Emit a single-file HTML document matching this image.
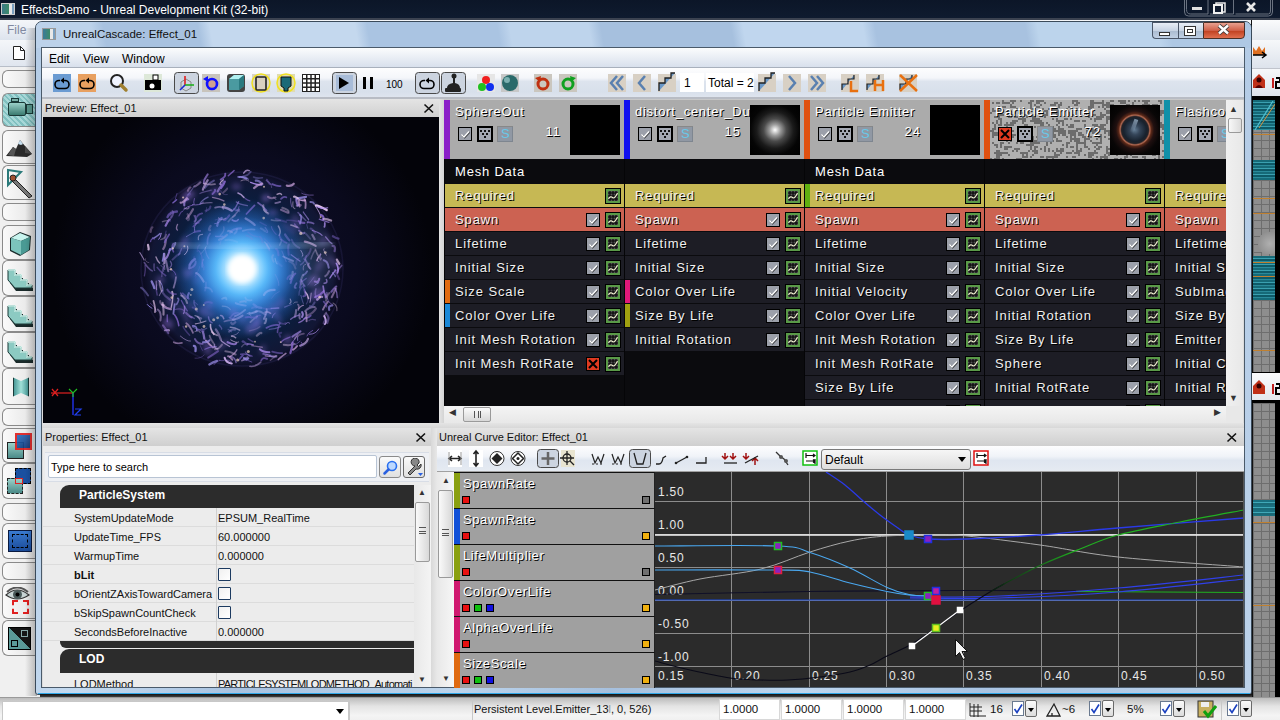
<!DOCTYPE html><html><head><meta charset="utf-8"><style>
*{margin:0;padding:0;box-sizing:border-box}
html,body{width:1280px;height:720px;overflow:hidden;background:#ececec;font-family:"Liberation Sans",sans-serif}
.a{position:absolute}
.ui{font-family:"Liberation Sans",sans-serif;font-size:12px;color:#000}
.em{font-family:"Liberation Sans",sans-serif;font-size:13px;color:#fff;letter-spacing:0.8px;text-shadow:1px 1px 0 #000}
.pr{font-family:"Liberation Sans",sans-serif;font-size:11px;color:#000}
</style></head><body>
<div style="position:absolute;left:0px;top:0px;width:1280px;height:18px;background:linear-gradient(#0c1628,#0f1b2f)"></div><div style="position:absolute;left:0px;top:18px;width:1280px;height:2px;background:#3b4250"></div><div style="position:absolute;left:1px;top:3px;width:14px;height:12px;background:linear-gradient(90deg,#3c7a8a 0,#3c8a6a 55%,#e8e8e8 55%,#e8e8e8 80%,#7aa0c0 80%);border:1px solid #ccc"></div><div style="position:absolute;left:21px;top:2px;white-space:nowrap;font-size:12px;color:#fff;line-height:16px">EffectsDemo - Unreal Development Kit (32-bit)</div><svg class="a" style="left:1180px;top:0" width="100" height="18"><g fill="none" stroke="#6a7280" stroke-width="1"><path d="M4.5 0 v12 q0 4 4 4 h80 q4 0 4 -4 v-12"/><path d="M6.5 0 v9.5 q0 4.5 4 4.5 h17.5 v-14 M30 14 h23.5 v-14 M55.5 14 h33 q2 0 2 -3 v-11"/></g><rect x="12" y="7" width="10" height="3" fill="#e0e0e0"/><rect x="36" y="3" width="9" height="9" fill="none" stroke="#e8e8e8" stroke-width="1.5"/><rect x="34" y="5" width="8" height="8" fill="#0f1a2e" stroke="#f0f0f0" stroke-width="2"/><path d="M67 3 l8 8 M75 3 l-8 8" stroke="#e8e8e8" stroke-width="2.6"/></svg><div style="position:absolute;left:0px;top:20px;width:1280px;height:20px;background:linear-gradient(#f4f6f9,#dde4ee)"></div><div style="position:absolute;left:7px;top:22px;white-space:nowrap;font-size:12px;color:#8088a0;line-height:16px">File</div><div style="position:absolute;left:0px;top:40px;width:35px;height:657px;background:#f0f0f0"></div><div style="position:absolute;left:1251px;top:20px;width:29px;height:677px;background:#111"></div><div style="position:absolute;left:1252px;top:20px;width:28px;height:20px;background:linear-gradient(#fafbfc,#e4e8ee)"></div><div style="position:absolute;left:1252px;top:40px;width:28px;height:28px;background:linear-gradient(#f6f8fa,#dde3ec)"></div><svg class="a" style="left:1252px;top:44px" width="28" height="18"><path d="M1 3 l3 4 l3 -5 l3 5 l3 -4 v8 h-12 z" fill="#e07020"/><path d="M1 11 h13 M10 8 l4 3 l-4 3" stroke="#000" stroke-width="1.5" fill="none"/></svg><div style="position:absolute;left:1252px;top:68px;width:28px;height:1px;background:#c0c4cc"></div><div style="position:absolute;left:1252px;top:69px;width:28px;height:27px;background:linear-gradient(#f6f8fa,#dde3ec)"></div><svg class="a" style="left:1252px;top:72px" width="28" height="18"><path d="M1 16 v-8 l6 -6 l6 6 v8 z" fill="#c03018"/><circle cx="7" cy="8" r="2.5" fill="#300"/><path d="M3 16 q4 -6 8 0" fill="#500"/><rect x="20" y="6" width="2" height="10" fill="#c02020"/><path d="M24 6 h4 v4 h-4 v6 h4" stroke="#000" stroke-width="2" fill="none"/></svg><div style="position:absolute;left:1252px;top:96px;width:28px;height:4px;background:#000"></div><div style="position:absolute;left:1253px;top:100px;width:22px;height:272px;background-color:#8e8e8e;background-image:linear-gradient(90deg,#6e6e6e 1px,transparent 1px),linear-gradient(#6e6e6e 1px,transparent 1px);background-size:8px 8px"></div><div style="position:absolute;left:1253px;top:100px;width:22px;height:30px;background:repeating-linear-gradient(#166a78 0 2px,#3aa0b0 2px 3px,#0e5a68 3px 5px,#2a8a9a 5px 6px)"></div><div style="position:absolute;left:1253px;top:160px;width:22px;height:20px;background:repeating-linear-gradient(#166a78 0 2px,#3aa0b0 2px 3px,#0e5a68 3px 5px,#2a8a9a 5px 6px)"></div><div style="position:absolute;left:1253px;top:256px;width:22px;height:44px;background:repeating-linear-gradient(#166a78 0 2px,#3aa0b0 2px 3px,#0e5a68 3px 5px,#2a8a9a 5px 6px)"></div><div style="position:absolute;left:1253px;top:134px;width:22px;height:1px;background:#c08030"></div><div style="position:absolute;left:1253px;top:198px;width:22px;height:1px;background:#c08030"></div><div style="position:absolute;left:1253px;top:213px;width:22px;height:1px;background:#c08030"></div><div style="position:absolute;left:1253px;top:262px;width:22px;height:1px;background:#c08030"></div><div style="position:absolute;left:1253px;top:276px;width:22px;height:1px;background:#c08030"></div><div style="position:absolute;left:1253px;top:350px;width:22px;height:1px;background:#c08030"></div><svg class="a" style="left:1253px;top:100px" width="22" height="40"><path d="M2 30 L20 1" stroke="#50c0d0" stroke-width="1.2"/><path d="M6 28 L22 4" stroke="#d09040" stroke-width="1"/></svg><div style="position:absolute;left:1258px;top:228px;width:17px;height:26px;background:radial-gradient(circle at 70% 60%,#b0b0b0,#909090 60%,transparent 62%)"></div><div style="position:absolute;left:1275px;top:100px;width:5px;height:272px;background:#000"></div><div style="position:absolute;left:1252px;top:372px;width:28px;height:1px;background:#000"></div><div style="position:absolute;left:1252px;top:373px;width:28px;height:27px;background:linear-gradient(#fafbfc,#e4e8ee)"></div><svg class="a" style="left:1252px;top:378px" width="28" height="18"><path d="M1 16 v-8 l6 -6 l6 6 v8 z" fill="#c03018"/><circle cx="7" cy="8" r="2.5" fill="#300"/><rect x="20" y="6" width="2" height="10" fill="#c02020"/><path d="M24 6 h4 v4 h-4 v6 h4" stroke="#000" stroke-width="2" fill="none"/></svg><div style="position:absolute;left:1252px;top:400px;width:28px;height:3px;background:#000"></div><div style="position:absolute;left:1253px;top:403px;width:22px;height:294px;background-color:#8e8e8e;background-image:linear-gradient(90deg,#6e6e6e 1px,transparent 1px),linear-gradient(#6e6e6e 1px,transparent 1px);background-size:8px 8px"></div><div style="position:absolute;left:1253px;top:500px;width:22px;height:16px;background:repeating-linear-gradient(#1a7080 0 2px,#40a8b8 2px 3px,#1a6a78 3px 5px)"></div><div style="position:absolute;left:1253px;top:522px;width:22px;height:1px;background:#c08030"></div><div style="position:absolute;left:1253px;top:605px;width:22px;height:1px;background:#c08030"></div><div style="position:absolute;left:1275px;top:403px;width:5px;height:294px;background:#000"></div><div style="position:absolute;left:0px;top:40px;width:35px;height:27px;background:linear-gradient(#f4f6f9,#dfe5ee)"></div><div style="position:absolute;left:0px;top:66px;width:35px;height:1px;background:#b8bec8"></div><svg class="a" style="left:12px;top:45px" width="14" height="16"><path d="M1.5 1.5 h7 l4 4 v9 h-11 z" fill="#fff" stroke="#222" stroke-width="1"/><path d="M8.5 1.5 v4 h4" fill="none" stroke="#222" stroke-width="1"/></svg><div style="position:absolute;left:2px;top:70px;width:33px;height:18px;background:linear-gradient(90deg,#fafafa,#e4e4e4);border:1px solid #8a8a8a;border-right:none;border-radius:6px 0 0 6px"></div><div style="position:absolute;left:2px;top:203px;width:33px;height:18px;background:linear-gradient(90deg,#fafafa,#e4e4e4);border:1px solid #8a8a8a;border-right:none;border-radius:6px 0 0 6px"></div><div style="position:absolute;left:2px;top:408px;width:33px;height:18px;background:linear-gradient(90deg,#fafafa,#e4e4e4);border:1px solid #8a8a8a;border-right:none;border-radius:6px 0 0 6px"></div><div style="position:absolute;left:2px;top:503px;width:33px;height:18px;background:linear-gradient(90deg,#fafafa,#e4e4e4);border:1px solid #8a8a8a;border-right:none;border-radius:6px 0 0 6px"></div><div style="position:absolute;left:2px;top:562px;width:33px;height:18px;background:linear-gradient(90deg,#fafafa,#e4e4e4);border:1px solid #8a8a8a;border-right:none;border-radius:6px 0 0 6px"></div><div style="position:absolute;left:2px;top:93px;width:33px;height:34px;background:repeating-linear-gradient(45deg,#a8d8d8 0 2px,#80c0c0 2px 4px);border:1px solid #8a8a8a;border-right:none;border-radius:6px 0 0 6px"><div class="a" style="left:5px;top:8px;width:18px;height:14px;background:linear-gradient(#9ad0c8,#3a7a70);border:1px solid #1a3a38;border-radius:2px"></div><div class="a" style="left:23px;top:10px;width:7px;height:10px;background:#5a9a90;border:1px solid #1a3a38"></div><div class="a" style="left:8px;top:4px;width:8px;height:4px;background:#7ab0a8;border:1px solid #1a3a38"></div></div><div style="position:absolute;left:2px;top:130px;width:33px;height:34px;background:linear-gradient(90deg,#fafafa,#e4e4e4);border:1px solid #8a8a8a;border-right:none;border-radius:6px 0 0 6px"><svg class="a" style="left:2px;top:6px" width="28" height="22"><path d="M1 19 L8 10 L11 12 L15 3 L20 9 L27 17 L22 20 Z" fill="#2a2a2a"/><path d="M15 3 L18 7 L16 8 L13 7 Z" fill="#c8e0f0"/><path d="M8 10 L11 12 L9 19 L3 18 Z" fill="#555"/><path d="M20 9 L27 17 L20 16 Z" fill="#4a4a4a"/></svg></div><div style="position:absolute;left:2px;top:165px;width:33px;height:35px;background:linear-gradient(90deg,#fafafa,#e4e4e4);border:1px solid #8a8a8a;border-right:none;border-radius:6px 0 0 6px"><svg class="a" style="left:2px;top:2px" width="30" height="32"><path d="M3 2 L16 4 L3 17 Z" fill="none" stroke="#2a7a7a" stroke-width="2"/><path d="M8 9 L27 28 L24 30 L6 12 Z" fill="#777" stroke="#222" stroke-width="1"/><circle cx="8" cy="10" r="3" fill="#a05030" stroke="#222" stroke-width="1"/></svg></div><div style="position:absolute;left:2px;top:225px;width:33px;height:35px;background:linear-gradient(90deg,#fafafa,#e4e4e4);border:1px solid #8a8a8a;border-right:none;border-radius:6px 0 0 6px"><svg class="a" style="left:3px;top:3px" width="28" height="29"><path d="M4 9 L14 3 L25 7 L24 21 L14 27 L4 22 Z" fill="#1a2a2a"/><path d="M5 9 L14 4 L24 8 L15 12 Z" fill="#c8f4ee"/><path d="M5 9 L15 12 L15 26 L5 21 Z" fill="#7cc4bc"/><path d="M15 12 L24 8 L23 21 L15 26 Z" fill="#4a9a94"/></svg></div><div style="position:absolute;left:2px;top:260px;width:33px;height:36px;background:linear-gradient(90deg,#fafafa,#e4e4e4);border:1px solid #8a8a8a;border-right:none;border-radius:6px 0 0 6px"><svg class="a" style="left:3px;top:6px" width="28" height="24"><path d="M4 6 h7 v5 h6 v5 h6 v5 h4 v3 h-17 l-6 -8 z" fill="#1a2a2a"/><path d="M2 3 h7 v5 h6 v5 h6 v5 h5 v3 h-17 l-7 -8 z" fill="#8ccac2" stroke="#1a3a38" stroke-width="1"/><path d="M2 3 h7 v5 h6 v5 h6 v5 h5" fill="none" stroke="#d0f8f0" stroke-width="1.5"/></svg></div><div style="position:absolute;left:2px;top:296px;width:33px;height:36px;background:linear-gradient(90deg,#fafafa,#e4e4e4);border:1px solid #8a8a8a;border-right:none;border-radius:6px 0 0 6px"><svg class="a" style="left:3px;top:6px" width="28" height="24"><path d="M4 6 h7 v5 h6 v5 h6 v5 h4 v3 h-17 l-6 -8 z" fill="#1a2a2a"/><path d="M2 3 h7 v5 h6 v5 h6 v5 h5 v3 h-17 l-7 -8 z" fill="#8ccac2" stroke="#1a3a38" stroke-width="1"/><path d="M2 3 h7 v5 h6 v5 h6 v5 h5" fill="none" stroke="#d0f8f0" stroke-width="1.5"/></svg></div><div style="position:absolute;left:2px;top:332px;width:33px;height:36px;background:linear-gradient(90deg,#fafafa,#e4e4e4);border:1px solid #8a8a8a;border-right:none;border-radius:6px 0 0 6px"><svg class="a" style="left:3px;top:6px" width="28" height="24"><path d="M4 6 h7 v5 h6 v5 h6 v5 h4 v3 h-17 l-6 -8 z" fill="#1a2a2a"/><path d="M2 3 h7 v5 h6 v5 h6 v5 h5 v3 h-17 l-7 -8 z" fill="#8ccac2" stroke="#1a3a38" stroke-width="1"/><path d="M2 3 h7 v5 h6 v5 h6 v5 h5" fill="none" stroke="#d0f8f0" stroke-width="1.5"/></svg></div><div style="position:absolute;left:2px;top:368px;width:33px;height:37px;background:linear-gradient(90deg,#fafafa,#e4e4e4);border:1px solid #8a8a8a;border-right:none;border-radius:6px 0 0 6px"><div class="a" style="left:10px;top:6px;width:16px;height:24px;background:linear-gradient(90deg,#4a9a98,#a0e0d8,#4a9a98);border:1px solid #1a3a38;clip-path:polygon(0 10%,50% 25%,100% 10%,100% 90%,50% 75%,0 90%)"></div></div><div style="position:absolute;left:2px;top:428px;width:33px;height:35px;background:linear-gradient(90deg,#fafafa,#e4e4e4);border:1px solid #8a8a8a;border-right:none;border-radius:6px 0 0 6px"><div class="a" style="left:4px;top:13px;width:17px;height:17px;background:linear-gradient(#9ad0c8,#4a8a88);border:1px solid #222"></div><div class="a" style="left:12px;top:4px;width:17px;height:17px;background:linear-gradient(135deg,#2a70c0,#103070);border:2px solid #e02020;opacity:.92"></div></div><div style="position:absolute;left:2px;top:463px;width:33px;height:36px;background:linear-gradient(90deg,#fafafa,#e4e4e4);border:1px solid #8a8a8a;border-right:none;border-radius:6px 0 0 6px"><div class="a" style="left:12px;top:4px;width:16px;height:16px;background:#1a50a0;border:1px dashed #000"></div><div class="a" style="left:4px;top:14px;width:16px;height:16px;background:linear-gradient(#9ad0c8,#4a8a88);border:1px dashed #222"></div><div class="a" style="left:12px;top:14px;width:8px;height:6px;border:1px solid #e02020"></div></div><div style="position:absolute;left:2px;top:523px;width:33px;height:36px;background:linear-gradient(90deg,#fafafa,#e4e4e4);border:1px solid #8a8a8a;border-right:none;border-radius:6px 0 0 6px"><div class="a" style="left:5px;top:6px;width:24px;height:22px;background:linear-gradient(#3a7ad0,#1a4a98);border:1px solid #0a1a40"></div><div class="a" style="left:9px;top:10px;width:16px;height:14px;border:1px dashed #000"></div></div><div style="position:absolute;left:2px;top:583px;width:33px;height:36px;background:linear-gradient(90deg,#fafafa,#e4e4e4);border:1px solid #8a8a8a;border-right:none;border-radius:6px 0 0 6px"><div class="a" style="left:9px;top:16px;width:17px;height:14px;border:2px dashed #e02020"></div><svg class="a" style="left:2px;top:3px" width="26" height="16"><path d="M1 8 Q12 -2 24 8 Q12 16 1 8 z" fill="#c8d4d4" stroke="#333" stroke-width="1.2"/><circle cx="12.5" cy="7.5" r="4.5" fill="#4a5a5a"/><circle cx="12.5" cy="7.5" r="2" fill="#000"/><path d="M2 5 Q12 -4 23 5" stroke="#555" stroke-width="2" fill="none"/></svg></div><div style="position:absolute;left:2px;top:620px;width:33px;height:36px;background:linear-gradient(90deg,#fafafa,#e4e4e4);border:1px solid #8a8a8a;border-right:none;border-radius:6px 0 0 6px"><div class="a" style="left:5px;top:6px;width:23px;height:23px;background:linear-gradient(to top right,#5a9a98 50%,#151515 50%);border:1px solid #000"></div><div class="a" style="left:18px;top:9px;width:7px;height:7px;border:1px solid #8aa"></div><div class="a" style="left:8px;top:19px;width:7px;height:7px;border:1px solid #000"></div></div><div style="position:absolute;left:25px;top:28px;width:12px;height:668px;background:linear-gradient(90deg,rgba(0,0,0,0),rgba(0,0,0,.25))"></div><div style="position:absolute;left:35px;top:21px;width:1217px;height:674px;background:linear-gradient(100deg,#b4cce6 0%,#c4daf0 12%,#a8c2e0 24%,#bcd4ec 40%,#a6c0de 52%,#bed6ee 66%,#aac4e2 80%,#bcd2ea 100%);border:1px solid #3a4a5a;border-radius:7px 7px 3px 3px"></div><div style="position:absolute;left:36px;top:22px;width:1215px;height:26px;background:linear-gradient(80deg,#bcd2ea 0px,#bcd2ea 58px,#a8c2e0 70px,#a8c2e0 163px,#c4d8ee 175px,#c4d8ee 318px,#aac4e2 330px,#aac4e2 458px,#bed4ec 470px,#bed4ec 548px,#a6c0de 560px,#a6c0de 688px,#c0d6ee 700px,#c0d6ee 818px,#a8c2e0 830px,#a8c2e0 978px,#bcd4ec 990px,#bcd4ec 1108px,#aec8e4 1120px,#aec8e4 1204px,#bcd2ea 1216px);border-radius:6px 6px 0 0"></div><div style="position:absolute;left:42px;top:28px;width:14px;height:12px;background:linear-gradient(90deg,#3c7a9a 0,#3c8a6a 55%,#e8e8e8 55%,#e8e8e8 80%,#7aa0c0 80%);border:1px solid #999"></div><div style="position:absolute;left:63px;top:26px;white-space:nowrap;font-size:11.5px;color:#111;line-height:16px">UnrealCascade: Effect_01</div><div style="position:absolute;left:1152px;top:22px;width:26px;height:17px;background:linear-gradient(#e8eef6,#c8d4e4 50%,#aabbd0 52%,#c0d0e4);border:1px solid #4a5668;border-right:none;border-radius:0 0 0 4px"></div><div style="position:absolute;left:1159px;top:32px;width:11px;height:4px;background:#fff;border:1px solid #333"></div><div style="position:absolute;left:1178px;top:22px;width:25px;height:17px;background:linear-gradient(#e8eef6,#c8d4e4 50%,#aabbd0 52%,#c0d0e4);border:1px solid #4a5668;border-right:none"></div><div style="position:absolute;left:1184px;top:26px;width:12px;height:10px;background:#fff;border:1px solid #333;box-shadow:inset 0 0 0 2px #fff,inset 0 0 0 3px #333"></div><div style="position:absolute;left:1203px;top:22px;width:42px;height:17px;background:linear-gradient(#e8a090,#d06048 50%,#c04020 52%,#e07050);border:1px solid #4a3028;border-radius:0 0 4px 0"></div><svg class="a" style="left:1217px;top:24px" width="14" height="12"><path d="M2 1.5 l9 8 M11 1.5 l-9 8" stroke="#3a3a3a" stroke-width="4.2"/><path d="M2 1.5 l9 8 M11 1.5 l-9 8" stroke="#fff" stroke-width="2.4"/></svg><div style="position:absolute;left:41px;top:47px;width:1204px;height:641px;background:#dcdcdc;border:1px solid #4a5a6a"></div><div style="position:absolute;left:42px;top:48px;width:1202px;height:19px;background:linear-gradient(#fbfcfd,#e6ebf3 60%,#d8e0ec)"></div><div style="position:absolute;left:49px;top:52px;white-space:nowrap;font-size:12px;color:#000;line-height:14px">Edit</div><div style="position:absolute;left:83px;top:52px;white-space:nowrap;font-size:12px;color:#000;line-height:14px">View</div><div style="position:absolute;left:122px;top:52px;white-space:nowrap;font-size:12px;color:#000;line-height:14px">Window</div><div style="position:absolute;left:42px;top:67px;width:1202px;height:1px;background:#a8b0bc"></div><div style="position:absolute;left:42px;top:68px;width:1202px;height:30px;background:linear-gradient(#fdfdfe,#f4f6fa 33%,#dde4ee 45%,#d8e0eb 80%,#dfe5ee 100%)"></div><div style="position:absolute;left:42px;top:97px;width:1202px;height:2px;background:#b8bcc4"></div><div style="position:absolute;left:43px;top:99px;width:396px;height:18px;background:linear-gradient(#e4e4e4,#d0d0d0)"></div><div style="position:absolute;left:45px;top:100px;white-space:nowrap;font-size:11px;color:#111;line-height:16px">Preview: Effect_01</div><svg class="a" style="left:423px;top:103px" width="12" height="11"><path d="M1.5 1.5 L10 9.5 M10 1.5 L1.5 9.5" stroke="#111" stroke-width="1.6"/></svg><svg class="a" style="left:43px;top:117px" width="396" height="306"><defs><radialGradient id="halo" cx="199" cy="152" r="190" gradientUnits="userSpaceOnUse"><stop offset="0" stop-color="#10102a"/><stop offset=".6" stop-color="#0a0a1e"/><stop offset="1" stop-color="#030309"/></radialGradient><radialGradient id="core" cx="199" cy="152" r="102" gradientUnits="userSpaceOnUse"><stop offset="0" stop-color="#ffffff"/><stop offset=".09" stop-color="#d8f4ff"/><stop offset=".22" stop-color="#50b8f8"/><stop offset=".36" stop-color="#2a6ac0"/><stop offset=".52" stop-color="#143466"/><stop offset=".7" stop-color="#0c1c3c"/><stop offset=".9" stop-color="#121634"/><stop offset="1" stop-color="#0c0c22" stop-opacity="0"/></radialGradient><radialGradient id="glow" cx="199" cy="152" r="70" gradientUnits="userSpaceOnUse"><stop offset="0" stop-color="#ffffff" stop-opacity="1"/><stop offset=".14" stop-color="#e0f8ff" stop-opacity=".95"/><stop offset=".38" stop-color="#60c0ff" stop-opacity=".65"/><stop offset=".7" stop-color="#3080e0" stop-opacity=".3"/><stop offset="1" stop-color="#2060c0" stop-opacity="0"/></radialGradient><filter id="bl"><feGaussianBlur stdDeviation="0.5"/></filter><filter id="bl2"><feGaussianBlur stdDeviation="2.5"/></filter><filter id="bl3"><feGaussianBlur stdDeviation="6"/></filter></defs><rect width="396" height="306" fill="url(#halo)"/><circle cx="199" cy="152" r="102" fill="url(#core)"/><ellipse cx="199" cy="152" rx="101" ry="97.0" fill="none" stroke="#6a60c0" stroke-width="1.5" opacity="0.12" filter="url(#bl)"/><g filter="url(#bl2)"><ellipse cx="234.7" cy="199.7" rx="7.3" ry="2.2" fill="#8a6ad0" opacity="0.38" transform="rotate(66 234.7 199.7)"/><ellipse cx="151.2" cy="149.9" rx="4.2" ry="3.3" fill="#8a6ad0" opacity="0.27" transform="rotate(16 151.2 149.9)"/><ellipse cx="229.8" cy="95.7" rx="4.6" ry="2.7" fill="#8a6ad0" opacity="0.41" transform="rotate(171 229.8 95.7)"/><ellipse cx="140.2" cy="194.9" rx="8.9" ry="2.1" fill="#8a6ad0" opacity="0.46" transform="rotate(52 140.2 194.9)"/><ellipse cx="237.6" cy="185.8" rx="5.5" ry="4.4" fill="#8a6ad0" opacity="0.30" transform="rotate(105 237.6 185.8)"/><ellipse cx="145.5" cy="205.1" rx="6.7" ry="2.2" fill="#8a6ad0" opacity="0.26" transform="rotate(37 145.5 205.1)"/><ellipse cx="128.0" cy="185.3" rx="5.6" ry="3.8" fill="#8a6ad0" opacity="0.36" transform="rotate(54 128.0 185.3)"/><ellipse cx="172.3" cy="74.8" rx="5.2" ry="3.7" fill="#8a6ad0" opacity="0.38" transform="rotate(158 172.3 74.8)"/><ellipse cx="179.8" cy="228.0" rx="8.9" ry="2.4" fill="#8a6ad0" opacity="0.35" transform="rotate(136 179.8 228.0)"/><ellipse cx="146.5" cy="155.5" rx="4.2" ry="4.0" fill="#8a6ad0" opacity="0.44" transform="rotate(103 146.5 155.5)"/><ellipse cx="164.4" cy="230.5" rx="7.5" ry="3.8" fill="#8a6ad0" opacity="0.39" transform="rotate(82 164.4 230.5)"/><ellipse cx="280.8" cy="123.6" rx="6.4" ry="4.0" fill="#8a6ad0" opacity="0.27" transform="rotate(126 280.8 123.6)"/><ellipse cx="276.3" cy="148.8" rx="8.1" ry="2.9" fill="#8a6ad0" opacity="0.35" transform="rotate(120 276.3 148.8)"/><ellipse cx="154.2" cy="162.6" rx="4.8" ry="2.4" fill="#8a6ad0" opacity="0.26" transform="rotate(138 154.2 162.6)"/><ellipse cx="199.8" cy="201.4" rx="6.0" ry="4.6" fill="#8a6ad0" opacity="0.27" transform="rotate(81 199.8 201.4)"/><ellipse cx="252.9" cy="105.5" rx="8.1" ry="4.6" fill="#8a6ad0" opacity="0.32" transform="rotate(75 252.9 105.5)"/><ellipse cx="246.0" cy="111.8" rx="8.8" ry="2.5" fill="#8a6ad0" opacity="0.29" transform="rotate(42 246.0 111.8)"/><ellipse cx="142.6" cy="157.1" rx="6.9" ry="2.8" fill="#8a6ad0" opacity="0.25" transform="rotate(75 142.6 157.1)"/><ellipse cx="141.0" cy="127.3" rx="8.8" ry="4.1" fill="#8a6ad0" opacity="0.38" transform="rotate(111 141.0 127.3)"/><ellipse cx="273.3" cy="177.2" rx="8.5" ry="4.3" fill="#8a6ad0" opacity="0.47" transform="rotate(144 273.3 177.2)"/><ellipse cx="147.0" cy="188.8" rx="4.5" ry="3.9" fill="#8a6ad0" opacity="0.27" transform="rotate(12 147.0 188.8)"/><ellipse cx="228.0" cy="197.3" rx="5.7" ry="2.2" fill="#8a6ad0" opacity="0.25" transform="rotate(27 228.0 197.3)"/><ellipse cx="166.2" cy="188.3" rx="4.1" ry="4.6" fill="#8a6ad0" opacity="0.40" transform="rotate(27 166.2 188.3)"/><ellipse cx="165.9" cy="197.3" rx="5.8" ry="2.4" fill="#8a6ad0" opacity="0.46" transform="rotate(179 165.9 197.3)"/><ellipse cx="131.1" cy="158.6" rx="4.4" ry="2.3" fill="#8a6ad0" opacity="0.34" transform="rotate(48 131.1 158.6)"/><ellipse cx="244.7" cy="222.5" rx="4.1" ry="4.9" fill="#8a6ad0" opacity="0.38" transform="rotate(26 244.7 222.5)"/><ellipse cx="270.1" cy="163.7" rx="6.6" ry="4.9" fill="#8a6ad0" opacity="0.47" transform="rotate(125 270.1 163.7)"/><ellipse cx="160.1" cy="193.4" rx="4.8" ry="4.3" fill="#8a6ad0" opacity="0.38" transform="rotate(140 160.1 193.4)"/><ellipse cx="209.4" cy="210.2" rx="8.1" ry="5.0" fill="#8a6ad0" opacity="0.46" transform="rotate(145 209.4 210.2)"/><ellipse cx="193.5" cy="69.7" rx="5.1" ry="3.6" fill="#8a6ad0" opacity="0.34" transform="rotate(5 193.5 69.7)"/><ellipse cx="190.5" cy="195.8" rx="5.3" ry="4.1" fill="#8a6ad0" opacity="0.49" transform="rotate(81 190.5 195.8)"/><ellipse cx="290.6" cy="145.4" rx="8.8" ry="3.1" fill="#8a6ad0" opacity="0.31" transform="rotate(41 290.6 145.4)"/><ellipse cx="214.5" cy="202.5" rx="7.1" ry="4.7" fill="#8a6ad0" opacity="0.46" transform="rotate(86 214.5 202.5)"/><ellipse cx="222.8" cy="81.1" rx="4.4" ry="4.0" fill="#8a6ad0" opacity="0.48" transform="rotate(141 222.8 81.1)"/><ellipse cx="117.3" cy="162.9" rx="4.9" ry="4.4" fill="#8a6ad0" opacity="0.33" transform="rotate(144 117.3 162.9)"/><ellipse cx="124.8" cy="206.7" rx="6.0" ry="4.8" fill="#8a6ad0" opacity="0.43" transform="rotate(31 124.8 206.7)"/><ellipse cx="228.9" cy="192.1" rx="8.5" ry="4.4" fill="#8a6ad0" opacity="0.29" transform="rotate(149 228.9 192.1)"/><ellipse cx="147.3" cy="76.6" rx="5.8" ry="3.6" fill="#8a6ad0" opacity="0.28" transform="rotate(3 147.3 76.6)"/><ellipse cx="143.9" cy="79.5" rx="6.6" ry="4.8" fill="#8a6ad0" opacity="0.36" transform="rotate(157 143.9 79.5)"/><ellipse cx="219.9" cy="232.4" rx="5.3" ry="2.9" fill="#8a6ad0" opacity="0.31" transform="rotate(106 219.9 232.4)"/></g><g filter="url(#bl)" fill="none" stroke-linecap="round"><path d="M144.8 181.0 Q144.5 178.3 145.9 176.1" stroke="#9488e0" stroke-width="2.1" opacity="0.65"/><path d="M228.3 191.7 Q225.9 192.1 220.2 191.3" stroke="#8a68d0" stroke-width="1.6" opacity="0.32"/><path d="M115.8 122.4 Q117.4 121.1 118.3 116.3" stroke="#b090f0" stroke-width="1.0" opacity="0.82"/><path d="M253.5 166.2 Q250.3 170.9 252.7 170.9" stroke="#b090f0" stroke-width="1.8" opacity="0.46"/><path d="M121.3 146.3 Q121.5 141.4 121.3 136.8" stroke="#d0b0f0" stroke-width="2.1" opacity="0.67"/><path d="M193.1 245.7 Q192.4 240.3 187.6 239.3" stroke="#b090f0" stroke-width="1.3" opacity="0.58"/><path d="M121.3 188.0 Q117.0 187.7 117.2 184.1" stroke="#c8a0d8" stroke-width="2.1" opacity="0.40"/><path d="M217.8 245.1 Q212.3 250.2 206.9 249.3" stroke="#d0b0f0" stroke-width="1.5" opacity="0.44"/><path d="M157.3 215.8 Q156.0 212.3 151.9 214.5" stroke="#e8c8f0" stroke-width="0.9" opacity="0.53"/><path d="M151.1 106.6 Q154.0 104.3 151.0 98.5" stroke="#b090f0" stroke-width="1.3" opacity="0.32"/><path d="M239.2 236.1 Q236.3 236.4 229.2 234.6" stroke="#7860c0" stroke-width="1.7" opacity="0.58"/><path d="M120.7 154.5 Q121.1 149.6 117.9 148.5" stroke="#b090f0" stroke-width="0.9" opacity="0.45"/><path d="M196.0 196.0 Q190.5 195.6 187.9 199.8" stroke="#a080e0" stroke-width="1.7" opacity="0.37"/><path d="M188.1 244.7 Q184.1 242.0 183.1 243.9" stroke="#8a68d0" stroke-width="1.2" opacity="0.50"/><path d="M131.7 84.4 Q132.5 81.4 134.0 76.4" stroke="#7860c0" stroke-width="0.9" opacity="0.55"/><path d="M260.1 157.7 Q257.3 162.4 258.3 167.4" stroke="#e8c8f0" stroke-width="2.0" opacity="0.32"/><path d="M125.3 154.2 Q124.2 150.1 123.0 143.8" stroke="#d0b0f0" stroke-width="2.1" opacity="0.47"/><path d="M141.3 88.4 Q140.6 83.1 145.2 82.3" stroke="#b090f0" stroke-width="2.1" opacity="0.67"/><path d="M268.2 176.1 Q267.6 183.5 267.0 185.3" stroke="#d0b0f0" stroke-width="1.0" opacity="0.64"/><path d="M192.3 205.3 Q189.3 208.5 188.3 205.8" stroke="#c8a0d8" stroke-width="2.3" opacity="0.37"/><path d="M158.2 201.5 Q156.2 200.6 154.6 199.7" stroke="#d0b0f0" stroke-width="2.0" opacity="0.40"/><path d="M217.9 111.5 Q219.4 111.7 222.2 114.3" stroke="#d0b0f0" stroke-width="2.2" opacity="0.27"/><path d="M251.8 226.9 Q246.9 229.0 240.7 227.8" stroke="#e8c8f0" stroke-width="1.9" opacity="0.42"/><path d="M280.7 174.1 Q277.1 178.5 271.9 180.1" stroke="#8a68d0" stroke-width="2.0" opacity="0.81"/><path d="M230.3 80.0 Q233.6 82.7 233.3 82.8" stroke="#d0b0f0" stroke-width="1.0" opacity="0.36"/><path d="M280.9 131.6 Q279.4 132.0 283.3 138.2" stroke="#d0b0f0" stroke-width="0.9" opacity="0.58"/><path d="M198.0 63.8 Q203.0 61.4 206.0 64.2" stroke="#e8c8f0" stroke-width="1.0" opacity="0.48"/><path d="M190.9 92.4 Q196.4 93.2 196.3 94.1" stroke="#9488e0" stroke-width="2.2" opacity="0.31"/><path d="M260.4 169.8 Q262.2 173.2 262.7 178.6" stroke="#7860c0" stroke-width="1.1" opacity="0.57"/><path d="M122.7 158.6 Q116.7 154.4 114.2 150.4" stroke="#7860c0" stroke-width="1.6" opacity="0.54"/><path d="M237.8 122.6 Q239.8 122.5 236.7 128.1" stroke="#e8c8f0" stroke-width="1.6" opacity="0.28"/><path d="M298.7 148.4 Q299.0 148.5 294.1 153.7" stroke="#b090f0" stroke-width="1.6" opacity="0.43"/><path d="M265.0 221.8 Q263.4 226.5 257.1 228.7" stroke="#d0b0f0" stroke-width="2.1" opacity="0.64"/><path d="M237.6 209.6 Q231.4 212.4 226.3 212.4" stroke="#9488e0" stroke-width="1.3" opacity="0.46"/><path d="M292.7 153.0 Q287.5 159.6 286.9 161.1" stroke="#a080e0" stroke-width="1.3" opacity="0.86"/><path d="M144.3 193.9 Q140.5 188.2 138.4 183.4" stroke="#7860c0" stroke-width="1.3" opacity="0.71"/><path d="M177.4 118.4 Q181.9 113.8 180.8 110.0" stroke="#c8a0d8" stroke-width="1.4" opacity="0.30"/><path d="M272.5 89.2 Q277.4 96.5 277.4 98.5" stroke="#d0b0f0" stroke-width="1.0" opacity="0.77"/><path d="M114.2 178.0 Q112.6 170.3 113.7 168.0" stroke="#8a68d0" stroke-width="1.5" opacity="0.42"/><path d="M196.7 213.2 Q191.4 210.1 187.3 210.2" stroke="#e8c8f0" stroke-width="1.5" opacity="0.54"/><path d="M227.6 196.3 Q224.8 194.1 222.0 195.3" stroke="#c8a0d8" stroke-width="1.5" opacity="0.69"/><path d="M217.3 198.3 Q212.9 198.2 213.5 201.2" stroke="#7860c0" stroke-width="1.2" opacity="0.59"/><path d="M223.9 126.8 Q223.4 128.7 226.4 133.3" stroke="#a080e0" stroke-width="1.7" opacity="0.40"/><path d="M172.2 90.7 Q178.4 88.8 180.4 91.8" stroke="#d0b0f0" stroke-width="1.8" opacity="0.47"/><path d="M171.0 217.4 Q167.0 212.0 167.5 207.5" stroke="#e8c8f0" stroke-width="1.6" opacity="0.78"/><path d="M238.9 134.1 Q240.9 139.0 243.2 144.6" stroke="#b090f0" stroke-width="1.1" opacity="0.32"/><path d="M275.7 212.0 Q273.2 217.1 266.5 217.3" stroke="#b090f0" stroke-width="1.0" opacity="0.68"/><path d="M209.0 239.1 Q202.2 236.0 197.7 237.3" stroke="#7860c0" stroke-width="1.5" opacity="0.63"/><path d="M272.4 202.8 Q267.3 201.8 266.0 203.7" stroke="#a080e0" stroke-width="1.3" opacity="0.34"/><path d="M271.9 133.5 Q269.8 136.1 268.0 141.9" stroke="#d0b0f0" stroke-width="1.5" opacity="0.31"/><path d="M279.1 179.9 Q277.6 178.8 274.3 182.7" stroke="#d0b0f0" stroke-width="2.2" opacity="0.68"/><path d="M257.1 164.1 Q258.0 165.7 256.7 170.8" stroke="#7860c0" stroke-width="1.6" opacity="0.60"/><path d="M255.7 141.6 Q252.8 142.9 253.2 147.6" stroke="#7860c0" stroke-width="1.8" opacity="0.31"/><path d="M265.3 103.6 Q262.3 108.1 264.6 111.4" stroke="#9488e0" stroke-width="0.9" opacity="0.34"/><path d="M127.8 192.2 Q123.2 191.3 119.2 187.8" stroke="#c8a0d8" stroke-width="2.3" opacity="0.71"/><path d="M152.5 234.1 Q153.2 228.7 150.9 228.9" stroke="#9488e0" stroke-width="2.3" opacity="0.84"/><path d="M256.6 197.1 Q256.2 201.7 256.9 201.7" stroke="#d0b0f0" stroke-width="2.0" opacity="0.49"/><path d="M220.8 92.5 Q220.8 94.3 224.4 95.6" stroke="#e8c8f0" stroke-width="1.4" opacity="0.37"/><path d="M293.3 169.4 Q292.4 169.3 288.3 174.8" stroke="#a080e0" stroke-width="2.0" opacity="0.61"/><path d="M213.4 190.5 Q210.4 189.8 209.0 191.2" stroke="#a080e0" stroke-width="1.9" opacity="0.33"/><path d="M188.4 214.8 Q189.2 214.4 185.1 212.4" stroke="#b090f0" stroke-width="1.2" opacity="0.29"/><path d="M272.4 132.4 Q273.6 137.1 277.7 142.7" stroke="#e8c8f0" stroke-width="1.6" opacity="0.37"/><path d="M230.0 138.2 Q228.2 139.9 230.6 144.6" stroke="#c8a0d8" stroke-width="2.0" opacity="0.38"/><path d="M116.6 146.1 Q114.3 143.9 113.0 140.0" stroke="#e8c8f0" stroke-width="1.4" opacity="0.61"/><path d="M272.8 88.3 Q275.8 88.3 283.7 93.1" stroke="#e8c8f0" stroke-width="2.3" opacity="0.94"/><path d="M235.8 191.0 Q230.4 191.4 228.1 191.3" stroke="#b090f0" stroke-width="1.3" opacity="0.60"/><path d="M192.0 212.7 Q188.7 211.7 186.2 214.6" stroke="#d0b0f0" stroke-width="2.1" opacity="0.35"/><path d="M161.3 221.6 Q160.6 216.5 159.8 214.6" stroke="#b090f0" stroke-width="2.3" opacity="0.66"/><path d="M152.0 159.2 Q156.8 151.7 156.6 149.7" stroke="#7860c0" stroke-width="1.0" opacity="0.34"/><path d="M238.0 81.8 Q240.7 79.1 243.3 80.3" stroke="#7860c0" stroke-width="1.8" opacity="0.73"/><path d="M177.1 127.4 Q177.0 122.4 182.5 119.4" stroke="#a080e0" stroke-width="1.3" opacity="0.28"/><path d="M151.0 87.2 Q150.2 85.5 151.4 81.6" stroke="#8a68d0" stroke-width="1.0" opacity="0.65"/><path d="M160.9 153.0 Q161.9 150.1 159.4 145.3" stroke="#8a68d0" stroke-width="1.0" opacity="0.46"/><path d="M180.9 103.2 Q182.4 103.5 186.3 98.3" stroke="#7860c0" stroke-width="2.1" opacity="0.58"/><path d="M271.1 160.0 Q268.9 163.3 264.9 168.0" stroke="#9488e0" stroke-width="0.9" opacity="0.39"/><path d="M113.6 194.6 Q112.7 190.1 107.3 186.1" stroke="#8a68d0" stroke-width="1.0" opacity="0.42"/><path d="M217.0 105.3 Q222.8 108.4 223.4 108.6" stroke="#8a68d0" stroke-width="1.3" opacity="0.31"/><path d="M269.3 117.9 Q272.2 122.9 271.5 122.2" stroke="#d0b0f0" stroke-width="2.1" opacity="0.46"/><path d="M233.1 132.0 Q235.1 132.6 235.4 138.1" stroke="#8a68d0" stroke-width="2.1" opacity="0.47"/><path d="M136.0 98.9 Q138.1 93.9 139.5 94.5" stroke="#8a68d0" stroke-width="1.1" opacity="0.52"/><path d="M189.4 94.0 Q192.9 90.9 195.6 84.7" stroke="#a080e0" stroke-width="1.4" opacity="0.58"/><path d="M130.6 170.7 Q132.7 164.3 133.0 160.2" stroke="#d0b0f0" stroke-width="1.8" opacity="0.50"/><path d="M130.0 179.0 Q129.5 175.4 129.2 174.9" stroke="#e8c8f0" stroke-width="2.0" opacity="0.72"/><path d="M264.5 180.2 Q265.7 183.6 263.3 187.0" stroke="#a080e0" stroke-width="1.1" opacity="0.31"/><path d="M161.2 237.8 Q158.1 241.8 152.0 241.2" stroke="#8a68d0" stroke-width="1.0" opacity="0.36"/><path d="M169.5 77.0 Q173.1 73.6 172.0 72.8" stroke="#8a68d0" stroke-width="1.9" opacity="0.69"/><path d="M228.4 102.9 Q231.8 103.9 237.3 103.5" stroke="#e8c8f0" stroke-width="1.6" opacity="0.33"/><path d="M224.1 241.9 Q220.0 239.8 218.2 243.4" stroke="#8a68d0" stroke-width="1.8" opacity="0.58"/><path d="M169.2 205.8 Q165.9 204.5 165.5 199.9" stroke="#a080e0" stroke-width="1.4" opacity="0.57"/><path d="M109.6 121.0 Q111.0 121.8 117.0 116.6" stroke="#9488e0" stroke-width="1.4" opacity="0.77"/><path d="M151.3 201.4 Q146.4 198.7 146.6 199.2" stroke="#a080e0" stroke-width="1.6" opacity="0.43"/><path d="M263.3 138.6 Q262.8 144.6 257.5 147.9" stroke="#a080e0" stroke-width="1.3" opacity="0.38"/><path d="M125.9 191.9 Q122.5 191.8 119.2 190.3" stroke="#a080e0" stroke-width="0.9" opacity="0.33"/><path d="M253.1 193.0 Q253.0 196.9 251.9 199.7" stroke="#d0b0f0" stroke-width="2.1" opacity="0.46"/><path d="M252.3 156.5 Q249.6 158.6 247.6 165.9" stroke="#8a68d0" stroke-width="2.0" opacity="0.63"/><path d="M192.6 220.7 Q191.0 219.1 188.7 219.3" stroke="#e8c8f0" stroke-width="1.6" opacity="0.59"/><path d="M238.2 215.8 Q234.9 215.9 237.3 219.7" stroke="#8a68d0" stroke-width="2.0" opacity="0.33"/><path d="M165.9 141.5 Q162.3 136.7 162.3 130.6" stroke="#9488e0" stroke-width="1.1" opacity="0.51"/><path d="M178.6 212.0 Q179.1 211.4 176.3 208.3" stroke="#a080e0" stroke-width="1.5" opacity="0.46"/><path d="M283.5 196.9 Q286.9 200.1 284.3 206.1" stroke="#a080e0" stroke-width="2.1" opacity="0.42"/><path d="M289.9 119.2 Q293.6 121.5 295.5 121.6" stroke="#7860c0" stroke-width="2.2" opacity="0.52"/><path d="M281.4 199.1 Q284.1 205.1 281.9 207.1" stroke="#d0b0f0" stroke-width="1.9" opacity="0.89"/><path d="M247.9 108.0 Q253.4 109.9 254.1 110.3" stroke="#e8c8f0" stroke-width="1.6" opacity="0.51"/><path d="M232.2 157.4 Q236.3 164.6 235.8 168.4" stroke="#9488e0" stroke-width="1.0" opacity="0.44"/><path d="M258.4 225.1 Q260.5 226.2 257.5 229.2" stroke="#8a68d0" stroke-width="0.9" opacity="0.75"/><path d="M167.1 113.2 Q164.6 113.2 167.6 108.9" stroke="#c8a0d8" stroke-width="2.2" opacity="0.33"/><path d="M158.2 86.6 Q165.0 85.5 169.2 85.7" stroke="#d0b0f0" stroke-width="1.1" opacity="0.41"/><path d="M221.2 121.7 Q226.6 126.5 228.1 129.7" stroke="#7860c0" stroke-width="1.1" opacity="0.40"/><path d="M143.4 82.0 Q143.8 78.6 147.1 76.9" stroke="#7860c0" stroke-width="2.0" opacity="0.36"/><path d="M210.6 60.0 Q213.8 61.8 219.4 60.7" stroke="#9488e0" stroke-width="1.6" opacity="0.36"/><path d="M152.8 160.8 Q153.9 160.6 152.4 156.4" stroke="#7860c0" stroke-width="0.9" opacity="0.31"/><path d="M203.4 97.0 Q207.4 92.7 211.5 88.4" stroke="#8a68d0" stroke-width="1.7" opacity="0.69"/><path d="M101.1 143.0 Q100.8 141.9 96.8 135.5" stroke="#d0b0f0" stroke-width="1.1" opacity="0.64"/><path d="M272.9 191.5 Q270.7 195.6 265.1 198.2" stroke="#c8a0d8" stroke-width="2.2" opacity="0.37"/><path d="M196.1 60.1 Q198.9 59.7 203.3 61.8" stroke="#9488e0" stroke-width="1.6" opacity="0.87"/><path d="M251.5 107.0 Q253.8 110.5 255.8 111.0" stroke="#a080e0" stroke-width="1.4" opacity="0.46"/><path d="M228.4 109.5 Q228.8 113.1 233.2 117.4" stroke="#7860c0" stroke-width="1.1" opacity="0.50"/><path d="M255.6 104.1 Q257.3 106.2 261.3 105.9" stroke="#8a68d0" stroke-width="2.3" opacity="0.67"/><path d="M128.2 100.7 Q131.6 95.9 129.4 94.0" stroke="#b090f0" stroke-width="1.8" opacity="0.42"/><path d="M232.1 196.3 Q229.5 197.1 229.2 200.7" stroke="#b090f0" stroke-width="1.0" opacity="0.54"/><path d="M154.8 187.8 Q154.9 187.6 151.5 185.1" stroke="#7860c0" stroke-width="1.1" opacity="0.47"/><path d="M130.4 196.9 Q130.7 192.4 131.8 187.1" stroke="#9488e0" stroke-width="1.8" opacity="0.77"/><path d="M260.3 95.0 Q261.4 96.8 265.6 102.5" stroke="#b090f0" stroke-width="1.3" opacity="0.57"/><path d="M267.8 198.6 Q265.7 201.0 261.1 201.8" stroke="#7860c0" stroke-width="1.6" opacity="0.78"/><path d="M221.8 125.1 Q226.3 130.8 226.4 131.8" stroke="#c8a0d8" stroke-width="1.4" opacity="0.50"/><path d="M275.0 140.3 Q273.2 144.1 275.4 144.6" stroke="#d0b0f0" stroke-width="1.0" opacity="0.57"/><path d="M120.2 132.0 Q122.4 129.3 122.9 122.7" stroke="#c8a0d8" stroke-width="2.2" opacity="0.53"/><path d="M175.7 100.9 Q177.0 104.0 182.8 101.3" stroke="#c8a0d8" stroke-width="1.3" opacity="0.55"/><path d="M264.4 177.5 Q263.1 179.6 260.2 179.5" stroke="#7860c0" stroke-width="1.3" opacity="0.34"/><path d="M267.7 132.2 Q267.2 136.8 261.1 141.9" stroke="#8a68d0" stroke-width="2.0" opacity="0.36"/><path d="M137.6 85.7 Q139.1 86.3 143.9 81.2" stroke="#c8a0d8" stroke-width="2.1" opacity="0.72"/><path d="M120.5 197.7 Q120.9 193.4 119.6 185.7" stroke="#e8c8f0" stroke-width="2.1" opacity="0.54"/><path d="M154.3 194.3 Q150.1 189.4 149.6 190.6" stroke="#7860c0" stroke-width="1.8" opacity="0.44"/><path d="M132.8 158.0 Q131.8 153.0 126.1 152.1" stroke="#7860c0" stroke-width="1.0" opacity="0.69"/><path d="M276.3 102.1 Q283.2 104.6 286.0 105.4" stroke="#a080e0" stroke-width="1.2" opacity="0.71"/><path d="M187.3 192.6 Q185.3 189.0 179.2 189.1" stroke="#e8c8f0" stroke-width="1.1" opacity="0.37"/><path d="M223.9 62.7 Q226.1 66.6 227.0 67.1" stroke="#7860c0" stroke-width="1.9" opacity="0.46"/><path d="M195.0 76.0 Q198.3 76.9 201.0 80.5" stroke="#d0b0f0" stroke-width="1.6" opacity="0.74"/><path d="M118.8 159.6 Q118.7 152.1 121.7 148.7" stroke="#a080e0" stroke-width="1.3" opacity="0.39"/><path d="M111.6 153.3 Q110.9 153.1 111.1 146.9" stroke="#b090f0" stroke-width="1.4" opacity="0.42"/><path d="M283.4 162.5 Q285.2 166.2 281.1 166.2" stroke="#b090f0" stroke-width="1.6" opacity="0.60"/><path d="M292.9 171.5 Q289.8 178.1 288.7 180.3" stroke="#c8a0d8" stroke-width="2.0" opacity="0.54"/><path d="M267.6 111.6 Q268.4 111.0 272.2 115.8" stroke="#7860c0" stroke-width="2.1" opacity="0.46"/><path d="M127.0 150.4 Q130.0 148.2 127.3 144.2" stroke="#b090f0" stroke-width="1.3" opacity="0.46"/><path d="M143.3 119.7 Q144.5 118.8 151.2 115.2" stroke="#9488e0" stroke-width="1.0" opacity="0.54"/><path d="M264.1 154.4 Q262.8 157.3 260.1 158.3" stroke="#9488e0" stroke-width="1.8" opacity="0.57"/><path d="M127.1 104.3 Q128.5 99.3 127.9 94.8" stroke="#8a68d0" stroke-width="1.2" opacity="0.38"/><path d="M205.0 115.0 Q209.3 119.4 215.2 119.8" stroke="#7860c0" stroke-width="1.3" opacity="0.44"/><path d="M141.5 181.6 Q140.4 181.5 137.7 176.2" stroke="#a080e0" stroke-width="1.6" opacity="0.51"/><path d="M212.9 63.7 Q215.5 62.8 219.3 67.2" stroke="#9488e0" stroke-width="2.3" opacity="0.68"/><path d="M247.0 220.1 Q240.1 222.4 238.2 225.1" stroke="#8a68d0" stroke-width="1.5" opacity="0.66"/><path d="M182.4 123.2 Q186.6 121.8 194.1 124.9" stroke="#e8c8f0" stroke-width="1.9" opacity="0.22"/><path d="M192.7 94.0 Q196.1 93.1 196.1 89.6" stroke="#8a68d0" stroke-width="1.0" opacity="0.60"/><path d="M177.7 73.8 Q179.5 78.5 184.3 77.6" stroke="#a080e0" stroke-width="0.9" opacity="0.32"/><path d="M234.0 77.3 Q237.7 75.5 238.6 77.7" stroke="#e8c8f0" stroke-width="1.3" opacity="0.65"/><path d="M185.3 58.8 Q191.0 53.9 191.1 53.6" stroke="#8a68d0" stroke-width="1.5" opacity="0.72"/><path d="M215.0 85.7 Q219.7 88.4 223.5 93.5" stroke="#a080e0" stroke-width="1.8" opacity="0.60"/><path d="M124.5 100.1 Q126.3 95.2 133.9 94.5" stroke="#7860c0" stroke-width="2.3" opacity="0.67"/><path d="M152.6 190.1 Q150.2 186.4 151.1 183.3" stroke="#a080e0" stroke-width="1.3" opacity="0.42"/><path d="M245.8 127.5 Q244.5 130.4 245.7 137.6" stroke="#8a68d0" stroke-width="2.1" opacity="0.37"/><path d="M162.1 70.8 Q164.0 67.5 170.9 63.6" stroke="#9488e0" stroke-width="2.0" opacity="0.45"/><path d="M208.8 245.0 Q204.2 242.3 200.1 243.1" stroke="#7860c0" stroke-width="0.9" opacity="0.69"/><path d="M130.5 134.9 Q127.8 130.1 130.4 126.6" stroke="#7860c0" stroke-width="1.6" opacity="0.73"/><path d="M134.4 113.0 Q132.5 111.5 134.5 107.5" stroke="#c8a0d8" stroke-width="1.4" opacity="0.60"/><path d="M255.7 83.5 Q256.1 88.7 256.6 89.4" stroke="#c8a0d8" stroke-width="2.0" opacity="0.69"/><path d="M155.4 122.7 Q154.5 117.2 159.5 117.3" stroke="#e8c8f0" stroke-width="1.2" opacity="0.51"/><path d="M180.9 243.6 Q179.1 244.1 176.1 243.2" stroke="#8a68d0" stroke-width="1.0" opacity="0.49"/><path d="M223.2 201.9 Q222.8 206.3 221.7 206.3" stroke="#e8c8f0" stroke-width="2.1" opacity="0.48"/><path d="M261.5 82.2 Q263.2 84.2 262.4 91.2" stroke="#c8a0d8" stroke-width="1.8" opacity="0.67"/><path d="M151.5 69.4 Q152.4 70.1 157.4 65.3" stroke="#d0b0f0" stroke-width="2.2" opacity="0.45"/><path d="M290.0 186.1 Q294.5 188.4 293.9 193.6" stroke="#e8c8f0" stroke-width="1.1" opacity="0.38"/><path d="M282.6 119.9 Q286.3 124.9 289.0 126.8" stroke="#b090f0" stroke-width="1.4" opacity="0.59"/><path d="M148.7 200.3 Q147.8 200.6 143.2 195.9" stroke="#a080e0" stroke-width="2.2" opacity="0.52"/><path d="M249.7 225.6 Q249.3 230.1 247.4 236.0" stroke="#8a68d0" stroke-width="2.2" opacity="0.78"/><path d="M126.1 213.6 Q126.8 212.4 121.9 213.3" stroke="#d0b0f0" stroke-width="1.8" opacity="0.63"/><path d="M208.2 201.1 Q206.3 198.5 203.8 200.1" stroke="#8a68d0" stroke-width="1.5" opacity="0.36"/><path d="M192.0 202.6 Q184.7 203.4 181.4 204.4" stroke="#c8a0d8" stroke-width="1.6" opacity="0.45"/><path d="M146.2 147.7 Q151.3 144.3 151.3 140.2" stroke="#7860c0" stroke-width="2.0" opacity="0.30"/><path d="M109.0 191.3 Q105.0 188.7 104.2 187.5" stroke="#9488e0" stroke-width="1.0" opacity="0.88"/><path d="M175.0 234.1 Q172.0 236.4 165.2 240.7" stroke="#8a68d0" stroke-width="2.0" opacity="0.57"/><path d="M176.8 243.5 Q173.4 244.1 171.1 247.4" stroke="#8a68d0" stroke-width="1.2" opacity="0.43"/><path d="M177.3 67.4 Q176.4 65.7 180.3 62.7" stroke="#e8c8f0" stroke-width="1.1" opacity="0.76"/><path d="M174.2 108.8 Q175.3 102.0 178.7 101.0" stroke="#9488e0" stroke-width="2.2" opacity="0.61"/><path d="M153.8 213.7 Q154.4 208.8 149.7 208.9" stroke="#9488e0" stroke-width="1.6" opacity="0.78"/><path d="M189.3 242.7 Q186.4 238.9 185.1 239.2" stroke="#c8a0d8" stroke-width="2.1" opacity="0.67"/><path d="M261.8 124.6 Q266.4 125.2 272.7 128.9" stroke="#c8a0d8" stroke-width="2.1" opacity="0.67"/><path d="M264.4 105.2 Q268.9 105.6 270.6 106.6" stroke="#a080e0" stroke-width="1.7" opacity="0.59"/><path d="M234.6 144.9 Q234.2 145.5 238.6 149.0" stroke="#a080e0" stroke-width="2.2" opacity="0.22"/><path d="M192.6 237.5 Q187.3 234.3 182.4 234.2" stroke="#e8c8f0" stroke-width="2.1" opacity="0.39"/><path d="M283.8 175.8 Q283.2 176.8 282.5 180.6" stroke="#b090f0" stroke-width="2.1" opacity="0.39"/><path d="M210.3 227.9 Q207.2 226.8 204.5 226.9" stroke="#a080e0" stroke-width="1.4" opacity="0.80"/><path d="M238.0 92.8 Q244.5 95.9 245.6 95.8" stroke="#c8a0d8" stroke-width="2.1" opacity="0.49"/><path d="M247.7 81.3 Q247.1 84.9 248.7 89.8" stroke="#a080e0" stroke-width="1.1" opacity="0.51"/><path d="M146.6 218.2 Q140.4 211.5 140.1 209.4" stroke="#8a68d0" stroke-width="1.5" opacity="0.36"/><path d="M276.2 161.8 Q275.7 165.8 271.9 164.6" stroke="#a080e0" stroke-width="2.1" opacity="0.72"/><path d="M292.3 171.6 Q294.3 174.8 294.2 180.6" stroke="#a080e0" stroke-width="1.3" opacity="0.70"/><path d="M127.1 182.6 Q121.7 179.4 118.7 174.5" stroke="#b090f0" stroke-width="2.2" opacity="0.34"/><path d="M278.0 98.0 Q281.6 99.7 280.0 102.2" stroke="#8a68d0" stroke-width="2.2" opacity="0.87"/><path d="M186.7 229.5 Q181.3 226.5 178.4 224.0" stroke="#d0b0f0" stroke-width="1.2" opacity="0.66"/><path d="M113.6 172.6 Q113.2 167.2 113.2 164.2" stroke="#d0b0f0" stroke-width="1.2" opacity="0.51"/><path d="M277.6 137.4 Q273.6 143.1 273.7 143.4" stroke="#c8a0d8" stroke-width="1.6" opacity="0.60"/><path d="M262.8 147.2 Q259.5 147.5 260.3 153.0" stroke="#c8a0d8" stroke-width="1.0" opacity="0.48"/><path d="M133.0 177.1 Q127.0 177.6 124.3 172.5" stroke="#8a68d0" stroke-width="1.8" opacity="0.50"/><path d="M214.2 199.4 Q212.8 199.8 207.4 205.1" stroke="#e8c8f0" stroke-width="1.8" opacity="0.36"/><path d="M174.7 74.4 Q176.1 71.6 178.6 68.2" stroke="#b090f0" stroke-width="2.2" opacity="0.59"/><path d="M128.2 190.5 Q129.6 184.7 129.8 180.4" stroke="#e8c8f0" stroke-width="1.3" opacity="0.68"/><path d="M157.6 204.6 Q155.7 198.7 152.0 198.6" stroke="#e8c8f0" stroke-width="1.3" opacity="0.47"/><path d="M225.0 79.8 Q227.1 82.2 232.4 80.6" stroke="#c8a0d8" stroke-width="2.1" opacity="0.48"/><path d="M289.5 129.0 Q293.0 128.6 291.6 134.2" stroke="#a080e0" stroke-width="2.2" opacity="0.48"/><path d="M135.6 137.8 Q136.6 136.8 138.4 131.9" stroke="#9488e0" stroke-width="1.4" opacity="0.46"/><path d="M150.0 215.8 Q146.8 208.7 143.3 206.3" stroke="#c8a0d8" stroke-width="1.8" opacity="0.58"/><path d="M254.1 229.0 Q251.4 232.4 250.0 232.7" stroke="#c8a0d8" stroke-width="1.9" opacity="0.75"/><path d="M168.8 185.8 Q164.2 184.1 161.9 186.2" stroke="#7860c0" stroke-width="2.0" opacity="0.52"/><path d="M275.0 90.2 Q277.3 91.2 282.2 92.0" stroke="#d0b0f0" stroke-width="1.0" opacity="0.60"/><path d="M262.5 200.3 Q260.5 204.1 255.8 205.6" stroke="#a080e0" stroke-width="1.3" opacity="0.73"/><path d="M286.1 154.1 Q284.7 157.6 282.3 159.2" stroke="#d0b0f0" stroke-width="2.0" opacity="0.42"/><path d="M255.0 95.6 Q256.8 97.7 262.8 103.5" stroke="#b090f0" stroke-width="1.6" opacity="0.39"/><path d="M275.8 165.6 Q273.8 166.7 271.9 168.1" stroke="#9488e0" stroke-width="1.0" opacity="0.72"/><path d="M203.5 118.8 Q205.5 118.5 209.2 122.1" stroke="#7860c0" stroke-width="2.1" opacity="0.44"/><path d="M289.4 188.3 Q284.9 188.9 286.2 192.8" stroke="#9488e0" stroke-width="2.2" opacity="0.69"/><path d="M145.0 103.2 Q147.4 102.4 144.6 97.2" stroke="#c8a0d8" stroke-width="2.1" opacity="0.30"/><path d="M133.6 187.4 Q137.0 181.8 134.7 181.4" stroke="#9488e0" stroke-width="1.7" opacity="0.64"/><path d="M140.7 193.4 Q138.0 190.6 131.0 192.7" stroke="#8a68d0" stroke-width="1.2" opacity="0.47"/><path d="M174.0 243.9 Q170.3 245.0 166.3 247.5" stroke="#9488e0" stroke-width="2.2" opacity="0.74"/><path d="M261.5 115.5 Q264.1 117.7 267.2 121.7" stroke="#9488e0" stroke-width="1.8" opacity="0.31"/><path d="M236.9 206.2 Q234.3 212.9 234.5 215.5" stroke="#8a68d0" stroke-width="1.6" opacity="0.55"/><path d="M204.7 240.0 Q201.2 242.6 198.8 243.7" stroke="#d0b0f0" stroke-width="1.6" opacity="0.50"/><path d="M235.3 109.0 Q238.7 114.3 236.2 118.4" stroke="#e8c8f0" stroke-width="1.4" opacity="0.52"/><path d="M151.5 115.1 Q152.0 114.6 157.1 113.9" stroke="#7860c0" stroke-width="2.0" opacity="0.61"/><path d="M191.5 116.6 Q194.0 115.5 194.0 112.0" stroke="#d0b0f0" stroke-width="1.8" opacity="0.34"/><path d="M154.3 134.4 Q154.4 128.6 156.9 128.0" stroke="#7860c0" stroke-width="1.3" opacity="0.28"/><path d="M124.3 204.8 Q124.1 202.1 124.2 197.9" stroke="#8a68d0" stroke-width="1.1" opacity="0.87"/><path d="M220.3 88.3 Q219.9 93.6 225.2 96.5" stroke="#e8c8f0" stroke-width="2.1" opacity="0.41"/><path d="M151.6 104.3 Q154.4 103.0 152.2 98.9" stroke="#a080e0" stroke-width="1.8" opacity="0.48"/><path d="M202.2 81.4 Q204.9 83.4 206.9 83.8" stroke="#8a68d0" stroke-width="1.2" opacity="0.58"/><path d="M122.2 142.3 Q125.1 139.8 127.0 132.0" stroke="#b090f0" stroke-width="2.0" opacity="0.74"/><path d="M260.8 168.4 Q255.7 171.7 256.0 178.1" stroke="#b090f0" stroke-width="1.3" opacity="0.29"/><path d="M147.5 224.1 Q143.9 224.6 137.4 219.1" stroke="#d0b0f0" stroke-width="1.0" opacity="0.49"/><path d="M112.0 195.2 Q112.7 191.5 110.5 183.9" stroke="#e8c8f0" stroke-width="1.8" opacity="0.65"/><path d="M172.2 102.9 Q177.5 101.1 182.9 103.1" stroke="#7860c0" stroke-width="1.1" opacity="0.34"/><path d="M207.0 239.2 Q202.8 236.2 202.5 235.1" stroke="#b090f0" stroke-width="1.3" opacity="0.45"/><path d="M185.3 104.6 Q187.2 101.5 192.2 98.2" stroke="#e8c8f0" stroke-width="1.8" opacity="0.30"/><path d="M257.5 214.4 Q251.9 217.9 249.4 219.7" stroke="#b090f0" stroke-width="2.0" opacity="0.63"/><path d="M171.7 106.7 Q177.0 106.3 179.0 101.8" stroke="#b090f0" stroke-width="0.9" opacity="0.56"/><path d="M273.0 171.9 Q271.1 176.3 273.9 183.0" stroke="#b090f0" stroke-width="1.5" opacity="0.38"/><path d="M179.0 227.6 Q175.3 232.8 171.9 232.2" stroke="#e8c8f0" stroke-width="1.9" opacity="0.36"/><path d="M107.6 114.9 Q108.1 110.8 109.4 110.4" stroke="#c8a0d8" stroke-width="2.2" opacity="0.35"/><path d="M140.0 93.3 Q143.5 89.1 150.1 87.9" stroke="#8a68d0" stroke-width="0.9" opacity="0.73"/><path d="M242.7 206.2 Q239.5 208.0 235.9 205.0" stroke="#8a68d0" stroke-width="1.9" opacity="0.34"/><path d="M150.1 109.7 Q152.2 106.1 156.0 105.9" stroke="#8a68d0" stroke-width="1.4" opacity="0.54"/><path d="M205.2 241.4 Q203.8 243.2 200.9 241.2" stroke="#9488e0" stroke-width="2.2" opacity="0.86"/><path d="M121.7 152.2 Q121.3 147.2 119.9 147.3" stroke="#d0b0f0" stroke-width="1.5" opacity="0.39"/><path d="M282.6 202.7 Q279.8 206.0 280.7 206.6" stroke="#a080e0" stroke-width="1.8" opacity="0.37"/><path d="M105.8 145.6 Q101.5 144.9 102.5 141.7" stroke="#c8a0d8" stroke-width="0.9" opacity="0.37"/><path d="M242.9 236.4 Q236.2 241.4 235.3 242.6" stroke="#c8a0d8" stroke-width="1.6" opacity="0.68"/><path d="M119.6 143.9 Q120.9 138.2 120.8 136.6" stroke="#9488e0" stroke-width="1.8" opacity="0.82"/><path d="M285.0 184.7 Q281.2 189.1 279.9 192.6" stroke="#c8a0d8" stroke-width="1.8" opacity="0.61"/><path d="M163.0 204.0 Q155.8 206.5 152.3 206.9" stroke="#e8c8f0" stroke-width="1.1" opacity="0.60"/><path d="M122.1 125.5 Q121.0 119.4 123.1 114.0" stroke="#7860c0" stroke-width="1.2" opacity="0.37"/><path d="M107.6 124.6 Q108.1 120.8 111.6 121.8" stroke="#7860c0" stroke-width="1.2" opacity="0.76"/><path d="M126.3 133.5 Q131.8 130.2 132.3 126.1" stroke="#9488e0" stroke-width="2.0" opacity="0.65"/><path d="M148.0 151.0 Q153.0 148.5 152.7 144.5" stroke="#b090f0" stroke-width="1.9" opacity="0.44"/><path d="M277.3 136.7 Q275.6 138.6 278.7 142.0" stroke="#a080e0" stroke-width="1.0" opacity="0.52"/><path d="M187.2 115.6 Q190.3 111.3 198.0 111.4" stroke="#b090f0" stroke-width="2.1" opacity="0.46"/><path d="M269.3 113.5 Q275.7 115.0 279.1 118.3" stroke="#a080e0" stroke-width="1.1" opacity="0.75"/><path d="M193.4 85.0 Q196.2 87.4 204.4 88.6" stroke="#b090f0" stroke-width="1.4" opacity="0.46"/><path d="M280.1 169.0 Q280.6 175.6 282.8 179.9" stroke="#a080e0" stroke-width="1.7" opacity="0.77"/><path d="M247.4 158.2 Q244.0 160.4 244.4 162.0" stroke="#7860c0" stroke-width="1.8" opacity="0.61"/><path d="M119.5 104.7 Q124.1 102.9 125.5 104.0" stroke="#e8c8f0" stroke-width="1.4" opacity="0.34"/><path d="M146.3 151.4 Q146.4 144.9 152.0 142.1" stroke="#9488e0" stroke-width="2.3" opacity="0.61"/><path d="M116.3 178.6 Q117.8 175.2 119.1 173.5" stroke="#d0b0f0" stroke-width="1.1" opacity="0.50"/><path d="M219.2 230.3 Q213.0 229.2 208.8 228.6" stroke="#c8a0d8" stroke-width="1.4" opacity="0.49"/><path d="M210.2 224.8 Q208.3 224.1 205.1 221.8" stroke="#8a68d0" stroke-width="1.3" opacity="0.44"/><path d="M193.1 226.3 Q191.6 228.7 184.6 225.2" stroke="#a080e0" stroke-width="2.2" opacity="0.78"/><path d="M213.7 194.6 Q207.6 197.1 206.4 196.0" stroke="#d0b0f0" stroke-width="2.2" opacity="0.59"/><path d="M170.1 230.5 Q166.6 227.8 162.9 223.5" stroke="#c8a0d8" stroke-width="1.9" opacity="0.80"/><path d="M179.9 89.9 Q185.9 91.7 188.5 93.5" stroke="#d0b0f0" stroke-width="2.3" opacity="0.67"/><path d="M213.6 200.6 Q207.5 199.8 202.5 200.3" stroke="#7860c0" stroke-width="1.7" opacity="0.65"/><path d="M189.2 103.0 Q193.2 105.6 195.2 102.6" stroke="#b090f0" stroke-width="1.7" opacity="0.64"/><path d="M218.4 190.9 Q213.7 190.7 210.6 187.3" stroke="#9488e0" stroke-width="2.2" opacity="0.52"/><path d="M159.5 233.5 Q158.7 232.6 157.3 228.6" stroke="#7860c0" stroke-width="0.9" opacity="0.47"/><path d="M160.6 164.5 Q156.9 157.9 153.2 156.1" stroke="#d0b0f0" stroke-width="2.2" opacity="0.51"/><path d="M271.8 190.0 Q266.0 189.9 262.1 194.1" stroke="#d0b0f0" stroke-width="1.8" opacity="0.46"/><path d="M183.4 182.4 Q183.5 179.3 179.2 181.8" stroke="#e8c8f0" stroke-width="1.9" opacity="0.36"/><path d="M262.4 175.0 Q264.7 177.3 265.6 181.5" stroke="#e8c8f0" stroke-width="1.5" opacity="0.76"/><path d="M267.4 85.0 Q270.2 84.8 271.2 86.8" stroke="#9488e0" stroke-width="1.9" opacity="0.71"/><path d="M254.9 187.7 Q256.6 187.9 255.2 193.0" stroke="#c8a0d8" stroke-width="1.7" opacity="0.48"/><path d="M121.6 125.3 Q122.9 122.7 126.3 117.3" stroke="#7860c0" stroke-width="1.6" opacity="0.75"/><path d="M176.1 122.8 Q181.2 120.7 183.9 117.9" stroke="#c8a0d8" stroke-width="2.2" opacity="0.42"/><path d="M249.7 154.8 Q250.1 157.6 247.1 162.1" stroke="#d0b0f0" stroke-width="2.3" opacity="0.42"/><path d="M129.8 85.9 Q130.0 86.0 133.6 82.7" stroke="#7860c0" stroke-width="1.4" opacity="0.90"/><path d="M222.1 197.3 Q215.4 193.0 212.7 194.4" stroke="#d0b0f0" stroke-width="2.1" opacity="0.44"/><path d="M248.7 122.7 Q250.8 128.5 256.4 130.9" stroke="#a080e0" stroke-width="1.9" opacity="0.31"/><path d="M172.7 119.3 Q173.7 119.7 179.9 119.3" stroke="#9488e0" stroke-width="1.4" opacity="0.59"/><path d="M253.7 88.8 Q257.0 86.9 257.9 88.1" stroke="#c8a0d8" stroke-width="2.0" opacity="0.43"/><path d="M173.5 229.8 Q168.1 228.9 161.8 232.2" stroke="#7860c0" stroke-width="1.1" opacity="0.84"/><path d="M254.3 185.0 Q250.9 184.6 250.5 186.3" stroke="#e8c8f0" stroke-width="1.0" opacity="0.38"/><path d="M253.3 81.6 Q259.8 80.3 263.0 79.8" stroke="#9488e0" stroke-width="2.3" opacity="0.82"/><path d="M263.2 161.5 Q258.2 165.3 259.0 164.1" stroke="#8a68d0" stroke-width="1.4" opacity="0.51"/><path d="M111.3 171.1 Q110.9 168.8 108.7 164.4" stroke="#9488e0" stroke-width="2.3" opacity="0.83"/><path d="M202.7 188.6 Q194.9 187.4 192.7 186.1" stroke="#d0b0f0" stroke-width="1.9" opacity="0.44"/><path d="M283.8 177.5 Q284.1 185.2 289.0 187.4" stroke="#8a68d0" stroke-width="0.9" opacity="0.62"/><path d="M141.6 137.7 Q146.1 133.6 144.6 129.1" stroke="#e8c8f0" stroke-width="1.0" opacity="0.70"/><path d="M258.7 76.3 Q262.0 78.4 270.3 78.1" stroke="#a080e0" stroke-width="1.0" opacity="0.51"/><path d="M159.2 149.9 Q158.9 143.4 160.3 142.7" stroke="#a080e0" stroke-width="1.7" opacity="0.47"/><path d="M169.6 80.4 Q176.6 81.5 180.9 83.9" stroke="#c8a0d8" stroke-width="1.4" opacity="0.59"/><path d="M202.6 101.5 Q209.5 105.5 211.7 107.9" stroke="#d0b0f0" stroke-width="2.2" opacity="0.51"/><path d="M151.7 114.0 Q150.7 108.2 153.3 107.1" stroke="#a080e0" stroke-width="1.0" opacity="0.69"/><path d="M159.7 226.8 Q154.7 227.3 151.9 222.0" stroke="#a080e0" stroke-width="1.8" opacity="0.59"/><path d="M157.4 213.0 Q155.4 213.2 149.5 210.0" stroke="#9488e0" stroke-width="1.0" opacity="0.48"/><path d="M188.8 246.6 Q182.7 245.5 181.6 240.7" stroke="#d0b0f0" stroke-width="2.0" opacity="0.90"/><path d="M232.7 101.7 Q238.5 103.7 243.1 104.9" stroke="#8a68d0" stroke-width="2.0" opacity="0.30"/><path d="M218.4 216.0 Q217.2 215.3 213.8 218.7" stroke="#e8c8f0" stroke-width="2.2" opacity="0.37"/><path d="M144.6 78.0 Q147.1 75.7 151.3 69.0" stroke="#9488e0" stroke-width="1.1" opacity="0.41"/><path d="M248.1 187.5 Q245.0 188.5 241.7 190.1" stroke="#b090f0" stroke-width="1.3" opacity="0.40"/><path d="M255.9 198.2 Q249.8 200.3 247.7 202.2" stroke="#a080e0" stroke-width="1.4" opacity="0.64"/><path d="M205.1 227.3 Q201.1 225.7 198.6 229.8" stroke="#d0b0f0" stroke-width="1.3" opacity="0.31"/><path d="M170.4 226.1 Q167.0 221.0 166.6 218.6" stroke="#e8c8f0" stroke-width="1.8" opacity="0.36"/><path d="M227.2 238.5 Q224.3 237.0 220.0 236.9" stroke="#a080e0" stroke-width="1.4" opacity="0.75"/><path d="M199.8 113.9 Q206.3 111.8 211.5 112.7" stroke="#d0b0f0" stroke-width="1.7" opacity="0.37"/><path d="M233.8 239.0 Q227.2 239.9 222.1 238.9" stroke="#c8a0d8" stroke-width="1.0" opacity="0.85"/><path d="M140.6 196.4 Q141.9 194.6 141.5 189.2" stroke="#b090f0" stroke-width="1.5" opacity="0.60"/><path d="M239.3 90.7 Q244.8 92.2 245.6 94.4" stroke="#e8c8f0" stroke-width="2.0" opacity="0.37"/><path d="M202.8 184.7 Q202.5 183.6 197.2 184.9" stroke="#c8a0d8" stroke-width="2.0" opacity="0.49"/><path d="M208.0 198.6 Q203.5 195.2 203.8 196.8" stroke="#d0b0f0" stroke-width="1.0" opacity="0.48"/><path d="M178.0 71.2 Q181.1 67.3 181.9 64.4" stroke="#8a68d0" stroke-width="2.0" opacity="0.87"/><path d="M257.0 224.2 Q251.3 229.1 251.6 228.1" stroke="#7860c0" stroke-width="1.0" opacity="0.64"/><path d="M162.6 93.8 Q167.3 92.7 167.4 89.5" stroke="#7860c0" stroke-width="2.1" opacity="0.44"/><path d="M256.2 82.7 Q256.5 83.3 262.2 83.5" stroke="#c8a0d8" stroke-width="1.8" opacity="0.87"/><path d="M254.6 217.6 Q251.1 223.5 248.1 227.0" stroke="#a080e0" stroke-width="0.9" opacity="0.73"/><path d="M240.3 139.5 Q243.5 141.3 250.0 143.9" stroke="#d0b0f0" stroke-width="2.0" opacity="0.51"/><path d="M119.9 174.3 Q120.0 166.3 115.6 163.6" stroke="#9488e0" stroke-width="1.1" opacity="0.77"/><path d="M236.4 118.3 Q237.1 123.4 243.6 125.9" stroke="#8a68d0" stroke-width="1.8" opacity="0.46"/><path d="M174.9 231.7 Q171.0 232.0 171.4 227.3" stroke="#d0b0f0" stroke-width="1.6" opacity="0.61"/><path d="M247.2 182.0 Q249.0 185.4 246.8 186.4" stroke="#e8c8f0" stroke-width="1.1" opacity="0.57"/><path d="M185.0 114.1 Q185.9 113.1 189.2 115.3" stroke="#c8a0d8" stroke-width="1.9" opacity="0.50"/><path d="M195.7 215.1 Q194.6 217.9 188.2 218.8" stroke="#d0b0f0" stroke-width="0.9" opacity="0.46"/><path d="M154.3 99.6 Q154.3 97.8 159.1 96.4" stroke="#8a68d0" stroke-width="1.9" opacity="0.50"/><path d="M222.2 110.6 Q225.9 115.6 223.7 115.4" stroke="#b090f0" stroke-width="1.4" opacity="0.36"/><path d="M109.2 153.9 Q105.2 151.9 101.3 145.5" stroke="#b090f0" stroke-width="1.6" opacity="0.44"/><path d="M207.6 65.4 Q211.8 67.2 218.5 68.0" stroke="#b090f0" stroke-width="1.4" opacity="0.88"/><path d="M144.8 73.8 Q145.9 70.6 147.5 70.4" stroke="#c8a0d8" stroke-width="2.0" opacity="0.45"/><path d="M257.9 178.4 Q259.4 184.1 260.3 186.5" stroke="#9488e0" stroke-width="0.9" opacity="0.50"/><path d="M263.1 195.1 Q263.8 198.8 263.6 204.3" stroke="#c8a0d8" stroke-width="1.9" opacity="0.68"/><path d="M163.0 95.3 Q164.1 95.0 163.6 90.7" stroke="#7860c0" stroke-width="1.0" opacity="0.36"/><path d="M269.7 213.4 Q264.5 216.0 263.9 218.9" stroke="#8a68d0" stroke-width="1.0" opacity="0.67"/><path d="M257.8 133.4 Q261.4 138.9 259.1 139.6" stroke="#d0b0f0" stroke-width="0.9" opacity="0.68"/><path d="M101.4 158.8 Q102.8 152.1 102.0 148.5" stroke="#8a68d0" stroke-width="1.3" opacity="0.44"/><path d="M169.2 174.7 Q168.0 170.1 162.2 170.6" stroke="#d0b0f0" stroke-width="1.7" opacity="0.31"/><path d="M176.7 67.0 Q179.0 68.4 180.2 64.1" stroke="#a080e0" stroke-width="2.0" opacity="0.45"/><path d="M180.8 201.8 Q179.8 198.2 177.6 198.5" stroke="#c8a0d8" stroke-width="1.5" opacity="0.67"/><path d="M260.4 188.4 Q259.0 188.0 255.5 191.8" stroke="#c8a0d8" stroke-width="1.2" opacity="0.68"/><path d="M161.0 66.2 Q159.9 64.0 164.7 57.3" stroke="#a080e0" stroke-width="2.0" opacity="0.64"/><path d="M199.9 59.4 Q204.6 59.2 207.7 54.8" stroke="#9488e0" stroke-width="1.9" opacity="0.40"/><path d="M234.9 208.0 Q230.7 207.2 223.5 210.8" stroke="#7860c0" stroke-width="1.9" opacity="0.72"/><path d="M229.1 67.1 Q235.3 69.8 237.6 69.0" stroke="#7860c0" stroke-width="1.7" opacity="0.77"/><path d="M141.5 91.3 Q145.5 92.3 145.9 90.3" stroke="#d0b0f0" stroke-width="1.7" opacity="0.45"/><path d="M257.1 98.0 Q259.4 99.6 257.0 106.6" stroke="#9488e0" stroke-width="1.9" opacity="0.73"/><path d="M243.8 68.6 Q248.2 69.6 250.8 66.7" stroke="#c8a0d8" stroke-width="2.2" opacity="0.74"/><path d="M174.3 218.3 Q174.2 218.9 168.7 215.1" stroke="#e8c8f0" stroke-width="1.7" opacity="0.51"/><path d="M160.6 214.0 Q159.9 214.0 155.1 212.5" stroke="#7860c0" stroke-width="2.3" opacity="0.47"/><path d="M242.1 117.5 Q242.7 118.8 246.4 123.4" stroke="#a080e0" stroke-width="2.2" opacity="0.42"/><path d="M163.7 211.3 Q160.2 213.4 158.5 211.7" stroke="#9488e0" stroke-width="1.3" opacity="0.44"/><path d="M223.1 63.6 Q228.7 66.4 228.6 70.5" stroke="#a080e0" stroke-width="1.1" opacity="0.34"/><path d="M105.1 178.5 Q100.7 172.2 98.0 170.7" stroke="#9488e0" stroke-width="2.0" opacity="0.43"/><path d="M145.8 181.8 Q141.4 177.8 139.8 176.3" stroke="#7860c0" stroke-width="1.8" opacity="0.57"/><path d="M129.5 142.6 Q133.0 138.8 136.7 136.6" stroke="#a080e0" stroke-width="2.1" opacity="0.32"/><path d="M117.8 122.6 Q122.9 121.3 123.3 117.4" stroke="#e8c8f0" stroke-width="1.4" opacity="0.34"/><path d="M248.1 137.7 Q253.1 141.4 257.1 144.3" stroke="#a080e0" stroke-width="1.1" opacity="0.67"/><path d="M280.8 143.2 Q284.9 144.1 285.7 150.7" stroke="#9488e0" stroke-width="2.0" opacity="0.66"/><path d="M135.8 208.7 Q134.8 201.9 131.5 197.8" stroke="#8a68d0" stroke-width="1.6" opacity="0.78"/><path d="M159.2 144.1 Q159.2 136.2 155.5 133.6" stroke="#7860c0" stroke-width="1.1" opacity="0.51"/><path d="M261.3 172.9 Q263.7 178.8 260.5 179.2" stroke="#8a68d0" stroke-width="2.1" opacity="0.41"/><path d="M143.7 101.7 Q148.0 96.1 150.0 92.2" stroke="#c8a0d8" stroke-width="2.2" opacity="0.50"/><path d="M216.9 209.7 Q213.7 212.6 206.4 213.8" stroke="#c8a0d8" stroke-width="1.3" opacity="0.29"/><path d="M157.0 87.2 Q158.5 83.0 165.1 80.1" stroke="#9488e0" stroke-width="1.3" opacity="0.59"/><path d="M193.9 232.8 Q192.1 236.7 186.5 239.8" stroke="#c8a0d8" stroke-width="1.4" opacity="0.64"/><path d="M273.8 89.4 Q279.9 92.1 284.7 90.8" stroke="#b090f0" stroke-width="1.1" opacity="0.90"/><path d="M189.7 99.8 Q192.3 98.1 196.2 92.3" stroke="#c8a0d8" stroke-width="1.6" opacity="0.43"/><path d="M243.8 103.3 Q250.0 103.2 253.4 104.1" stroke="#7860c0" stroke-width="1.4" opacity="0.35"/><path d="M162.1 173.5 Q163.5 169.9 162.9 165.5" stroke="#9488e0" stroke-width="1.9" opacity="0.32"/><path d="M159.9 72.7 Q160.6 70.0 164.7 63.1" stroke="#d0b0f0" stroke-width="2.2" opacity="0.62"/><path d="M194.8 59.9 Q202.2 58.8 205.1 62.2" stroke="#9488e0" stroke-width="1.3" opacity="0.70"/><path d="M164.5 126.9 Q164.1 120.1 167.1 116.6" stroke="#b090f0" stroke-width="1.7" opacity="0.37"/><path d="M283.2 195.6 Q279.9 200.1 281.1 199.2" stroke="#d0b0f0" stroke-width="1.8" opacity="0.34"/><path d="M190.9 200.8 Q189.0 202.5 186.5 200.6" stroke="#a080e0" stroke-width="1.6" opacity="0.48"/><path d="M178.0 222.8 Q175.7 216.0 172.9 212.5" stroke="#d0b0f0" stroke-width="2.3" opacity="0.45"/><path d="M180.2 75.7 Q184.1 72.2 184.2 71.5" stroke="#c8a0d8" stroke-width="1.8" opacity="0.35"/><path d="M122.6 108.7 Q125.1 104.0 126.4 102.6" stroke="#a080e0" stroke-width="2.2" opacity="0.78"/><path d="M265.9 146.4 Q264.0 148.4 266.5 151.0" stroke="#e8c8f0" stroke-width="1.8" opacity="0.37"/><path d="M223.6 192.3 Q224.6 194.2 220.9 202.0" stroke="#d0b0f0" stroke-width="1.9" opacity="0.57"/><path d="M226.4 235.2 Q220.4 235.4 216.8 232.2" stroke="#a080e0" stroke-width="1.9" opacity="0.85"/><path d="M280.7 184.6 Q284.2 188.4 283.3 189.6" stroke="#7860c0" stroke-width="1.8" opacity="0.64"/><path d="M166.5 223.3 Q164.7 225.4 160.0 225.3" stroke="#9488e0" stroke-width="2.0" opacity="0.79"/><path d="M259.1 195.1 Q260.7 197.4 259.0 200.0" stroke="#b090f0" stroke-width="2.0" opacity="0.76"/><path d="M232.3 86.1 Q235.1 85.6 237.2 84.9" stroke="#d0b0f0" stroke-width="1.8" opacity="0.48"/><path d="M233.2 239.8 Q230.2 240.8 227.1 238.5" stroke="#9488e0" stroke-width="2.2" opacity="0.44"/><path d="M246.7 206.2 Q244.6 204.1 242.1 207.6" stroke="#b090f0" stroke-width="1.0" opacity="0.53"/><path d="M105.5 132.4 Q106.0 132.5 105.0 127.9" stroke="#e8c8f0" stroke-width="2.2" opacity="0.79"/><path d="M208.6 183.2 Q203.0 184.2 202.3 180.6" stroke="#d0b0f0" stroke-width="1.7" opacity="0.37"/><path d="M160.7 66.5 Q166.8 68.2 172.0 67.2" stroke="#e8c8f0" stroke-width="1.8" opacity="0.44"/><path d="M293.4 146.3 Q296.3 151.7 294.5 155.9" stroke="#b090f0" stroke-width="1.7" opacity="0.87"/><path d="M202.1 192.9 Q196.4 197.8 192.0 199.2" stroke="#d0b0f0" stroke-width="1.9" opacity="0.48"/><path d="M231.6 172.9 Q223.4 172.7 220.9 177.9" stroke="#d0b0f0" stroke-width="2.2" opacity="0.58"/><path d="M286.5 176.0 Q284.2 177.1 283.0 183.7" stroke="#e8c8f0" stroke-width="2.0" opacity="0.34"/><path d="M246.1 144.3 Q251.2 145.9 252.5 151.5" stroke="#c8a0d8" stroke-width="2.0" opacity="0.28"/><path d="M281.8 105.9 Q281.9 109.8 281.4 109.9" stroke="#b090f0" stroke-width="1.8" opacity="0.75"/><path d="M118.5 173.4 Q116.0 166.9 117.0 164.1" stroke="#e8c8f0" stroke-width="1.9" opacity="0.43"/><path d="M156.9 76.5 Q160.1 74.9 168.3 73.1" stroke="#b090f0" stroke-width="1.2" opacity="0.38"/><path d="M293.9 142.6 Q293.9 143.4 296.2 146.7" stroke="#e8c8f0" stroke-width="2.3" opacity="0.69"/><path d="M289.6 155.8 Q292.1 158.2 292.4 159.5" stroke="#9488e0" stroke-width="1.5" opacity="0.59"/><path d="M149.4 87.7 Q156.7 88.9 160.5 85.2" stroke="#a080e0" stroke-width="0.9" opacity="0.70"/><path d="M250.0 84.7 Q249.0 90.9 251.9 91.8" stroke="#e8c8f0" stroke-width="1.1" opacity="0.46"/><path d="M251.0 79.8 Q251.0 78.6 254.9 81.4" stroke="#e8c8f0" stroke-width="2.1" opacity="0.77"/><path d="M200.7 56.2 Q203.0 52.0 206.3 53.6" stroke="#d0b0f0" stroke-width="1.4" opacity="0.68"/><path d="M291.7 153.0 Q293.0 155.0 296.2 162.1" stroke="#8a68d0" stroke-width="2.1" opacity="0.39"/><path d="M152.9 106.6 Q158.3 102.3 158.1 102.1" stroke="#a080e0" stroke-width="1.7" opacity="0.59"/><path d="M117.4 203.5 Q118.9 195.5 114.7 192.5" stroke="#d0b0f0" stroke-width="2.0" opacity="0.47"/><path d="M177.7 62.6 Q182.7 60.3 182.3 56.7" stroke="#8a68d0" stroke-width="1.9" opacity="0.74"/><path d="M199.9 238.4 Q199.0 238.9 195.9 243.0" stroke="#7860c0" stroke-width="1.8" opacity="0.68"/><path d="M255.1 218.8 Q254.2 218.6 254.6 223.4" stroke="#b090f0" stroke-width="1.0" opacity="0.63"/><path d="M157.6 137.0 Q160.5 135.4 163.4 129.1" stroke="#e8c8f0" stroke-width="1.0" opacity="0.30"/><path d="M144.1 186.0 Q142.5 179.8 138.2 178.5" stroke="#e8c8f0" stroke-width="2.1" opacity="0.44"/><path d="M217.0 119.9 Q220.1 123.6 219.5 125.2" stroke="#7860c0" stroke-width="2.1" opacity="0.46"/><path d="M236.2 174.5 Q231.2 176.5 228.5 181.3" stroke="#a080e0" stroke-width="1.0" opacity="0.29"/><path d="M125.3 216.0 Q121.0 209.6 120.0 208.4" stroke="#a080e0" stroke-width="2.2" opacity="0.51"/><path d="M139.0 225.9 Q134.1 227.0 130.7 225.2" stroke="#c8a0d8" stroke-width="1.6" opacity="0.56"/><path d="M199.5 198.7 Q194.0 202.3 190.0 202.7" stroke="#d0b0f0" stroke-width="2.1" opacity="0.51"/><path d="M253.6 82.8 Q252.8 82.8 254.8 88.6" stroke="#b090f0" stroke-width="2.1" opacity="0.71"/><path d="M258.1 162.6 Q259.7 167.2 261.8 169.2" stroke="#b090f0" stroke-width="1.6" opacity="0.45"/><path d="M280.9 102.0 Q282.6 101.4 288.1 103.6" stroke="#e8c8f0" stroke-width="2.2" opacity="0.62"/><path d="M271.5 185.6 Q269.6 189.6 267.0 189.2" stroke="#9488e0" stroke-width="2.2" opacity="0.37"/><path d="M204.1 227.6 Q200.1 223.6 199.6 224.6" stroke="#7860c0" stroke-width="2.2" opacity="0.55"/><path d="M260.8 216.6 Q253.8 217.8 251.7 221.7" stroke="#c8a0d8" stroke-width="1.9" opacity="0.37"/><path d="M195.5 225.1 Q193.5 226.4 187.7 222.9" stroke="#e8c8f0" stroke-width="0.9" opacity="0.65"/><path d="M211.0 71.1 Q214.3 68.1 219.2 66.5" stroke="#c8a0d8" stroke-width="2.1" opacity="0.72"/><path d="M256.1 113.6 Q259.1 117.2 261.0 116.1" stroke="#b090f0" stroke-width="2.1" opacity="0.51"/><path d="M262.3 142.6 Q263.8 145.4 267.5 151.9" stroke="#b090f0" stroke-width="1.9" opacity="0.46"/><path d="M232.1 141.3 Q233.2 146.8 234.2 146.8" stroke="#e8c8f0" stroke-width="1.2" opacity="0.46"/><path d="M233.1 238.5 Q231.9 239.7 227.2 243.5" stroke="#c8a0d8" stroke-width="1.1" opacity="0.36"/><circle cx="181.3" cy="87.6" r="1.3" fill="#f0d0c0" opacity=".7" stroke="none"/><circle cx="205.3" cy="234.5" r="1.5" fill="#f0d0c0" opacity=".7" stroke="none"/><circle cx="220.7" cy="101.1" r="1.3" fill="#f0d0c0" opacity=".7" stroke="none"/><circle cx="129.9" cy="131.4" r="1.1" fill="#f0d0c0" opacity=".7" stroke="none"/><circle cx="141.4" cy="129.3" r="1.0" fill="#f0d0c0" opacity=".7" stroke="none"/><circle cx="257.8" cy="116.4" r="1.6" fill="#f0d0c0" opacity=".7" stroke="none"/><circle cx="174.6" cy="200.8" r="1.4" fill="#f0d0c0" opacity=".7" stroke="none"/><circle cx="147.8" cy="177.9" r="0.9" fill="#f0d0c0" opacity=".7" stroke="none"/><circle cx="221.0" cy="69.7" r="1.0" fill="#f0d0c0" opacity=".7" stroke="none"/><circle cx="212.0" cy="224.7" r="0.9" fill="#f0d0c0" opacity=".7" stroke="none"/><circle cx="282.3" cy="135.6" r="1.4" fill="#f0d0c0" opacity=".7" stroke="none"/><circle cx="148.9" cy="172.6" r="1.5" fill="#f0d0c0" opacity=".7" stroke="none"/><circle cx="277.6" cy="100.0" r="0.9" fill="#f0d0c0" opacity=".7" stroke="none"/><circle cx="237.7" cy="225.1" r="0.9" fill="#f0d0c0" opacity=".7" stroke="none"/><circle cx="160.8" cy="187.9" r="1.0" fill="#f0d0c0" opacity=".7" stroke="none"/><circle cx="176.7" cy="77.1" r="1.3" fill="#f0d0c0" opacity=".7" stroke="none"/><circle cx="128.0" cy="152.2" r="1.2" fill="#f0d0c0" opacity=".7" stroke="none"/><circle cx="143.1" cy="209.5" r="1.2" fill="#f0d0c0" opacity=".7" stroke="none"/><circle cx="128.8" cy="180.6" r="1.3" fill="#f0d0c0" opacity=".7" stroke="none"/><circle cx="153.3" cy="192.1" r="1.5" fill="#f0d0c0" opacity=".7" stroke="none"/><circle cx="140.1" cy="80.5" r="1.1" fill="#f0d0c0" opacity=".7" stroke="none"/><circle cx="194.6" cy="243.0" r="1.5" fill="#f0d0c0" opacity=".7" stroke="none"/><circle cx="276.7" cy="180.0" r="1.3" fill="#f0d0c0" opacity=".7" stroke="none"/><circle cx="170.7" cy="202.8" r="1.5" fill="#f0d0c0" opacity=".7" stroke="none"/><circle cx="161.0" cy="209.5" r="1.4" fill="#f0d0c0" opacity=".7" stroke="none"/></g><circle cx="199" cy="152" r="70" fill="url(#glow)"/><path d="M130 128 Q200 134 290 126" stroke="#c0e0ff" stroke-width="4" opacity=".3" fill="none" filter="url(#bl2)"/><ellipse cx="269" cy="142" rx="20" ry="32" fill="#a0b0d0" opacity=".12" filter="url(#bl3)"/><circle cx="199" cy="152" r="14" fill="#ffffff" filter="url(#bl2)"/><g stroke-width="1.2" fill="none"><line x1="8" y1="276" x2="30" y2="276" stroke="#e02020"/><path d="M9 272 l6 7 M15 272 l-6 7" stroke="#e02020"/><line x1="30" y1="276" x2="30" y2="298" stroke="#2030e0" stroke-width="1.5"/><path d="M32 292 h6 l-6 6 h6" stroke="#2040f0"/><path d="M26 272 l4 4 l4 -4 M30 276 v4" stroke="#20c020"/></g></svg><div style="position:absolute;left:439px;top:99px;width:5px;height:325px;background:linear-gradient(90deg,#e4e4e4,#d4d4d4)"></div><div style="position:absolute;left:444px;top:99px;width:800px;height:1px;background:#c8c8c8"></div><div style="position:absolute;left:444px;top:100px;width:782px;height:59px;background:#ababab"></div><div style="position:absolute;left:444px;top:159px;width:782px;height:247px;background:#0b0b0e"></div><div class="a" style="left:0;top:0;width:1280px;height:720px;clip-path:polygon(444px 100px,1226px 100px,1226px 406px,444px 406px)"><div style="position:absolute;left:444px;top:100px;width:6px;height:59px;background:#8a1ec8"></div><div style="position:absolute;left:455px;top:104px;white-space:nowrap;font-size:13px;color:#fff;letter-spacing:0.75px;text-shadow:1px 1px 0 #000;line-height:16px">SphereOut</div><div style="position:absolute;left:458px;top:127px;width:14px;height:14px;background:#9ca0aa;border:1px solid #000"><svg class="a" style="left:0;top:0" width="12" height="12"><path d="M2.5 6.5 L5 9 L10 3.5" stroke="#000" stroke-width="1.6" fill="none" transform="translate(.6,.6)" opacity=".6"/><path d="M2.5 6.5 L5 9 L10 3.5" stroke="#fff" stroke-width="1.3" fill="none"/></svg></div><div style="position:absolute;left:477px;top:126px;width:16px;height:16px;background:#a4a8b2;border:2px solid #000"><div class="a" style="left:1px;top:2px;width:2px;height:2px;background:#111"></div><div class="a" style="left:5px;top:2px;width:2px;height:2px;background:#111"></div><div class="a" style="left:9px;top:2px;width:2px;height:2px;background:#111"></div><div class="a" style="left:3px;top:5px;width:2px;height:2px;background:#111"></div><div class="a" style="left:7px;top:5px;width:2px;height:2px;background:#111"></div><div class="a" style="left:5px;top:8px;width:2px;height:2px;background:#111"></div></div><div style="position:absolute;left:497px;top:126px;width:16px;height:16px;background:#9098a4;border:1px solid #7e8690;border-top-color:#888;border-left-color:#888"><div class="a" style="left:3px;top:0px;font-size:13px;line-height:14px;color:#68c8e8;font-family:Liberation Sans,sans-serif">S</div></div><div style="position:absolute;left:544px;top:124px;white-space:nowrap;font-size:13px;color:#fff;letter-spacing:1px;text-shadow:1px 1px 0 #000;line-height:16px;width:17px;text-align:right">11</div><div style="position:absolute;left:570px;top:105px;width:50px;height:50px;background:#000"></div><div style="position:absolute;left:455px;top:164px;white-space:nowrap;font-size:13px;color:#fff;letter-spacing:0.8px;line-height:16px">Mesh Data</div><div style="position:absolute;left:445px;top:184px;width:179px;height:23px;background:#c6b854"></div><div style="position:absolute;left:455px;top:188px;white-space:nowrap;font-size:13px;color:#f0f0f0;letter-spacing:0.9px;text-shadow:1px 1px 0 #000;line-height:16px">Required</div><div style="position:absolute;left:605px;top:188px;width:16px;height:16px;background:#000;border:1px solid #000"><div class="a" style="left:0;top:0;width:14px;height:14px;border:2px solid #5a9a48;background-color:#555;background-image:radial-gradient(circle,#000 1.1px,transparent 1.3px);background-size:3px 3px;background-position:0.5px 0.5px"></div><svg class="a" style="left:0;top:0" width="14" height="14"><path d="M2.5 10 Q4.5 6.5 6.5 8.5 T11.5 4" stroke="#f0f0d0" stroke-width="1.1" fill="none"/></svg></div><div style="position:absolute;left:445px;top:208px;width:179px;height:23px;background:#cc6252"></div><div style="position:absolute;left:455px;top:212px;white-space:nowrap;font-size:13px;color:#f0f0f0;letter-spacing:0.9px;text-shadow:1px 1px 0 #000;line-height:16px">Spawn</div><div style="position:absolute;left:586px;top:213px;width:14px;height:14px;background:#9ca0aa;border:1px solid #000"><svg class="a" style="left:0;top:0" width="12" height="12"><path d="M2.5 6.5 L5 9 L10 3.5" stroke="#000" stroke-width="1.6" fill="none" transform="translate(.6,.6)" opacity=".6"/><path d="M2.5 6.5 L5 9 L10 3.5" stroke="#fff" stroke-width="1.3" fill="none"/></svg></div><div style="position:absolute;left:605px;top:212px;width:16px;height:16px;background:#000;border:1px solid #000"><div class="a" style="left:0;top:0;width:14px;height:14px;border:2px solid #5a9a48;background-color:#555;background-image:radial-gradient(circle,#000 1.1px,transparent 1.3px);background-size:3px 3px;background-position:0.5px 0.5px"></div><svg class="a" style="left:0;top:0" width="14" height="14"><path d="M2.5 10 Q4.5 6.5 6.5 8.5 T11.5 4" stroke="#f0f0d0" stroke-width="1.1" fill="none"/></svg></div><div style="position:absolute;left:445px;top:232px;width:179px;height:23px;background:#1d1d25"></div><div style="position:absolute;left:455px;top:236px;white-space:nowrap;font-size:13px;color:#f0f0f0;letter-spacing:0.9px;text-shadow:1px 1px 0 #000;line-height:16px">Lifetime</div><div style="position:absolute;left:586px;top:237px;width:14px;height:14px;background:#9ca0aa;border:1px solid #000"><svg class="a" style="left:0;top:0" width="12" height="12"><path d="M2.5 6.5 L5 9 L10 3.5" stroke="#000" stroke-width="1.6" fill="none" transform="translate(.6,.6)" opacity=".6"/><path d="M2.5 6.5 L5 9 L10 3.5" stroke="#fff" stroke-width="1.3" fill="none"/></svg></div><div style="position:absolute;left:605px;top:236px;width:16px;height:16px;background:#000;border:1px solid #000"><div class="a" style="left:0;top:0;width:14px;height:14px;border:2px solid #5a9a48;background-color:#555;background-image:radial-gradient(circle,#000 1.1px,transparent 1.3px);background-size:3px 3px;background-position:0.5px 0.5px"></div><svg class="a" style="left:0;top:0" width="14" height="14"><path d="M2.5 10 Q4.5 6.5 6.5 8.5 T11.5 4" stroke="#f0f0d0" stroke-width="1.1" fill="none"/></svg></div><div style="position:absolute;left:445px;top:256px;width:179px;height:23px;background:#1d1d25"></div><div style="position:absolute;left:455px;top:260px;white-space:nowrap;font-size:13px;color:#f0f0f0;letter-spacing:0.9px;text-shadow:1px 1px 0 #000;line-height:16px">Initial Size</div><div style="position:absolute;left:586px;top:261px;width:14px;height:14px;background:#9ca0aa;border:1px solid #000"><svg class="a" style="left:0;top:0" width="12" height="12"><path d="M2.5 6.5 L5 9 L10 3.5" stroke="#000" stroke-width="1.6" fill="none" transform="translate(.6,.6)" opacity=".6"/><path d="M2.5 6.5 L5 9 L10 3.5" stroke="#fff" stroke-width="1.3" fill="none"/></svg></div><div style="position:absolute;left:605px;top:260px;width:16px;height:16px;background:#000;border:1px solid #000"><div class="a" style="left:0;top:0;width:14px;height:14px;border:2px solid #5a9a48;background-color:#555;background-image:radial-gradient(circle,#000 1.1px,transparent 1.3px);background-size:3px 3px;background-position:0.5px 0.5px"></div><svg class="a" style="left:0;top:0" width="14" height="14"><path d="M2.5 10 Q4.5 6.5 6.5 8.5 T11.5 4" stroke="#f0f0d0" stroke-width="1.1" fill="none"/></svg></div><div style="position:absolute;left:445px;top:280px;width:179px;height:23px;background:#1d1d25"></div><div style="position:absolute;left:445px;top:280px;width:5px;height:23px;background:#e06a10"></div><div style="position:absolute;left:455px;top:284px;white-space:nowrap;font-size:13px;color:#f0f0f0;letter-spacing:0.9px;text-shadow:1px 1px 0 #000;line-height:16px">Size Scale</div><div style="position:absolute;left:586px;top:285px;width:14px;height:14px;background:#9ca0aa;border:1px solid #000"><svg class="a" style="left:0;top:0" width="12" height="12"><path d="M2.5 6.5 L5 9 L10 3.5" stroke="#000" stroke-width="1.6" fill="none" transform="translate(.6,.6)" opacity=".6"/><path d="M2.5 6.5 L5 9 L10 3.5" stroke="#fff" stroke-width="1.3" fill="none"/></svg></div><div style="position:absolute;left:605px;top:284px;width:16px;height:16px;background:#000;border:1px solid #000"><div class="a" style="left:0;top:0;width:14px;height:14px;border:2px solid #5a9a48;background-color:#555;background-image:radial-gradient(circle,#000 1.1px,transparent 1.3px);background-size:3px 3px;background-position:0.5px 0.5px"></div><svg class="a" style="left:0;top:0" width="14" height="14"><path d="M2.5 10 Q4.5 6.5 6.5 8.5 T11.5 4" stroke="#f0f0d0" stroke-width="1.1" fill="none"/></svg></div><div style="position:absolute;left:445px;top:304px;width:179px;height:23px;background:#1d1d25"></div><div style="position:absolute;left:445px;top:304px;width:5px;height:23px;background:#1a88d8"></div><div style="position:absolute;left:455px;top:308px;white-space:nowrap;font-size:13px;color:#f0f0f0;letter-spacing:0.9px;text-shadow:1px 1px 0 #000;line-height:16px">Color Over Life</div><div style="position:absolute;left:586px;top:309px;width:14px;height:14px;background:#9ca0aa;border:1px solid #000"><svg class="a" style="left:0;top:0" width="12" height="12"><path d="M2.5 6.5 L5 9 L10 3.5" stroke="#000" stroke-width="1.6" fill="none" transform="translate(.6,.6)" opacity=".6"/><path d="M2.5 6.5 L5 9 L10 3.5" stroke="#fff" stroke-width="1.3" fill="none"/></svg></div><div style="position:absolute;left:605px;top:308px;width:16px;height:16px;background:#000;border:1px solid #000"><div class="a" style="left:0;top:0;width:14px;height:14px;border:2px solid #5a9a48;background-color:#555;background-image:radial-gradient(circle,#000 1.1px,transparent 1.3px);background-size:3px 3px;background-position:0.5px 0.5px"></div><svg class="a" style="left:0;top:0" width="14" height="14"><path d="M2.5 10 Q4.5 6.5 6.5 8.5 T11.5 4" stroke="#f0f0d0" stroke-width="1.1" fill="none"/></svg></div><div style="position:absolute;left:445px;top:328px;width:179px;height:23px;background:#1d1d25"></div><div style="position:absolute;left:455px;top:332px;white-space:nowrap;font-size:13px;color:#f0f0f0;letter-spacing:0.9px;text-shadow:1px 1px 0 #000;line-height:16px">Init Mesh Rotation</div><div style="position:absolute;left:586px;top:333px;width:14px;height:14px;background:#9ca0aa;border:1px solid #000"><svg class="a" style="left:0;top:0" width="12" height="12"><path d="M2.5 6.5 L5 9 L10 3.5" stroke="#000" stroke-width="1.6" fill="none" transform="translate(.6,.6)" opacity=".6"/><path d="M2.5 6.5 L5 9 L10 3.5" stroke="#fff" stroke-width="1.3" fill="none"/></svg></div><div style="position:absolute;left:605px;top:332px;width:16px;height:16px;background:#000;border:1px solid #000"><div class="a" style="left:0;top:0;width:14px;height:14px;border:2px solid #5a9a48;background-color:#555;background-image:radial-gradient(circle,#000 1.1px,transparent 1.3px);background-size:3px 3px;background-position:0.5px 0.5px"></div><svg class="a" style="left:0;top:0" width="14" height="14"><path d="M2.5 10 Q4.5 6.5 6.5 8.5 T11.5 4" stroke="#f0f0d0" stroke-width="1.1" fill="none"/></svg></div><div style="position:absolute;left:445px;top:352px;width:179px;height:23px;background:#1d1d25"></div><div style="position:absolute;left:455px;top:356px;white-space:nowrap;font-size:13px;color:#f0f0f0;letter-spacing:0.9px;text-shadow:1px 1px 0 #000;line-height:16px">Init Mesh RotRate</div><div style="position:absolute;left:586px;top:357px;width:14px;height:14px;background:#e03a20;border:1px solid #000"><svg class="a" style="left:0;top:0" width="12" height="12"><path d="M2 2 L10 10 M10 2 L2 10" stroke="#000" stroke-width="2"/></svg></div><div style="position:absolute;left:605px;top:356px;width:16px;height:16px;background:#000;border:1px solid #000"><div class="a" style="left:0;top:0;width:14px;height:14px;border:2px solid #5a9a48;background-color:#555;background-image:radial-gradient(circle,#000 1.1px,transparent 1.3px);background-size:3px 3px;background-position:0.5px 0.5px"></div><svg class="a" style="left:0;top:0" width="14" height="14"><path d="M2.5 10 Q4.5 6.5 6.5 8.5 T11.5 4" stroke="#f0f0d0" stroke-width="1.1" fill="none"/></svg></div><div style="position:absolute;left:444px;top:159px;width:1px;height:247px;background:#050507"></div><div style="position:absolute;left:624px;top:100px;width:6px;height:59px;background:#1010f0"></div><div style="position:absolute;left:635px;top:104px;white-space:nowrap;font-size:13px;color:#fff;letter-spacing:0.75px;text-shadow:1px 1px 0 #000;line-height:16px">distort_center_Du</div><div style="position:absolute;left:638px;top:127px;width:14px;height:14px;background:#9ca0aa;border:1px solid #000"><svg class="a" style="left:0;top:0" width="12" height="12"><path d="M2.5 6.5 L5 9 L10 3.5" stroke="#000" stroke-width="1.6" fill="none" transform="translate(.6,.6)" opacity=".6"/><path d="M2.5 6.5 L5 9 L10 3.5" stroke="#fff" stroke-width="1.3" fill="none"/></svg></div><div style="position:absolute;left:657px;top:126px;width:16px;height:16px;background:#a4a8b2;border:2px solid #000"><div class="a" style="left:1px;top:2px;width:2px;height:2px;background:#111"></div><div class="a" style="left:5px;top:2px;width:2px;height:2px;background:#111"></div><div class="a" style="left:9px;top:2px;width:2px;height:2px;background:#111"></div><div class="a" style="left:3px;top:5px;width:2px;height:2px;background:#111"></div><div class="a" style="left:7px;top:5px;width:2px;height:2px;background:#111"></div><div class="a" style="left:5px;top:8px;width:2px;height:2px;background:#111"></div></div><div style="position:absolute;left:677px;top:126px;width:16px;height:16px;background:#9098a4;border:1px solid #7e8690;border-top-color:#888;border-left-color:#888"><div class="a" style="left:3px;top:0px;font-size:13px;line-height:14px;color:#68c8e8;font-family:Liberation Sans,sans-serif">S</div></div><div style="position:absolute;left:724px;top:124px;white-space:nowrap;font-size:13px;color:#fff;letter-spacing:1px;text-shadow:1px 1px 0 #000;line-height:16px;width:17px;text-align:right">15</div><div style="position:absolute;left:750px;top:105px;width:50px;height:50px;background:radial-gradient(circle at 50% 50%,#fff 0,#e0e0e0 5%,#9a9a9a 16%,#4a4a4a 32%,#1a1a1a 52%,#050505 70%,#000 100%)"></div><div style="position:absolute;left:625px;top:184px;width:179px;height:23px;background:#c6b854"></div><div style="position:absolute;left:635px;top:188px;white-space:nowrap;font-size:13px;color:#f0f0f0;letter-spacing:0.9px;text-shadow:1px 1px 0 #000;line-height:16px">Required</div><div style="position:absolute;left:785px;top:188px;width:16px;height:16px;background:#000;border:1px solid #000"><div class="a" style="left:0;top:0;width:14px;height:14px;border:2px solid #5a9a48;background-color:#555;background-image:radial-gradient(circle,#000 1.1px,transparent 1.3px);background-size:3px 3px;background-position:0.5px 0.5px"></div><svg class="a" style="left:0;top:0" width="14" height="14"><path d="M2.5 10 Q4.5 6.5 6.5 8.5 T11.5 4" stroke="#f0f0d0" stroke-width="1.1" fill="none"/></svg></div><div style="position:absolute;left:625px;top:208px;width:179px;height:23px;background:#cc6252"></div><div style="position:absolute;left:635px;top:212px;white-space:nowrap;font-size:13px;color:#f0f0f0;letter-spacing:0.9px;text-shadow:1px 1px 0 #000;line-height:16px">Spawn</div><div style="position:absolute;left:766px;top:213px;width:14px;height:14px;background:#9ca0aa;border:1px solid #000"><svg class="a" style="left:0;top:0" width="12" height="12"><path d="M2.5 6.5 L5 9 L10 3.5" stroke="#000" stroke-width="1.6" fill="none" transform="translate(.6,.6)" opacity=".6"/><path d="M2.5 6.5 L5 9 L10 3.5" stroke="#fff" stroke-width="1.3" fill="none"/></svg></div><div style="position:absolute;left:785px;top:212px;width:16px;height:16px;background:#000;border:1px solid #000"><div class="a" style="left:0;top:0;width:14px;height:14px;border:2px solid #5a9a48;background-color:#555;background-image:radial-gradient(circle,#000 1.1px,transparent 1.3px);background-size:3px 3px;background-position:0.5px 0.5px"></div><svg class="a" style="left:0;top:0" width="14" height="14"><path d="M2.5 10 Q4.5 6.5 6.5 8.5 T11.5 4" stroke="#f0f0d0" stroke-width="1.1" fill="none"/></svg></div><div style="position:absolute;left:625px;top:232px;width:179px;height:23px;background:#1d1d25"></div><div style="position:absolute;left:635px;top:236px;white-space:nowrap;font-size:13px;color:#f0f0f0;letter-spacing:0.9px;text-shadow:1px 1px 0 #000;line-height:16px">Lifetime</div><div style="position:absolute;left:766px;top:237px;width:14px;height:14px;background:#9ca0aa;border:1px solid #000"><svg class="a" style="left:0;top:0" width="12" height="12"><path d="M2.5 6.5 L5 9 L10 3.5" stroke="#000" stroke-width="1.6" fill="none" transform="translate(.6,.6)" opacity=".6"/><path d="M2.5 6.5 L5 9 L10 3.5" stroke="#fff" stroke-width="1.3" fill="none"/></svg></div><div style="position:absolute;left:785px;top:236px;width:16px;height:16px;background:#000;border:1px solid #000"><div class="a" style="left:0;top:0;width:14px;height:14px;border:2px solid #5a9a48;background-color:#555;background-image:radial-gradient(circle,#000 1.1px,transparent 1.3px);background-size:3px 3px;background-position:0.5px 0.5px"></div><svg class="a" style="left:0;top:0" width="14" height="14"><path d="M2.5 10 Q4.5 6.5 6.5 8.5 T11.5 4" stroke="#f0f0d0" stroke-width="1.1" fill="none"/></svg></div><div style="position:absolute;left:625px;top:256px;width:179px;height:23px;background:#1d1d25"></div><div style="position:absolute;left:635px;top:260px;white-space:nowrap;font-size:13px;color:#f0f0f0;letter-spacing:0.9px;text-shadow:1px 1px 0 #000;line-height:16px">Initial Size</div><div style="position:absolute;left:766px;top:261px;width:14px;height:14px;background:#9ca0aa;border:1px solid #000"><svg class="a" style="left:0;top:0" width="12" height="12"><path d="M2.5 6.5 L5 9 L10 3.5" stroke="#000" stroke-width="1.6" fill="none" transform="translate(.6,.6)" opacity=".6"/><path d="M2.5 6.5 L5 9 L10 3.5" stroke="#fff" stroke-width="1.3" fill="none"/></svg></div><div style="position:absolute;left:785px;top:260px;width:16px;height:16px;background:#000;border:1px solid #000"><div class="a" style="left:0;top:0;width:14px;height:14px;border:2px solid #5a9a48;background-color:#555;background-image:radial-gradient(circle,#000 1.1px,transparent 1.3px);background-size:3px 3px;background-position:0.5px 0.5px"></div><svg class="a" style="left:0;top:0" width="14" height="14"><path d="M2.5 10 Q4.5 6.5 6.5 8.5 T11.5 4" stroke="#f0f0d0" stroke-width="1.1" fill="none"/></svg></div><div style="position:absolute;left:625px;top:280px;width:179px;height:23px;background:#1d1d25"></div><div style="position:absolute;left:625px;top:280px;width:5px;height:23px;background:#e0187a"></div><div style="position:absolute;left:635px;top:284px;white-space:nowrap;font-size:13px;color:#f0f0f0;letter-spacing:0.9px;text-shadow:1px 1px 0 #000;line-height:16px">Color Over Life</div><div style="position:absolute;left:766px;top:285px;width:14px;height:14px;background:#9ca0aa;border:1px solid #000"><svg class="a" style="left:0;top:0" width="12" height="12"><path d="M2.5 6.5 L5 9 L10 3.5" stroke="#000" stroke-width="1.6" fill="none" transform="translate(.6,.6)" opacity=".6"/><path d="M2.5 6.5 L5 9 L10 3.5" stroke="#fff" stroke-width="1.3" fill="none"/></svg></div><div style="position:absolute;left:785px;top:284px;width:16px;height:16px;background:#000;border:1px solid #000"><div class="a" style="left:0;top:0;width:14px;height:14px;border:2px solid #5a9a48;background-color:#555;background-image:radial-gradient(circle,#000 1.1px,transparent 1.3px);background-size:3px 3px;background-position:0.5px 0.5px"></div><svg class="a" style="left:0;top:0" width="14" height="14"><path d="M2.5 10 Q4.5 6.5 6.5 8.5 T11.5 4" stroke="#f0f0d0" stroke-width="1.1" fill="none"/></svg></div><div style="position:absolute;left:625px;top:304px;width:179px;height:23px;background:#1d1d25"></div><div style="position:absolute;left:625px;top:304px;width:5px;height:23px;background:#a0a010"></div><div style="position:absolute;left:635px;top:308px;white-space:nowrap;font-size:13px;color:#f0f0f0;letter-spacing:0.9px;text-shadow:1px 1px 0 #000;line-height:16px">Size By Life</div><div style="position:absolute;left:766px;top:309px;width:14px;height:14px;background:#9ca0aa;border:1px solid #000"><svg class="a" style="left:0;top:0" width="12" height="12"><path d="M2.5 6.5 L5 9 L10 3.5" stroke="#000" stroke-width="1.6" fill="none" transform="translate(.6,.6)" opacity=".6"/><path d="M2.5 6.5 L5 9 L10 3.5" stroke="#fff" stroke-width="1.3" fill="none"/></svg></div><div style="position:absolute;left:785px;top:308px;width:16px;height:16px;background:#000;border:1px solid #000"><div class="a" style="left:0;top:0;width:14px;height:14px;border:2px solid #5a9a48;background-color:#555;background-image:radial-gradient(circle,#000 1.1px,transparent 1.3px);background-size:3px 3px;background-position:0.5px 0.5px"></div><svg class="a" style="left:0;top:0" width="14" height="14"><path d="M2.5 10 Q4.5 6.5 6.5 8.5 T11.5 4" stroke="#f0f0d0" stroke-width="1.1" fill="none"/></svg></div><div style="position:absolute;left:625px;top:328px;width:179px;height:23px;background:#1d1d25"></div><div style="position:absolute;left:635px;top:332px;white-space:nowrap;font-size:13px;color:#f0f0f0;letter-spacing:0.9px;text-shadow:1px 1px 0 #000;line-height:16px">Initial Rotation</div><div style="position:absolute;left:766px;top:333px;width:14px;height:14px;background:#9ca0aa;border:1px solid #000"><svg class="a" style="left:0;top:0" width="12" height="12"><path d="M2.5 6.5 L5 9 L10 3.5" stroke="#000" stroke-width="1.6" fill="none" transform="translate(.6,.6)" opacity=".6"/><path d="M2.5 6.5 L5 9 L10 3.5" stroke="#fff" stroke-width="1.3" fill="none"/></svg></div><div style="position:absolute;left:785px;top:332px;width:16px;height:16px;background:#000;border:1px solid #000"><div class="a" style="left:0;top:0;width:14px;height:14px;border:2px solid #5a9a48;background-color:#555;background-image:radial-gradient(circle,#000 1.1px,transparent 1.3px);background-size:3px 3px;background-position:0.5px 0.5px"></div><svg class="a" style="left:0;top:0" width="14" height="14"><path d="M2.5 10 Q4.5 6.5 6.5 8.5 T11.5 4" stroke="#f0f0d0" stroke-width="1.1" fill="none"/></svg></div><div style="position:absolute;left:624px;top:159px;width:1px;height:247px;background:#050507"></div><div style="position:absolute;left:804px;top:100px;width:6px;height:59px;background:#e05010"></div><div style="position:absolute;left:815px;top:104px;white-space:nowrap;font-size:13px;color:#fff;letter-spacing:0.75px;text-shadow:1px 1px 0 #000;line-height:16px">Particle Emitter</div><div style="position:absolute;left:818px;top:127px;width:14px;height:14px;background:#9ca0aa;border:1px solid #000"><svg class="a" style="left:0;top:0" width="12" height="12"><path d="M2.5 6.5 L5 9 L10 3.5" stroke="#000" stroke-width="1.6" fill="none" transform="translate(.6,.6)" opacity=".6"/><path d="M2.5 6.5 L5 9 L10 3.5" stroke="#fff" stroke-width="1.3" fill="none"/></svg></div><div style="position:absolute;left:837px;top:126px;width:16px;height:16px;background:#a4a8b2;border:2px solid #000"><div class="a" style="left:1px;top:2px;width:2px;height:2px;background:#111"></div><div class="a" style="left:5px;top:2px;width:2px;height:2px;background:#111"></div><div class="a" style="left:9px;top:2px;width:2px;height:2px;background:#111"></div><div class="a" style="left:3px;top:5px;width:2px;height:2px;background:#111"></div><div class="a" style="left:7px;top:5px;width:2px;height:2px;background:#111"></div><div class="a" style="left:5px;top:8px;width:2px;height:2px;background:#111"></div></div><div style="position:absolute;left:857px;top:126px;width:16px;height:16px;background:#9098a4;border:1px solid #7e8690;border-top-color:#888;border-left-color:#888"><div class="a" style="left:3px;top:0px;font-size:13px;line-height:14px;color:#68c8e8;font-family:Liberation Sans,sans-serif">S</div></div><div style="position:absolute;left:904px;top:124px;white-space:nowrap;font-size:13px;color:#fff;letter-spacing:1px;text-shadow:1px 1px 0 #000;line-height:16px;width:17px;text-align:right">24</div><div style="position:absolute;left:930px;top:105px;width:50px;height:50px;background:#000"></div><div style="position:absolute;left:815px;top:164px;white-space:nowrap;font-size:13px;color:#fff;letter-spacing:0.8px;line-height:16px">Mesh Data</div><div style="position:absolute;left:805px;top:184px;width:179px;height:23px;background:#c6b854"></div><div style="position:absolute;left:805px;top:184px;width:5px;height:23px;background:#60b010"></div><div style="position:absolute;left:815px;top:188px;white-space:nowrap;font-size:13px;color:#f0f0f0;letter-spacing:0.9px;text-shadow:1px 1px 0 #000;line-height:16px">Required</div><div style="position:absolute;left:965px;top:188px;width:16px;height:16px;background:#000;border:1px solid #000"><div class="a" style="left:0;top:0;width:14px;height:14px;border:2px solid #5a9a48;background-color:#555;background-image:radial-gradient(circle,#000 1.1px,transparent 1.3px);background-size:3px 3px;background-position:0.5px 0.5px"></div><svg class="a" style="left:0;top:0" width="14" height="14"><path d="M2.5 10 Q4.5 6.5 6.5 8.5 T11.5 4" stroke="#f0f0d0" stroke-width="1.1" fill="none"/></svg></div><div style="position:absolute;left:805px;top:208px;width:179px;height:23px;background:#cc6252"></div><div style="position:absolute;left:815px;top:212px;white-space:nowrap;font-size:13px;color:#f0f0f0;letter-spacing:0.9px;text-shadow:1px 1px 0 #000;line-height:16px">Spawn</div><div style="position:absolute;left:946px;top:213px;width:14px;height:14px;background:#9ca0aa;border:1px solid #000"><svg class="a" style="left:0;top:0" width="12" height="12"><path d="M2.5 6.5 L5 9 L10 3.5" stroke="#000" stroke-width="1.6" fill="none" transform="translate(.6,.6)" opacity=".6"/><path d="M2.5 6.5 L5 9 L10 3.5" stroke="#fff" stroke-width="1.3" fill="none"/></svg></div><div style="position:absolute;left:965px;top:212px;width:16px;height:16px;background:#000;border:1px solid #000"><div class="a" style="left:0;top:0;width:14px;height:14px;border:2px solid #5a9a48;background-color:#555;background-image:radial-gradient(circle,#000 1.1px,transparent 1.3px);background-size:3px 3px;background-position:0.5px 0.5px"></div><svg class="a" style="left:0;top:0" width="14" height="14"><path d="M2.5 10 Q4.5 6.5 6.5 8.5 T11.5 4" stroke="#f0f0d0" stroke-width="1.1" fill="none"/></svg></div><div style="position:absolute;left:805px;top:232px;width:179px;height:23px;background:#1d1d25"></div><div style="position:absolute;left:815px;top:236px;white-space:nowrap;font-size:13px;color:#f0f0f0;letter-spacing:0.9px;text-shadow:1px 1px 0 #000;line-height:16px">Lifetime</div><div style="position:absolute;left:946px;top:237px;width:14px;height:14px;background:#9ca0aa;border:1px solid #000"><svg class="a" style="left:0;top:0" width="12" height="12"><path d="M2.5 6.5 L5 9 L10 3.5" stroke="#000" stroke-width="1.6" fill="none" transform="translate(.6,.6)" opacity=".6"/><path d="M2.5 6.5 L5 9 L10 3.5" stroke="#fff" stroke-width="1.3" fill="none"/></svg></div><div style="position:absolute;left:965px;top:236px;width:16px;height:16px;background:#000;border:1px solid #000"><div class="a" style="left:0;top:0;width:14px;height:14px;border:2px solid #5a9a48;background-color:#555;background-image:radial-gradient(circle,#000 1.1px,transparent 1.3px);background-size:3px 3px;background-position:0.5px 0.5px"></div><svg class="a" style="left:0;top:0" width="14" height="14"><path d="M2.5 10 Q4.5 6.5 6.5 8.5 T11.5 4" stroke="#f0f0d0" stroke-width="1.1" fill="none"/></svg></div><div style="position:absolute;left:805px;top:256px;width:179px;height:23px;background:#1d1d25"></div><div style="position:absolute;left:815px;top:260px;white-space:nowrap;font-size:13px;color:#f0f0f0;letter-spacing:0.9px;text-shadow:1px 1px 0 #000;line-height:16px">Initial Size</div><div style="position:absolute;left:946px;top:261px;width:14px;height:14px;background:#9ca0aa;border:1px solid #000"><svg class="a" style="left:0;top:0" width="12" height="12"><path d="M2.5 6.5 L5 9 L10 3.5" stroke="#000" stroke-width="1.6" fill="none" transform="translate(.6,.6)" opacity=".6"/><path d="M2.5 6.5 L5 9 L10 3.5" stroke="#fff" stroke-width="1.3" fill="none"/></svg></div><div style="position:absolute;left:965px;top:260px;width:16px;height:16px;background:#000;border:1px solid #000"><div class="a" style="left:0;top:0;width:14px;height:14px;border:2px solid #5a9a48;background-color:#555;background-image:radial-gradient(circle,#000 1.1px,transparent 1.3px);background-size:3px 3px;background-position:0.5px 0.5px"></div><svg class="a" style="left:0;top:0" width="14" height="14"><path d="M2.5 10 Q4.5 6.5 6.5 8.5 T11.5 4" stroke="#f0f0d0" stroke-width="1.1" fill="none"/></svg></div><div style="position:absolute;left:805px;top:280px;width:179px;height:23px;background:#1d1d25"></div><div style="position:absolute;left:815px;top:284px;white-space:nowrap;font-size:13px;color:#f0f0f0;letter-spacing:0.9px;text-shadow:1px 1px 0 #000;line-height:16px">Initial Velocity</div><div style="position:absolute;left:946px;top:285px;width:14px;height:14px;background:#9ca0aa;border:1px solid #000"><svg class="a" style="left:0;top:0" width="12" height="12"><path d="M2.5 6.5 L5 9 L10 3.5" stroke="#000" stroke-width="1.6" fill="none" transform="translate(.6,.6)" opacity=".6"/><path d="M2.5 6.5 L5 9 L10 3.5" stroke="#fff" stroke-width="1.3" fill="none"/></svg></div><div style="position:absolute;left:965px;top:284px;width:16px;height:16px;background:#000;border:1px solid #000"><div class="a" style="left:0;top:0;width:14px;height:14px;border:2px solid #5a9a48;background-color:#555;background-image:radial-gradient(circle,#000 1.1px,transparent 1.3px);background-size:3px 3px;background-position:0.5px 0.5px"></div><svg class="a" style="left:0;top:0" width="14" height="14"><path d="M2.5 10 Q4.5 6.5 6.5 8.5 T11.5 4" stroke="#f0f0d0" stroke-width="1.1" fill="none"/></svg></div><div style="position:absolute;left:805px;top:304px;width:179px;height:23px;background:#1d1d25"></div><div style="position:absolute;left:815px;top:308px;white-space:nowrap;font-size:13px;color:#f0f0f0;letter-spacing:0.9px;text-shadow:1px 1px 0 #000;line-height:16px">Color Over Life</div><div style="position:absolute;left:946px;top:309px;width:14px;height:14px;background:#9ca0aa;border:1px solid #000"><svg class="a" style="left:0;top:0" width="12" height="12"><path d="M2.5 6.5 L5 9 L10 3.5" stroke="#000" stroke-width="1.6" fill="none" transform="translate(.6,.6)" opacity=".6"/><path d="M2.5 6.5 L5 9 L10 3.5" stroke="#fff" stroke-width="1.3" fill="none"/></svg></div><div style="position:absolute;left:965px;top:308px;width:16px;height:16px;background:#000;border:1px solid #000"><div class="a" style="left:0;top:0;width:14px;height:14px;border:2px solid #5a9a48;background-color:#555;background-image:radial-gradient(circle,#000 1.1px,transparent 1.3px);background-size:3px 3px;background-position:0.5px 0.5px"></div><svg class="a" style="left:0;top:0" width="14" height="14"><path d="M2.5 10 Q4.5 6.5 6.5 8.5 T11.5 4" stroke="#f0f0d0" stroke-width="1.1" fill="none"/></svg></div><div style="position:absolute;left:805px;top:328px;width:179px;height:23px;background:#1d1d25"></div><div style="position:absolute;left:815px;top:332px;white-space:nowrap;font-size:13px;color:#f0f0f0;letter-spacing:0.9px;text-shadow:1px 1px 0 #000;line-height:16px">Init Mesh Rotation</div><div style="position:absolute;left:946px;top:333px;width:14px;height:14px;background:#9ca0aa;border:1px solid #000"><svg class="a" style="left:0;top:0" width="12" height="12"><path d="M2.5 6.5 L5 9 L10 3.5" stroke="#000" stroke-width="1.6" fill="none" transform="translate(.6,.6)" opacity=".6"/><path d="M2.5 6.5 L5 9 L10 3.5" stroke="#fff" stroke-width="1.3" fill="none"/></svg></div><div style="position:absolute;left:965px;top:332px;width:16px;height:16px;background:#000;border:1px solid #000"><div class="a" style="left:0;top:0;width:14px;height:14px;border:2px solid #5a9a48;background-color:#555;background-image:radial-gradient(circle,#000 1.1px,transparent 1.3px);background-size:3px 3px;background-position:0.5px 0.5px"></div><svg class="a" style="left:0;top:0" width="14" height="14"><path d="M2.5 10 Q4.5 6.5 6.5 8.5 T11.5 4" stroke="#f0f0d0" stroke-width="1.1" fill="none"/></svg></div><div style="position:absolute;left:805px;top:352px;width:179px;height:23px;background:#1d1d25"></div><div style="position:absolute;left:815px;top:356px;white-space:nowrap;font-size:13px;color:#f0f0f0;letter-spacing:0.9px;text-shadow:1px 1px 0 #000;line-height:16px">Init Mesh RotRate</div><div style="position:absolute;left:946px;top:357px;width:14px;height:14px;background:#9ca0aa;border:1px solid #000"><svg class="a" style="left:0;top:0" width="12" height="12"><path d="M2.5 6.5 L5 9 L10 3.5" stroke="#000" stroke-width="1.6" fill="none" transform="translate(.6,.6)" opacity=".6"/><path d="M2.5 6.5 L5 9 L10 3.5" stroke="#fff" stroke-width="1.3" fill="none"/></svg></div><div style="position:absolute;left:965px;top:356px;width:16px;height:16px;background:#000;border:1px solid #000"><div class="a" style="left:0;top:0;width:14px;height:14px;border:2px solid #5a9a48;background-color:#555;background-image:radial-gradient(circle,#000 1.1px,transparent 1.3px);background-size:3px 3px;background-position:0.5px 0.5px"></div><svg class="a" style="left:0;top:0" width="14" height="14"><path d="M2.5 10 Q4.5 6.5 6.5 8.5 T11.5 4" stroke="#f0f0d0" stroke-width="1.1" fill="none"/></svg></div><div style="position:absolute;left:805px;top:376px;width:179px;height:23px;background:#1d1d25"></div><div style="position:absolute;left:815px;top:380px;white-space:nowrap;font-size:13px;color:#f0f0f0;letter-spacing:0.9px;text-shadow:1px 1px 0 #000;line-height:16px">Size By Life</div><div style="position:absolute;left:946px;top:381px;width:14px;height:14px;background:#9ca0aa;border:1px solid #000"><svg class="a" style="left:0;top:0" width="12" height="12"><path d="M2.5 6.5 L5 9 L10 3.5" stroke="#000" stroke-width="1.6" fill="none" transform="translate(.6,.6)" opacity=".6"/><path d="M2.5 6.5 L5 9 L10 3.5" stroke="#fff" stroke-width="1.3" fill="none"/></svg></div><div style="position:absolute;left:965px;top:380px;width:16px;height:16px;background:#000;border:1px solid #000"><div class="a" style="left:0;top:0;width:14px;height:14px;border:2px solid #5a9a48;background-color:#555;background-image:radial-gradient(circle,#000 1.1px,transparent 1.3px);background-size:3px 3px;background-position:0.5px 0.5px"></div><svg class="a" style="left:0;top:0" width="14" height="14"><path d="M2.5 10 Q4.5 6.5 6.5 8.5 T11.5 4" stroke="#f0f0d0" stroke-width="1.1" fill="none"/></svg></div><div style="position:absolute;left:805px;top:400px;width:179px;height:23px;background:#1d1d25"></div><div style="position:absolute;left:946px;top:405px;width:14px;height:14px;background:#9ca0aa;border:1px solid #000"><svg class="a" style="left:0;top:0" width="12" height="12"><path d="M2.5 6.5 L5 9 L10 3.5" stroke="#000" stroke-width="1.6" fill="none" transform="translate(.6,.6)" opacity=".6"/><path d="M2.5 6.5 L5 9 L10 3.5" stroke="#fff" stroke-width="1.3" fill="none"/></svg></div><div style="position:absolute;left:965px;top:404px;width:16px;height:16px;background:#000;border:1px solid #000"><div class="a" style="left:0;top:0;width:14px;height:14px;border:2px solid #5a9a48;background-color:#555;background-image:radial-gradient(circle,#000 1.1px,transparent 1.3px);background-size:3px 3px;background-position:0.5px 0.5px"></div><svg class="a" style="left:0;top:0" width="14" height="14"><path d="M2.5 10 Q4.5 6.5 6.5 8.5 T11.5 4" stroke="#f0f0d0" stroke-width="1.1" fill="none"/></svg></div><div style="position:absolute;left:804px;top:159px;width:1px;height:247px;background:#050507"></div><div style="position:absolute;left:984px;top:100px;width:6px;height:59px;background:#e05010"></div><svg class="a" style="left:990px;top:100px" width="174" height="59"><rect width="174" height="59" fill="#b0b0b0"/><path d="M12 0h2v2h-2zM20 0h6v2h-6zM30 0h2v2h-2zM40 0h4v2h-4zM46 0h8v2h-8zM82 0h6v2h-6zM100 0h4v2h-4zM112 0h2v2h-2zM120 0h4v2h-4zM128 0h8v2h-8zM138 0h2v2h-2zM144 0h2v2h-2zM148 0h2v2h-2zM152 0h8v2h-8zM168 0h4v2h-4zM2 2h2v2h-2zM6 2h4v2h-4zM12 2h8v2h-8zM22 2h2v2h-2zM38 2h4v2h-4zM46 2h4v2h-4zM54 2h2v2h-2zM64 2h4v2h-4zM70 2h2v2h-2zM82 2h2v2h-2zM86 2h4v2h-4zM100 2h14v2h-14zM116 2h4v2h-4zM130 2h6v2h-6zM142 2h2v2h-2zM154 2h4v2h-4zM170 2h2v2h-2zM20 4h2v2h-2zM40 4h2v2h-2zM44 4h2v2h-2zM50 4h2v2h-2zM60 4h6v2h-6zM68 4h4v2h-4zM84 4h4v2h-4zM100 4h4v2h-4zM112 4h12v2h-12zM136 4h4v2h-4zM142 4h2v2h-2zM152 4h8v2h-8zM162 4h6v2h-6zM8 6h2v2h-2zM12 6h4v2h-4zM20 6h6v2h-6zM40 6h2v2h-2zM46 6h4v2h-4zM68 6h2v2h-2zM78 6h2v2h-2zM98 6h6v2h-6zM108 6h2v2h-2zM112 6h2v2h-2zM116 6h4v2h-4zM122 6h4v2h-4zM140 6h4v2h-4zM158 6h4v2h-4zM166 6h2v2h-2zM2 8h2v2h-2zM10 8h2v2h-2zM26 8h2v2h-2zM40 8h4v2h-4zM52 8h2v2h-2zM58 8h2v2h-2zM62 8h6v2h-6zM76 8h2v2h-2zM80 8h2v2h-2zM84 8h4v2h-4zM98 8h4v2h-4zM114 8h2v2h-2zM122 8h4v2h-4zM128 8h2v2h-2zM134 8h4v2h-4zM140 8h4v2h-4zM150 8h4v2h-4zM156 8h4v2h-4zM166 8h2v2h-2zM2 10h10v2h-10zM16 10h6v2h-6zM28 10h4v2h-4zM48 10h2v2h-2zM54 10h4v2h-4zM62 10h8v2h-8zM116 10h4v2h-4zM122 10h4v2h-4zM130 10h2v2h-2zM136 10h2v2h-2zM156 10h2v2h-2zM166 10h8v2h-8zM0 12h2v2h-2zM18 12h2v2h-2zM24 12h2v2h-2zM28 12h6v2h-6zM38 12h2v2h-2zM56 12h2v2h-2zM62 12h8v2h-8zM78 12h2v2h-2zM84 12h2v2h-2zM94 12h2v2h-2zM110 12h2v2h-2zM116 12h4v2h-4zM122 12h4v2h-4zM130 12h2v2h-2zM146 12h4v2h-4zM170 12h4v2h-4zM6 14h8v2h-8zM16 14h8v2h-8zM34 14h4v2h-4zM42 14h4v2h-4zM52 14h6v2h-6zM66 14h4v2h-4zM78 14h2v2h-2zM82 14h4v2h-4zM96 14h4v2h-4zM102 14h4v2h-4zM110 14h6v2h-6zM120 14h2v2h-2zM146 14h14v2h-14zM170 14h2v2h-2zM4 16h6v2h-6zM18 16h4v2h-4zM24 16h4v2h-4zM32 16h2v2h-2zM36 16h2v2h-2zM42 16h4v2h-4zM54 16h2v2h-2zM98 16h2v2h-2zM106 16h8v2h-8zM116 16h6v2h-6zM126 16h4v2h-4zM136 16h10v2h-10zM150 16h8v2h-8zM8 18h4v2h-4zM28 18h8v2h-8zM42 18h8v2h-8zM62 18h2v2h-2zM66 18h2v2h-2zM74 18h4v2h-4zM80 18h2v2h-2zM100 18h2v2h-2zM104 18h8v2h-8zM116 18h6v2h-6zM130 18h4v2h-4zM142 18h4v2h-4zM148 18h2v2h-2zM154 18h2v2h-2zM160 18h2v2h-2zM6 20h2v2h-2zM10 20h2v2h-2zM22 20h6v2h-6zM32 20h4v2h-4zM40 20h12v2h-12zM66 20h8v2h-8zM84 20h6v2h-6zM92 20h4v2h-4zM104 20h2v2h-2zM116 20h2v2h-2zM128 20h2v2h-2zM134 20h6v2h-6zM144 20h2v2h-2zM152 20h2v2h-2zM156 20h2v2h-2zM2 22h2v2h-2zM6 22h2v2h-2zM10 22h2v2h-2zM16 22h2v2h-2zM20 22h6v2h-6zM32 22h2v2h-2zM44 22h10v2h-10zM56 22h2v2h-2zM68 22h2v2h-2zM72 22h2v2h-2zM116 22h2v2h-2zM128 22h2v2h-2zM132 22h12v2h-12zM148 22h10v2h-10zM170 22h2v2h-2zM4 24h2v2h-2zM8 24h4v2h-4zM14 24h10v2h-10zM34 24h4v2h-4zM50 24h4v2h-4zM58 24h2v2h-2zM66 24h2v2h-2zM72 24h2v2h-2zM76 24h2v2h-2zM80 24h4v2h-4zM94 24h2v2h-2zM102 24h6v2h-6zM110 24h6v2h-6zM128 24h4v2h-4zM136 24h2v2h-2zM140 24h2v2h-2zM150 24h2v2h-2zM154 24h4v2h-4zM160 24h4v2h-4zM166 24h8v2h-8zM4 26h2v2h-2zM16 26h2v2h-2zM40 26h2v2h-2zM44 26h2v2h-2zM48 26h4v2h-4zM58 26h2v2h-2zM62 26h2v2h-2zM68 26h2v2h-2zM78 26h6v2h-6zM94 26h2v2h-2zM104 26h10v2h-10zM122 26h2v2h-2zM126 26h6v2h-6zM138 26h8v2h-8zM148 26h4v2h-4zM156 26h4v2h-4zM162 26h4v2h-4zM168 26h6v2h-6zM2 28h4v2h-4zM12 28h8v2h-8zM32 28h4v2h-4zM38 28h4v2h-4zM60 28h6v2h-6zM68 28h6v2h-6zM86 28h6v2h-6zM98 28h8v2h-8zM110 28h6v2h-6zM126 28h8v2h-8zM142 28h10v2h-10zM154 28h6v2h-6zM162 28h2v2h-2zM172 28h2v2h-2zM0 30h4v2h-4zM12 30h12v2h-12zM32 30h2v2h-2zM38 30h2v2h-2zM48 30h2v2h-2zM52 30h24v2h-24zM78 30h10v2h-10zM96 30h12v2h-12zM114 30h8v2h-8zM126 30h2v2h-2zM130 30h4v2h-4zM154 30h2v2h-2zM164 30h4v2h-4zM2 32h6v2h-6zM10 32h12v2h-12zM52 32h2v2h-2zM62 32h2v2h-2zM68 32h8v2h-8zM78 32h8v2h-8zM88 32h4v2h-4zM96 32h2v2h-2zM102 32h6v2h-6zM114 32h2v2h-2zM118 32h4v2h-4zM140 32h4v2h-4zM146 32h6v2h-6zM158 32h2v2h-2zM172 32h2v2h-2zM2 34h6v2h-6zM12 34h14v2h-14zM48 34h6v2h-6zM56 34h2v2h-2zM60 34h6v2h-6zM68 34h2v2h-2zM72 34h4v2h-4zM80 34h6v2h-6zM88 34h6v2h-6zM98 34h2v2h-2zM110 34h2v2h-2zM118 34h2v2h-2zM132 34h12v2h-12zM146 34h8v2h-8zM156 34h4v2h-4zM2 36h2v2h-2zM10 36h2v2h-2zM14 36h2v2h-2zM18 36h6v2h-6zM40 36h4v2h-4zM46 36h2v2h-2zM54 36h12v2h-12zM76 36h2v2h-2zM80 36h2v2h-2zM84 36h2v2h-2zM92 36h4v2h-4zM98 36h4v2h-4zM108 36h4v2h-4zM114 36h2v2h-2zM122 36h2v2h-2zM136 36h2v2h-2zM150 36h2v2h-2zM158 36h2v2h-2zM170 36h2v2h-2zM14 38h2v2h-2zM20 38h2v2h-2zM36 38h2v2h-2zM42 38h2v2h-2zM52 38h4v2h-4zM58 38h2v2h-2zM66 38h2v2h-2zM80 38h10v2h-10zM94 38h6v2h-6zM106 38h2v2h-2zM110 38h2v2h-2zM118 38h2v2h-2zM124 38h6v2h-6zM138 38h4v2h-4zM146 38h4v2h-4zM156 38h2v2h-2zM170 38h2v2h-2zM16 40h2v2h-2zM20 40h2v2h-2zM42 40h8v2h-8zM52 40h2v2h-2zM58 40h6v2h-6zM66 40h6v2h-6zM80 40h2v2h-2zM84 40h6v2h-6zM94 40h2v2h-2zM100 40h2v2h-2zM110 40h2v2h-2zM132 40h2v2h-2zM140 40h2v2h-2zM144 40h8v2h-8zM154 40h4v2h-4zM164 40h2v2h-2zM172 40h2v2h-2zM2 42h2v2h-2zM10 42h4v2h-4zM18 42h2v2h-2zM26 42h2v2h-2zM30 42h4v2h-4zM40 42h10v2h-10zM56 42h2v2h-2zM60 42h2v2h-2zM76 42h4v2h-4zM86 42h10v2h-10zM102 42h10v2h-10zM132 42h2v2h-2zM150 42h2v2h-2zM154 42h4v2h-4zM162 42h8v2h-8zM172 42h2v2h-2zM4 44h4v2h-4zM10 44h2v2h-2zM36 44h8v2h-8zM56 44h2v2h-2zM72 44h2v2h-2zM76 44h2v2h-2zM86 44h2v2h-2zM94 44h2v2h-2zM106 44h2v2h-2zM120 44h4v2h-4zM126 44h4v2h-4zM136 44h6v2h-6zM148 44h4v2h-4zM156 44h2v2h-2zM162 44h6v2h-6zM6 46h2v2h-2zM10 46h2v2h-2zM14 46h8v2h-8zM40 46h2v2h-2zM44 46h4v2h-4zM54 46h2v2h-2zM76 46h2v2h-2zM80 46h4v2h-4zM86 46h2v2h-2zM94 46h4v2h-4zM104 46h2v2h-2zM108 46h4v2h-4zM116 46h2v2h-2zM140 46h6v2h-6zM148 46h18v2h-18zM168 46h2v2h-2zM14 48h4v2h-4zM24 48h6v2h-6zM40 48h2v2h-2zM44 48h2v2h-2zM50 48h2v2h-2zM54 48h2v2h-2zM58 48h2v2h-2zM66 48h2v2h-2zM70 48h4v2h-4zM86 48h2v2h-2zM90 48h2v2h-2zM98 48h2v2h-2zM106 48h4v2h-4zM116 48h6v2h-6zM136 48h2v2h-2zM150 48h4v2h-4zM156 48h4v2h-4zM164 48h4v2h-4zM6 50h4v2h-4zM22 50h2v2h-2zM26 50h2v2h-2zM38 50h2v2h-2zM42 50h6v2h-6zM54 50h2v2h-2zM58 50h2v2h-2zM62 50h2v2h-2zM66 50h8v2h-8zM82 50h2v2h-2zM86 50h6v2h-6zM104 50h2v2h-2zM116 50h2v2h-2zM126 50h2v2h-2zM132 50h2v2h-2zM136 50h4v2h-4zM150 50h2v2h-2zM156 50h4v2h-4zM172 50h2v2h-2zM4 52h14v2h-14zM30 52h8v2h-8zM44 52h4v2h-4zM64 52h2v2h-2zM70 52h2v2h-2zM76 52h6v2h-6zM84 52h6v2h-6zM98 52h10v2h-10zM116 52h4v2h-4zM134 52h2v2h-2zM142 52h2v2h-2zM150 52h2v2h-2zM154 52h2v2h-2zM158 52h2v2h-2zM164 52h2v2h-2zM6 54h6v2h-6zM18 54h2v2h-2zM32 54h2v2h-2zM36 54h2v2h-2zM42 54h2v2h-2zM64 54h6v2h-6zM88 54h2v2h-2zM94 54h2v2h-2zM98 54h6v2h-6zM114 54h2v2h-2zM118 54h2v2h-2zM126 54h2v2h-2zM136 54h2v2h-2zM140 54h2v2h-2zM162 54h4v2h-4zM168 54h2v2h-2zM6 56h4v2h-4zM32 56h6v2h-6zM40 56h2v2h-2zM50 56h4v2h-4zM56 56h12v2h-12zM76 56h2v2h-2zM82 56h4v2h-4zM98 56h4v2h-4zM106 56h2v2h-2zM110 56h8v2h-8zM134 56h4v2h-4zM142 56h6v2h-6zM152 56h4v2h-4zM168 56h2v2h-2zM172 56h2v2h-2zM0 58h2v2h-2zM4 58h6v2h-6zM12 58h2v2h-2zM26 58h6v2h-6zM56 58h2v2h-2zM62 58h2v2h-2zM102 58h2v2h-2zM110 58h2v2h-2zM114 58h4v2h-4zM124 58h4v2h-4zM130 58h2v2h-2zM134 58h2v2h-2zM154 58h2v2h-2zM164 58h2v2h-2zM168 58h2v2h-2z" fill="#6c6c6c"/></svg><div style="position:absolute;left:995px;top:104px;white-space:nowrap;font-size:13px;color:#fff;letter-spacing:0.75px;text-shadow:1px 1px 0 #000;line-height:16px">Particle Emitter</div><div style="position:absolute;left:998px;top:127px;width:14px;height:14px;background:#e03a20;border:1px solid #000"><svg class="a" style="left:0;top:0" width="12" height="12"><path d="M2 2 L10 10 M10 2 L2 10" stroke="#000" stroke-width="2"/></svg></div><div style="position:absolute;left:1017px;top:126px;width:16px;height:16px;background:#a4a8b2;border:2px solid #000"><div class="a" style="left:1px;top:2px;width:2px;height:2px;background:#111"></div><div class="a" style="left:5px;top:2px;width:2px;height:2px;background:#111"></div><div class="a" style="left:9px;top:2px;width:2px;height:2px;background:#111"></div><div class="a" style="left:3px;top:5px;width:2px;height:2px;background:#111"></div><div class="a" style="left:7px;top:5px;width:2px;height:2px;background:#111"></div><div class="a" style="left:5px;top:8px;width:2px;height:2px;background:#111"></div></div><div style="position:absolute;left:1037px;top:126px;width:16px;height:16px;background:#9098a4;border:1px solid #7e8690;border-top-color:#888;border-left-color:#888"><div class="a" style="left:3px;top:0px;font-size:13px;line-height:14px;color:#68c8e8;font-family:Liberation Sans,sans-serif">S</div></div><div style="position:absolute;left:1084px;top:124px;white-space:nowrap;font-size:13px;color:#fff;letter-spacing:1px;text-shadow:1px 1px 0 #000;line-height:16px;width:17px;text-align:right">72</div><div style="position:absolute;left:1110px;top:105px;width:50px;height:50px;background:radial-gradient(circle at 50% 50%,#607890 0,#344458 14%,#18222e 32%,#222228 38%,#b06850 42%,#5a2818 46%,#201010 54%,#080606 70%,#000 100%)"><div class="a" style="left:22px;top:14px;width:4px;height:14px;background:linear-gradient(#c0d8f0,transparent);opacity:.6;transform:rotate(20deg)"></div></div><div style="position:absolute;left:985px;top:184px;width:179px;height:23px;background:#c6b854"></div><div style="position:absolute;left:995px;top:188px;white-space:nowrap;font-size:13px;color:#f0f0f0;letter-spacing:0.9px;text-shadow:1px 1px 0 #000;line-height:16px">Required</div><div style="position:absolute;left:1145px;top:188px;width:16px;height:16px;background:#000;border:1px solid #000"><div class="a" style="left:0;top:0;width:14px;height:14px;border:2px solid #5a9a48;background-color:#555;background-image:radial-gradient(circle,#000 1.1px,transparent 1.3px);background-size:3px 3px;background-position:0.5px 0.5px"></div><svg class="a" style="left:0;top:0" width="14" height="14"><path d="M2.5 10 Q4.5 6.5 6.5 8.5 T11.5 4" stroke="#f0f0d0" stroke-width="1.1" fill="none"/></svg></div><div style="position:absolute;left:985px;top:208px;width:179px;height:23px;background:#cc6252"></div><div style="position:absolute;left:995px;top:212px;white-space:nowrap;font-size:13px;color:#f0f0f0;letter-spacing:0.9px;text-shadow:1px 1px 0 #000;line-height:16px">Spawn</div><div style="position:absolute;left:1126px;top:213px;width:14px;height:14px;background:#9ca0aa;border:1px solid #000"><svg class="a" style="left:0;top:0" width="12" height="12"><path d="M2.5 6.5 L5 9 L10 3.5" stroke="#000" stroke-width="1.6" fill="none" transform="translate(.6,.6)" opacity=".6"/><path d="M2.5 6.5 L5 9 L10 3.5" stroke="#fff" stroke-width="1.3" fill="none"/></svg></div><div style="position:absolute;left:1145px;top:212px;width:16px;height:16px;background:#000;border:1px solid #000"><div class="a" style="left:0;top:0;width:14px;height:14px;border:2px solid #5a9a48;background-color:#555;background-image:radial-gradient(circle,#000 1.1px,transparent 1.3px);background-size:3px 3px;background-position:0.5px 0.5px"></div><svg class="a" style="left:0;top:0" width="14" height="14"><path d="M2.5 10 Q4.5 6.5 6.5 8.5 T11.5 4" stroke="#f0f0d0" stroke-width="1.1" fill="none"/></svg></div><div style="position:absolute;left:985px;top:232px;width:179px;height:23px;background:#1d1d25"></div><div style="position:absolute;left:995px;top:236px;white-space:nowrap;font-size:13px;color:#f0f0f0;letter-spacing:0.9px;text-shadow:1px 1px 0 #000;line-height:16px">Lifetime</div><div style="position:absolute;left:1126px;top:237px;width:14px;height:14px;background:#9ca0aa;border:1px solid #000"><svg class="a" style="left:0;top:0" width="12" height="12"><path d="M2.5 6.5 L5 9 L10 3.5" stroke="#000" stroke-width="1.6" fill="none" transform="translate(.6,.6)" opacity=".6"/><path d="M2.5 6.5 L5 9 L10 3.5" stroke="#fff" stroke-width="1.3" fill="none"/></svg></div><div style="position:absolute;left:1145px;top:236px;width:16px;height:16px;background:#000;border:1px solid #000"><div class="a" style="left:0;top:0;width:14px;height:14px;border:2px solid #5a9a48;background-color:#555;background-image:radial-gradient(circle,#000 1.1px,transparent 1.3px);background-size:3px 3px;background-position:0.5px 0.5px"></div><svg class="a" style="left:0;top:0" width="14" height="14"><path d="M2.5 10 Q4.5 6.5 6.5 8.5 T11.5 4" stroke="#f0f0d0" stroke-width="1.1" fill="none"/></svg></div><div style="position:absolute;left:985px;top:256px;width:179px;height:23px;background:#1d1d25"></div><div style="position:absolute;left:995px;top:260px;white-space:nowrap;font-size:13px;color:#f0f0f0;letter-spacing:0.9px;text-shadow:1px 1px 0 #000;line-height:16px">Initial Size</div><div style="position:absolute;left:1126px;top:261px;width:14px;height:14px;background:#9ca0aa;border:1px solid #000"><svg class="a" style="left:0;top:0" width="12" height="12"><path d="M2.5 6.5 L5 9 L10 3.5" stroke="#000" stroke-width="1.6" fill="none" transform="translate(.6,.6)" opacity=".6"/><path d="M2.5 6.5 L5 9 L10 3.5" stroke="#fff" stroke-width="1.3" fill="none"/></svg></div><div style="position:absolute;left:1145px;top:260px;width:16px;height:16px;background:#000;border:1px solid #000"><div class="a" style="left:0;top:0;width:14px;height:14px;border:2px solid #5a9a48;background-color:#555;background-image:radial-gradient(circle,#000 1.1px,transparent 1.3px);background-size:3px 3px;background-position:0.5px 0.5px"></div><svg class="a" style="left:0;top:0" width="14" height="14"><path d="M2.5 10 Q4.5 6.5 6.5 8.5 T11.5 4" stroke="#f0f0d0" stroke-width="1.1" fill="none"/></svg></div><div style="position:absolute;left:985px;top:280px;width:179px;height:23px;background:#1d1d25"></div><div style="position:absolute;left:995px;top:284px;white-space:nowrap;font-size:13px;color:#f0f0f0;letter-spacing:0.9px;text-shadow:1px 1px 0 #000;line-height:16px">Color Over Life</div><div style="position:absolute;left:1126px;top:285px;width:14px;height:14px;background:#9ca0aa;border:1px solid #000"><svg class="a" style="left:0;top:0" width="12" height="12"><path d="M2.5 6.5 L5 9 L10 3.5" stroke="#000" stroke-width="1.6" fill="none" transform="translate(.6,.6)" opacity=".6"/><path d="M2.5 6.5 L5 9 L10 3.5" stroke="#fff" stroke-width="1.3" fill="none"/></svg></div><div style="position:absolute;left:1145px;top:284px;width:16px;height:16px;background:#000;border:1px solid #000"><div class="a" style="left:0;top:0;width:14px;height:14px;border:2px solid #5a9a48;background-color:#555;background-image:radial-gradient(circle,#000 1.1px,transparent 1.3px);background-size:3px 3px;background-position:0.5px 0.5px"></div><svg class="a" style="left:0;top:0" width="14" height="14"><path d="M2.5 10 Q4.5 6.5 6.5 8.5 T11.5 4" stroke="#f0f0d0" stroke-width="1.1" fill="none"/></svg></div><div style="position:absolute;left:985px;top:304px;width:179px;height:23px;background:#1d1d25"></div><div style="position:absolute;left:995px;top:308px;white-space:nowrap;font-size:13px;color:#f0f0f0;letter-spacing:0.9px;text-shadow:1px 1px 0 #000;line-height:16px">Initial Rotation</div><div style="position:absolute;left:1126px;top:309px;width:14px;height:14px;background:#9ca0aa;border:1px solid #000"><svg class="a" style="left:0;top:0" width="12" height="12"><path d="M2.5 6.5 L5 9 L10 3.5" stroke="#000" stroke-width="1.6" fill="none" transform="translate(.6,.6)" opacity=".6"/><path d="M2.5 6.5 L5 9 L10 3.5" stroke="#fff" stroke-width="1.3" fill="none"/></svg></div><div style="position:absolute;left:1145px;top:308px;width:16px;height:16px;background:#000;border:1px solid #000"><div class="a" style="left:0;top:0;width:14px;height:14px;border:2px solid #5a9a48;background-color:#555;background-image:radial-gradient(circle,#000 1.1px,transparent 1.3px);background-size:3px 3px;background-position:0.5px 0.5px"></div><svg class="a" style="left:0;top:0" width="14" height="14"><path d="M2.5 10 Q4.5 6.5 6.5 8.5 T11.5 4" stroke="#f0f0d0" stroke-width="1.1" fill="none"/></svg></div><div style="position:absolute;left:985px;top:328px;width:179px;height:23px;background:#1d1d25"></div><div style="position:absolute;left:995px;top:332px;white-space:nowrap;font-size:13px;color:#f0f0f0;letter-spacing:0.9px;text-shadow:1px 1px 0 #000;line-height:16px">Size By Life</div><div style="position:absolute;left:1126px;top:333px;width:14px;height:14px;background:#9ca0aa;border:1px solid #000"><svg class="a" style="left:0;top:0" width="12" height="12"><path d="M2.5 6.5 L5 9 L10 3.5" stroke="#000" stroke-width="1.6" fill="none" transform="translate(.6,.6)" opacity=".6"/><path d="M2.5 6.5 L5 9 L10 3.5" stroke="#fff" stroke-width="1.3" fill="none"/></svg></div><div style="position:absolute;left:1145px;top:332px;width:16px;height:16px;background:#000;border:1px solid #000"><div class="a" style="left:0;top:0;width:14px;height:14px;border:2px solid #5a9a48;background-color:#555;background-image:radial-gradient(circle,#000 1.1px,transparent 1.3px);background-size:3px 3px;background-position:0.5px 0.5px"></div><svg class="a" style="left:0;top:0" width="14" height="14"><path d="M2.5 10 Q4.5 6.5 6.5 8.5 T11.5 4" stroke="#f0f0d0" stroke-width="1.1" fill="none"/></svg></div><div style="position:absolute;left:985px;top:352px;width:179px;height:23px;background:#1d1d25"></div><div style="position:absolute;left:995px;top:356px;white-space:nowrap;font-size:13px;color:#f0f0f0;letter-spacing:0.9px;text-shadow:1px 1px 0 #000;line-height:16px">Sphere</div><div style="position:absolute;left:1126px;top:357px;width:14px;height:14px;background:#9ca0aa;border:1px solid #000"><svg class="a" style="left:0;top:0" width="12" height="12"><path d="M2.5 6.5 L5 9 L10 3.5" stroke="#000" stroke-width="1.6" fill="none" transform="translate(.6,.6)" opacity=".6"/><path d="M2.5 6.5 L5 9 L10 3.5" stroke="#fff" stroke-width="1.3" fill="none"/></svg></div><div style="position:absolute;left:1145px;top:356px;width:16px;height:16px;background:#000;border:1px solid #000"><div class="a" style="left:0;top:0;width:14px;height:14px;border:2px solid #5a9a48;background-color:#555;background-image:radial-gradient(circle,#000 1.1px,transparent 1.3px);background-size:3px 3px;background-position:0.5px 0.5px"></div><svg class="a" style="left:0;top:0" width="14" height="14"><path d="M2.5 10 Q4.5 6.5 6.5 8.5 T11.5 4" stroke="#f0f0d0" stroke-width="1.1" fill="none"/></svg></div><div style="position:absolute;left:985px;top:376px;width:179px;height:23px;background:#1d1d25"></div><div style="position:absolute;left:995px;top:380px;white-space:nowrap;font-size:13px;color:#f0f0f0;letter-spacing:0.9px;text-shadow:1px 1px 0 #000;line-height:16px">Initial RotRate</div><div style="position:absolute;left:1126px;top:381px;width:14px;height:14px;background:#9ca0aa;border:1px solid #000"><svg class="a" style="left:0;top:0" width="12" height="12"><path d="M2.5 6.5 L5 9 L10 3.5" stroke="#000" stroke-width="1.6" fill="none" transform="translate(.6,.6)" opacity=".6"/><path d="M2.5 6.5 L5 9 L10 3.5" stroke="#fff" stroke-width="1.3" fill="none"/></svg></div><div style="position:absolute;left:1145px;top:380px;width:16px;height:16px;background:#000;border:1px solid #000"><div class="a" style="left:0;top:0;width:14px;height:14px;border:2px solid #5a9a48;background-color:#555;background-image:radial-gradient(circle,#000 1.1px,transparent 1.3px);background-size:3px 3px;background-position:0.5px 0.5px"></div><svg class="a" style="left:0;top:0" width="14" height="14"><path d="M2.5 10 Q4.5 6.5 6.5 8.5 T11.5 4" stroke="#f0f0d0" stroke-width="1.1" fill="none"/></svg></div><div style="position:absolute;left:985px;top:400px;width:179px;height:23px;background:#1d1d25"></div><div style="position:absolute;left:1126px;top:405px;width:14px;height:14px;background:#9ca0aa;border:1px solid #000"><svg class="a" style="left:0;top:0" width="12" height="12"><path d="M2.5 6.5 L5 9 L10 3.5" stroke="#000" stroke-width="1.6" fill="none" transform="translate(.6,.6)" opacity=".6"/><path d="M2.5 6.5 L5 9 L10 3.5" stroke="#fff" stroke-width="1.3" fill="none"/></svg></div><div style="position:absolute;left:1145px;top:404px;width:16px;height:16px;background:#000;border:1px solid #000"><div class="a" style="left:0;top:0;width:14px;height:14px;border:2px solid #5a9a48;background-color:#555;background-image:radial-gradient(circle,#000 1.1px,transparent 1.3px);background-size:3px 3px;background-position:0.5px 0.5px"></div><svg class="a" style="left:0;top:0" width="14" height="14"><path d="M2.5 10 Q4.5 6.5 6.5 8.5 T11.5 4" stroke="#f0f0d0" stroke-width="1.1" fill="none"/></svg></div><div style="position:absolute;left:984px;top:159px;width:1px;height:247px;background:#050507"></div><div style="position:absolute;left:1164px;top:100px;width:6px;height:59px;background:#1090a8"></div><div style="position:absolute;left:1175px;top:104px;white-space:nowrap;font-size:13px;color:#fff;letter-spacing:0.75px;text-shadow:1px 1px 0 #000;line-height:16px">Flashco</div><div style="position:absolute;left:1178px;top:127px;width:14px;height:14px;background:#9ca0aa;border:1px solid #000"><svg class="a" style="left:0;top:0" width="12" height="12"><path d="M2.5 6.5 L5 9 L10 3.5" stroke="#000" stroke-width="1.6" fill="none" transform="translate(.6,.6)" opacity=".6"/><path d="M2.5 6.5 L5 9 L10 3.5" stroke="#fff" stroke-width="1.3" fill="none"/></svg></div><div style="position:absolute;left:1197px;top:126px;width:16px;height:16px;background:#a4a8b2;border:2px solid #000"><div class="a" style="left:1px;top:2px;width:2px;height:2px;background:#111"></div><div class="a" style="left:5px;top:2px;width:2px;height:2px;background:#111"></div><div class="a" style="left:9px;top:2px;width:2px;height:2px;background:#111"></div><div class="a" style="left:3px;top:5px;width:2px;height:2px;background:#111"></div><div class="a" style="left:7px;top:5px;width:2px;height:2px;background:#111"></div><div class="a" style="left:5px;top:8px;width:2px;height:2px;background:#111"></div></div><div style="position:absolute;left:1217px;top:126px;width:16px;height:16px;background:#9098a4;border:1px solid #7e8690;border-top-color:#888;border-left-color:#888"><div class="a" style="left:3px;top:0px;font-size:13px;line-height:14px;color:#68c8e8;font-family:Liberation Sans,sans-serif">S</div></div><div style="position:absolute;left:1165px;top:184px;width:179px;height:23px;background:#c6b854"></div><div style="position:absolute;left:1175px;top:188px;white-space:nowrap;font-size:13px;color:#f0f0f0;letter-spacing:0.9px;text-shadow:1px 1px 0 #000;line-height:16px">Required</div><div style="position:absolute;left:1325px;top:188px;width:16px;height:16px;background:#000;border:1px solid #000"><div class="a" style="left:0;top:0;width:14px;height:14px;border:2px solid #5a9a48;background-color:#555;background-image:radial-gradient(circle,#000 1.1px,transparent 1.3px);background-size:3px 3px;background-position:0.5px 0.5px"></div><svg class="a" style="left:0;top:0" width="14" height="14"><path d="M2.5 10 Q4.5 6.5 6.5 8.5 T11.5 4" stroke="#f0f0d0" stroke-width="1.1" fill="none"/></svg></div><div style="position:absolute;left:1165px;top:208px;width:179px;height:23px;background:#cc6252"></div><div style="position:absolute;left:1175px;top:212px;white-space:nowrap;font-size:13px;color:#f0f0f0;letter-spacing:0.9px;text-shadow:1px 1px 0 #000;line-height:16px">Spawn</div><div style="position:absolute;left:1306px;top:213px;width:14px;height:14px;background:#9ca0aa;border:1px solid #000"><svg class="a" style="left:0;top:0" width="12" height="12"><path d="M2.5 6.5 L5 9 L10 3.5" stroke="#000" stroke-width="1.6" fill="none" transform="translate(.6,.6)" opacity=".6"/><path d="M2.5 6.5 L5 9 L10 3.5" stroke="#fff" stroke-width="1.3" fill="none"/></svg></div><div style="position:absolute;left:1325px;top:212px;width:16px;height:16px;background:#000;border:1px solid #000"><div class="a" style="left:0;top:0;width:14px;height:14px;border:2px solid #5a9a48;background-color:#555;background-image:radial-gradient(circle,#000 1.1px,transparent 1.3px);background-size:3px 3px;background-position:0.5px 0.5px"></div><svg class="a" style="left:0;top:0" width="14" height="14"><path d="M2.5 10 Q4.5 6.5 6.5 8.5 T11.5 4" stroke="#f0f0d0" stroke-width="1.1" fill="none"/></svg></div><div style="position:absolute;left:1165px;top:232px;width:179px;height:23px;background:#1d1d25"></div><div style="position:absolute;left:1175px;top:236px;white-space:nowrap;font-size:13px;color:#f0f0f0;letter-spacing:0.9px;text-shadow:1px 1px 0 #000;line-height:16px">Lifetime</div><div style="position:absolute;left:1306px;top:237px;width:14px;height:14px;background:#9ca0aa;border:1px solid #000"><svg class="a" style="left:0;top:0" width="12" height="12"><path d="M2.5 6.5 L5 9 L10 3.5" stroke="#000" stroke-width="1.6" fill="none" transform="translate(.6,.6)" opacity=".6"/><path d="M2.5 6.5 L5 9 L10 3.5" stroke="#fff" stroke-width="1.3" fill="none"/></svg></div><div style="position:absolute;left:1325px;top:236px;width:16px;height:16px;background:#000;border:1px solid #000"><div class="a" style="left:0;top:0;width:14px;height:14px;border:2px solid #5a9a48;background-color:#555;background-image:radial-gradient(circle,#000 1.1px,transparent 1.3px);background-size:3px 3px;background-position:0.5px 0.5px"></div><svg class="a" style="left:0;top:0" width="14" height="14"><path d="M2.5 10 Q4.5 6.5 6.5 8.5 T11.5 4" stroke="#f0f0d0" stroke-width="1.1" fill="none"/></svg></div><div style="position:absolute;left:1165px;top:256px;width:179px;height:23px;background:#1d1d25"></div><div style="position:absolute;left:1175px;top:260px;white-space:nowrap;font-size:13px;color:#f0f0f0;letter-spacing:0.9px;text-shadow:1px 1px 0 #000;line-height:16px">Initial S</div><div style="position:absolute;left:1306px;top:261px;width:14px;height:14px;background:#9ca0aa;border:1px solid #000"><svg class="a" style="left:0;top:0" width="12" height="12"><path d="M2.5 6.5 L5 9 L10 3.5" stroke="#000" stroke-width="1.6" fill="none" transform="translate(.6,.6)" opacity=".6"/><path d="M2.5 6.5 L5 9 L10 3.5" stroke="#fff" stroke-width="1.3" fill="none"/></svg></div><div style="position:absolute;left:1325px;top:260px;width:16px;height:16px;background:#000;border:1px solid #000"><div class="a" style="left:0;top:0;width:14px;height:14px;border:2px solid #5a9a48;background-color:#555;background-image:radial-gradient(circle,#000 1.1px,transparent 1.3px);background-size:3px 3px;background-position:0.5px 0.5px"></div><svg class="a" style="left:0;top:0" width="14" height="14"><path d="M2.5 10 Q4.5 6.5 6.5 8.5 T11.5 4" stroke="#f0f0d0" stroke-width="1.1" fill="none"/></svg></div><div style="position:absolute;left:1165px;top:280px;width:179px;height:23px;background:#1d1d25"></div><div style="position:absolute;left:1175px;top:284px;white-space:nowrap;font-size:13px;color:#f0f0f0;letter-spacing:0.9px;text-shadow:1px 1px 0 #000;line-height:16px">SubImag</div><div style="position:absolute;left:1306px;top:285px;width:14px;height:14px;background:#9ca0aa;border:1px solid #000"><svg class="a" style="left:0;top:0" width="12" height="12"><path d="M2.5 6.5 L5 9 L10 3.5" stroke="#000" stroke-width="1.6" fill="none" transform="translate(.6,.6)" opacity=".6"/><path d="M2.5 6.5 L5 9 L10 3.5" stroke="#fff" stroke-width="1.3" fill="none"/></svg></div><div style="position:absolute;left:1325px;top:284px;width:16px;height:16px;background:#000;border:1px solid #000"><div class="a" style="left:0;top:0;width:14px;height:14px;border:2px solid #5a9a48;background-color:#555;background-image:radial-gradient(circle,#000 1.1px,transparent 1.3px);background-size:3px 3px;background-position:0.5px 0.5px"></div><svg class="a" style="left:0;top:0" width="14" height="14"><path d="M2.5 10 Q4.5 6.5 6.5 8.5 T11.5 4" stroke="#f0f0d0" stroke-width="1.1" fill="none"/></svg></div><div style="position:absolute;left:1165px;top:304px;width:179px;height:23px;background:#1d1d25"></div><div style="position:absolute;left:1175px;top:308px;white-space:nowrap;font-size:13px;color:#f0f0f0;letter-spacing:0.9px;text-shadow:1px 1px 0 #000;line-height:16px">Size By</div><div style="position:absolute;left:1306px;top:309px;width:14px;height:14px;background:#9ca0aa;border:1px solid #000"><svg class="a" style="left:0;top:0" width="12" height="12"><path d="M2.5 6.5 L5 9 L10 3.5" stroke="#000" stroke-width="1.6" fill="none" transform="translate(.6,.6)" opacity=".6"/><path d="M2.5 6.5 L5 9 L10 3.5" stroke="#fff" stroke-width="1.3" fill="none"/></svg></div><div style="position:absolute;left:1325px;top:308px;width:16px;height:16px;background:#000;border:1px solid #000"><div class="a" style="left:0;top:0;width:14px;height:14px;border:2px solid #5a9a48;background-color:#555;background-image:radial-gradient(circle,#000 1.1px,transparent 1.3px);background-size:3px 3px;background-position:0.5px 0.5px"></div><svg class="a" style="left:0;top:0" width="14" height="14"><path d="M2.5 10 Q4.5 6.5 6.5 8.5 T11.5 4" stroke="#f0f0d0" stroke-width="1.1" fill="none"/></svg></div><div style="position:absolute;left:1165px;top:328px;width:179px;height:23px;background:#1d1d25"></div><div style="position:absolute;left:1175px;top:332px;white-space:nowrap;font-size:13px;color:#f0f0f0;letter-spacing:0.9px;text-shadow:1px 1px 0 #000;line-height:16px">Emitter</div><div style="position:absolute;left:1306px;top:333px;width:14px;height:14px;background:#9ca0aa;border:1px solid #000"><svg class="a" style="left:0;top:0" width="12" height="12"><path d="M2.5 6.5 L5 9 L10 3.5" stroke="#000" stroke-width="1.6" fill="none" transform="translate(.6,.6)" opacity=".6"/><path d="M2.5 6.5 L5 9 L10 3.5" stroke="#fff" stroke-width="1.3" fill="none"/></svg></div><div style="position:absolute;left:1325px;top:332px;width:16px;height:16px;background:#000;border:1px solid #000"><div class="a" style="left:0;top:0;width:14px;height:14px;border:2px solid #5a9a48;background-color:#555;background-image:radial-gradient(circle,#000 1.1px,transparent 1.3px);background-size:3px 3px;background-position:0.5px 0.5px"></div><svg class="a" style="left:0;top:0" width="14" height="14"><path d="M2.5 10 Q4.5 6.5 6.5 8.5 T11.5 4" stroke="#f0f0d0" stroke-width="1.1" fill="none"/></svg></div><div style="position:absolute;left:1165px;top:352px;width:179px;height:23px;background:#1d1d25"></div><div style="position:absolute;left:1175px;top:356px;white-space:nowrap;font-size:13px;color:#f0f0f0;letter-spacing:0.9px;text-shadow:1px 1px 0 #000;line-height:16px">Initial C</div><div style="position:absolute;left:1306px;top:357px;width:14px;height:14px;background:#9ca0aa;border:1px solid #000"><svg class="a" style="left:0;top:0" width="12" height="12"><path d="M2.5 6.5 L5 9 L10 3.5" stroke="#000" stroke-width="1.6" fill="none" transform="translate(.6,.6)" opacity=".6"/><path d="M2.5 6.5 L5 9 L10 3.5" stroke="#fff" stroke-width="1.3" fill="none"/></svg></div><div style="position:absolute;left:1325px;top:356px;width:16px;height:16px;background:#000;border:1px solid #000"><div class="a" style="left:0;top:0;width:14px;height:14px;border:2px solid #5a9a48;background-color:#555;background-image:radial-gradient(circle,#000 1.1px,transparent 1.3px);background-size:3px 3px;background-position:0.5px 0.5px"></div><svg class="a" style="left:0;top:0" width="14" height="14"><path d="M2.5 10 Q4.5 6.5 6.5 8.5 T11.5 4" stroke="#f0f0d0" stroke-width="1.1" fill="none"/></svg></div><div style="position:absolute;left:1165px;top:376px;width:179px;height:23px;background:#1d1d25"></div><div style="position:absolute;left:1175px;top:380px;white-space:nowrap;font-size:13px;color:#f0f0f0;letter-spacing:0.9px;text-shadow:1px 1px 0 #000;line-height:16px">Initial R</div><div style="position:absolute;left:1306px;top:381px;width:14px;height:14px;background:#9ca0aa;border:1px solid #000"><svg class="a" style="left:0;top:0" width="12" height="12"><path d="M2.5 6.5 L5 9 L10 3.5" stroke="#000" stroke-width="1.6" fill="none" transform="translate(.6,.6)" opacity=".6"/><path d="M2.5 6.5 L5 9 L10 3.5" stroke="#fff" stroke-width="1.3" fill="none"/></svg></div><div style="position:absolute;left:1325px;top:380px;width:16px;height:16px;background:#000;border:1px solid #000"><div class="a" style="left:0;top:0;width:14px;height:14px;border:2px solid #5a9a48;background-color:#555;background-image:radial-gradient(circle,#000 1.1px,transparent 1.3px);background-size:3px 3px;background-position:0.5px 0.5px"></div><svg class="a" style="left:0;top:0" width="14" height="14"><path d="M2.5 10 Q4.5 6.5 6.5 8.5 T11.5 4" stroke="#f0f0d0" stroke-width="1.1" fill="none"/></svg></div><div style="position:absolute;left:1165px;top:400px;width:179px;height:23px;background:#1d1d25"></div><div style="position:absolute;left:1306px;top:405px;width:14px;height:14px;background:#9ca0aa;border:1px solid #000"><svg class="a" style="left:0;top:0" width="12" height="12"><path d="M2.5 6.5 L5 9 L10 3.5" stroke="#000" stroke-width="1.6" fill="none" transform="translate(.6,.6)" opacity=".6"/><path d="M2.5 6.5 L5 9 L10 3.5" stroke="#fff" stroke-width="1.3" fill="none"/></svg></div><div style="position:absolute;left:1325px;top:404px;width:16px;height:16px;background:#000;border:1px solid #000"><div class="a" style="left:0;top:0;width:14px;height:14px;border:2px solid #5a9a48;background-color:#555;background-image:radial-gradient(circle,#000 1.1px,transparent 1.3px);background-size:3px 3px;background-position:0.5px 0.5px"></div><svg class="a" style="left:0;top:0" width="14" height="14"><path d="M2.5 10 Q4.5 6.5 6.5 8.5 T11.5 4" stroke="#f0f0d0" stroke-width="1.1" fill="none"/></svg></div><div style="position:absolute;left:1164px;top:159px;width:1px;height:247px;background:#050507"></div></div><div style="position:absolute;left:1226px;top:100px;width:17px;height:306px;background:linear-gradient(90deg,#f0f0f0,#e8e8e8)"></div><div style="position:absolute;left:1229px;top:104px;white-space:nowrap;font-size:9px;color:#333">&#9650;</div><div style="position:absolute;left:1228px;top:118px;width:14px;height:15px;background:linear-gradient(90deg,#f8f8f8,#dcdcdc);border:1px solid #9a9a9a;border-radius:2px"></div><div style="position:absolute;left:1229px;top:393px;white-space:nowrap;font-size:9px;color:#333">&#9660;</div><div style="position:absolute;left:444px;top:406px;width:782px;height:17px;background:linear-gradient(#f4f4f4,#e8e8e8)"></div><div style="position:absolute;left:449px;top:407px;white-space:nowrap;font-size:9px;color:#333">&#9664;</div><div style="position:absolute;left:463px;top:407px;width:28px;height:15px;background:linear-gradient(#fbfbfb,#d8d8d8);border:1px solid #9a9a9a;border-radius:2px"><div class="a" style="left:10px;top:3px;width:7px;height:7px;border-left:1px solid #555;border-right:1px solid #555;background:linear-gradient(90deg,transparent 3px,#555 3px,#555 4px,transparent 4px)"></div></div><div style="position:absolute;left:1214px;top:407px;white-space:nowrap;font-size:9px;color:#333">&#9654;</div><div style="position:absolute;left:1226px;top:406px;width:17px;height:17px;background:#e8e8e8"></div><div style="position:absolute;left:42px;top:423px;width:1202px;height:5px;background:linear-gradient(#e4e4e4,#d8d8d8)"></div><div style="position:absolute;left:43px;top:428px;width:388px;height:18px;background:linear-gradient(#e4e4e4,#cfcfcf)"></div><div style="position:absolute;left:45px;top:429px;white-space:nowrap;font-size:11px;color:#111;line-height:16px">Properties: Effect_01</div><svg class="a" style="left:415px;top:432px" width="12" height="11"><path d="M1.5 1.5 L10 9.5 M10 1.5 L1.5 9.5" stroke="#111" stroke-width="1.6"/></svg><div style="position:absolute;left:43px;top:446px;width:388px;height:241px;background:#ececec"></div><div style="position:absolute;left:45px;top:452px;width:384px;height:30px;background:#eef0f4;border-top:1px solid #d8dde6;border-bottom:1px solid #d8dde6"></div><div style="position:absolute;left:48px;top:455px;width:329px;height:23px;background:#fff;border:1px solid #b8c4d4;border-radius:2px"></div><div style="position:absolute;left:51px;top:460px;white-space:nowrap;font-size:11px;color:#000;line-height:14px">Type here to search</div><div style="position:absolute;left:379px;top:456px;width:22px;height:22px;background:linear-gradient(#fafafa,#e0e0e0);border:1px solid #8a8a8a;border-radius:3px"><svg class="a" style="left:2px;top:2px" width="17" height="17"><circle cx="10" cy="7" r="4.5" fill="#bcd8ff" stroke="#2a70f0" stroke-width="1.6"/><line x1="6.5" y1="10.5" x2="2.5" y2="14.5" stroke="#2a60e0" stroke-width="2.5" stroke-linecap="round"/></svg></div><div style="position:absolute;left:403px;top:456px;width:22px;height:22px;background:linear-gradient(#fafafa,#e0e0e0);border:1px solid #6a6a6a;border-radius:3px"><svg class="a" style="left:1px;top:1px" width="19" height="19"><path d="M3 15 L10 8 A4 4 0 1 1 14 5 L12 7 L13.5 8.5 L16 6 A4 4 0 0 1 11 11 L5 17 Z" fill="#888" stroke="#333" stroke-width="1"/><path d="M13 15 h5 l-2.5 3 z" fill="#2a60e0"/></svg></div><div style="position:absolute;left:60px;top:485px;width:354px;height:23px;background:#2c2c2c;border-radius:9px 0 0 0"></div><div style="position:absolute;left:79px;top:488px;white-space:nowrap;font-size:12px;color:#fff;font-weight:bold;line-height:15px">ParticleSystem</div><div style="position:absolute;left:43px;top:508px;width:371px;height:19px;background:#ececec;border-bottom:1px solid #dcdcdc"></div><div style="position:absolute;left:216px;top:508px;width:1px;height:19px;background:#d0d0d0"></div><div style="position:absolute;left:74px;top:512px;white-space:nowrap;font-size:11px;color:#111;line-height:13px;">SystemUpdateMode</div><div style="position:absolute;left:218px;top:512px;white-space:nowrap;font-size:11px;color:#111;line-height:13px">EPSUM_RealTime</div><div style="position:absolute;left:43px;top:527px;width:371px;height:19px;background:#ececec;border-bottom:1px solid #dcdcdc"></div><div style="position:absolute;left:216px;top:527px;width:1px;height:19px;background:#d0d0d0"></div><div style="position:absolute;left:74px;top:531px;white-space:nowrap;font-size:11px;color:#111;line-height:13px;">UpdateTime_FPS</div><div style="position:absolute;left:218px;top:531px;white-space:nowrap;font-size:11px;color:#111;line-height:13px">60.000000</div><div style="position:absolute;left:43px;top:546px;width:371px;height:19px;background:#ececec;border-bottom:1px solid #dcdcdc"></div><div style="position:absolute;left:216px;top:546px;width:1px;height:19px;background:#d0d0d0"></div><div style="position:absolute;left:74px;top:550px;white-space:nowrap;font-size:11px;color:#111;line-height:13px;">WarmupTime</div><div style="position:absolute;left:218px;top:550px;white-space:nowrap;font-size:11px;color:#111;line-height:13px">0.000000</div><div style="position:absolute;left:43px;top:565px;width:371px;height:19px;background:#ececec;border-bottom:1px solid #dcdcdc"></div><div style="position:absolute;left:216px;top:565px;width:1px;height:19px;background:#d0d0d0"></div><div style="position:absolute;left:74px;top:569px;white-space:nowrap;font-size:11px;color:#111;line-height:13px;font-weight:bold">bLit</div><div style="position:absolute;left:218px;top:568px;width:13px;height:13px;background:linear-gradient(135deg,#f0f0f0,#fff);border:1px solid #1c3a60;border-radius:1px"></div><div style="position:absolute;left:43px;top:584px;width:371px;height:19px;background:#ececec;border-bottom:1px solid #dcdcdc"></div><div style="position:absolute;left:216px;top:584px;width:1px;height:19px;background:#d0d0d0"></div><div style="position:absolute;left:74px;top:588px;white-space:nowrap;font-size:11px;color:#111;line-height:13px;">bOrientZAxisTowardCamera</div><div style="position:absolute;left:218px;top:587px;width:13px;height:13px;background:linear-gradient(135deg,#f0f0f0,#fff);border:1px solid #1c3a60;border-radius:1px"></div><div style="position:absolute;left:43px;top:603px;width:371px;height:19px;background:#ececec;border-bottom:1px solid #dcdcdc"></div><div style="position:absolute;left:216px;top:603px;width:1px;height:19px;background:#d0d0d0"></div><div style="position:absolute;left:74px;top:607px;white-space:nowrap;font-size:11px;color:#111;line-height:13px;">bSkipSpawnCountCheck</div><div style="position:absolute;left:218px;top:606px;width:13px;height:13px;background:linear-gradient(135deg,#f0f0f0,#fff);border:1px solid #1c3a60;border-radius:1px"></div><div style="position:absolute;left:43px;top:622px;width:371px;height:19px;background:#ececec;border-bottom:1px solid #dcdcdc"></div><div style="position:absolute;left:216px;top:622px;width:1px;height:19px;background:#d0d0d0"></div><div style="position:absolute;left:74px;top:626px;white-space:nowrap;font-size:11px;color:#111;line-height:13px;">SecondsBeforeInactive</div><div style="position:absolute;left:218px;top:626px;white-space:nowrap;font-size:11px;color:#111;line-height:13px">0.000000</div><div style="position:absolute;left:60px;top:641px;width:354px;height:7px;background:#2c2c2c;border-radius:0 0 0 6px"></div><div style="position:absolute;left:60px;top:649px;width:354px;height:24px;background:#2c2c2c;border-radius:9px 0 0 0"></div><div style="position:absolute;left:79px;top:652px;white-space:nowrap;font-size:12px;color:#fff;font-weight:bold;line-height:15px">LOD</div><div style="position:absolute;left:43px;top:673px;width:371px;height:14px;background:#ececec;overflow:hidden"><div class="a" style="left:31px;top:5px;font-size:11px;line-height:13px;color:#111;white-space:nowrap">LODMethod</div><div class="a" style="left:173px;top:0;width:1px;height:14px;background:#d0d0d0"></div><div class="a" style="left:175px;top:5px;font-size:11px;line-height:13px;color:#111;white-space:nowrap;letter-spacing:-0.75px">PARTICLESYSTEMLODMETHOD_Automati</div></div><div style="position:absolute;left:414px;top:485px;width:17px;height:202px;background:linear-gradient(90deg,#e8e8e8,#f4f4f4)"></div><div style="position:absolute;left:418px;top:488px;white-space:nowrap;font-size:8px;color:#333">&#9650;</div><div style="position:absolute;left:415px;top:502px;width:15px;height:60px;background:linear-gradient(90deg,#fafafa,#d8d8d8);border:1px solid #9a9a9a;border-radius:2px"><div class="a" style="left:3px;top:24px;width:7px;height:7px;border-top:1px solid #555;border-bottom:1px solid #555;background:linear-gradient(transparent 3px,#555 3px,#555 4px,transparent 4px)"></div></div><div style="position:absolute;left:418px;top:675px;white-space:nowrap;font-size:8px;color:#333">&#9660;</div><div style="position:absolute;left:431px;top:428px;width:6px;height:259px;background:linear-gradient(90deg,#d8d8d8,#e8e8e8)"></div><div style="position:absolute;left:437px;top:428px;width:807px;height:18px;background:linear-gradient(#e4e4e4,#cfcfcf)"></div><div style="position:absolute;left:439px;top:429px;white-space:nowrap;font-size:11px;color:#111;line-height:16px">Unreal Curve Editor: Effect_01</div><svg class="a" style="left:1226px;top:432px" width="12" height="11"><path d="M1.5 1.5 L10 9.5 M10 1.5 L1.5 9.5" stroke="#111" stroke-width="1.6"/></svg><div style="position:absolute;left:437px;top:446px;width:807px;height:26px;background:linear-gradient(#fdfdfe,#f0f3f8 40%,#dfe6f0 55%,#e6ebf2)"></div><div style="position:absolute;left:437px;top:471px;width:807px;height:1px;background:#a0a0a0"></div><div style="position:absolute;left:437px;top:472px;width:17px;height:215px;background:linear-gradient(90deg,#e8e8e8,#f6f6f6)"></div><div style="position:absolute;left:442px;top:476px;white-space:nowrap;font-size:8px;color:#333">&#9650;</div><div style="position:absolute;left:438px;top:490px;width:15px;height:88px;background:linear-gradient(90deg,#fafafa,#d8d8d8);border:1px solid #9a9a9a;border-radius:2px"><div class="a" style="left:3px;top:38px;width:7px;height:7px;border-top:1px solid #555;border-bottom:1px solid #555;background:linear-gradient(transparent 3px,#555 3px,#555 4px,transparent 4px)"></div></div><div style="position:absolute;left:442px;top:674px;white-space:nowrap;font-size:8px;color:#333">&#9660;</div><div style="position:absolute;left:454px;top:472px;width:201px;height:36px;background:#a0a0a0;border-top:1px solid #111;border-right:1px solid #222"></div><div style="position:absolute;left:454px;top:473px;width:6px;height:35px;background:#8aa010"></div><div style="position:absolute;left:463px;top:476px;white-space:nowrap;font-size:13px;color:#fff;letter-spacing:0.6px;text-shadow:1px 1px 0 #000;line-height:16px">SpawnRate</div><div style="position:absolute;left:462px;top:496px;width:8px;height:8px;background:#e81010;border:1px solid #000"></div><div style="position:absolute;left:642px;top:496px;width:8px;height:8px;background:#707070;border:1px solid #000"></div><div style="position:absolute;left:454px;top:508px;width:201px;height:36px;background:#a0a0a0;border-top:1px solid #111;border-right:1px solid #222"></div><div style="position:absolute;left:454px;top:509px;width:6px;height:35px;background:#1050d8"></div><div style="position:absolute;left:463px;top:512px;white-space:nowrap;font-size:13px;color:#fff;letter-spacing:0.6px;text-shadow:1px 1px 0 #000;line-height:16px">SpawnRate</div><div style="position:absolute;left:462px;top:532px;width:8px;height:8px;background:#e81010;border:1px solid #000"></div><div style="position:absolute;left:642px;top:532px;width:8px;height:8px;background:#f0b010;border:1px solid #000"></div><div style="position:absolute;left:454px;top:544px;width:201px;height:36px;background:#a0a0a0;border-top:1px solid #111;border-right:1px solid #222"></div><div style="position:absolute;left:454px;top:545px;width:6px;height:35px;background:#8aa010"></div><div style="position:absolute;left:463px;top:548px;white-space:nowrap;font-size:13px;color:#fff;letter-spacing:0.6px;text-shadow:1px 1px 0 #000;line-height:16px">LifeMultiplier</div><div style="position:absolute;left:462px;top:568px;width:8px;height:8px;background:#e81010;border:1px solid #000"></div><div style="position:absolute;left:642px;top:568px;width:8px;height:8px;background:#707070;border:1px solid #000"></div><div style="position:absolute;left:454px;top:580px;width:201px;height:36px;background:#a0a0a0;border-top:1px solid #111;border-right:1px solid #222"></div><div style="position:absolute;left:454px;top:581px;width:6px;height:35px;background:#d01870"></div><div style="position:absolute;left:463px;top:584px;white-space:nowrap;font-size:13px;color:#fff;letter-spacing:0.6px;text-shadow:1px 1px 0 #000;line-height:16px">ColorOverLife</div><div style="position:absolute;left:462px;top:604px;width:8px;height:8px;background:#e81010;border:1px solid #000"></div><div style="position:absolute;left:474px;top:604px;width:8px;height:8px;background:#10c010;border:1px solid #000"></div><div style="position:absolute;left:486px;top:604px;width:8px;height:8px;background:#1010e0;border:1px solid #000"></div><div style="position:absolute;left:642px;top:604px;width:8px;height:8px;background:#f0b010;border:1px solid #000"></div><div style="position:absolute;left:454px;top:616px;width:201px;height:36px;background:#a0a0a0;border-top:1px solid #111;border-right:1px solid #222"></div><div style="position:absolute;left:454px;top:617px;width:6px;height:35px;background:#d01870"></div><div style="position:absolute;left:463px;top:620px;white-space:nowrap;font-size:13px;color:#fff;letter-spacing:0.6px;text-shadow:1px 1px 0 #000;line-height:16px">AlphaOverLife</div><div style="position:absolute;left:462px;top:640px;width:8px;height:8px;background:#e81010;border:1px solid #000"></div><div style="position:absolute;left:642px;top:640px;width:8px;height:8px;background:#f0b010;border:1px solid #000"></div><div style="position:absolute;left:454px;top:652px;width:201px;height:36px;background:#a0a0a0;border-top:1px solid #111;border-right:1px solid #222"></div><div style="position:absolute;left:454px;top:653px;width:6px;height:35px;background:#e06a10"></div><div style="position:absolute;left:463px;top:656px;white-space:nowrap;font-size:13px;color:#fff;letter-spacing:0.6px;text-shadow:1px 1px 0 #000;line-height:16px">SizeScale</div><div style="position:absolute;left:462px;top:676px;width:8px;height:8px;background:#e81010;border:1px solid #000"></div><div style="position:absolute;left:474px;top:676px;width:8px;height:8px;background:#10c010;border:1px solid #000"></div><div style="position:absolute;left:486px;top:676px;width:8px;height:8px;background:#1010e0;border:1px solid #000"></div><div style="position:absolute;left:642px;top:676px;width:8px;height:8px;background:#f0b010;border:1px solid #000"></div><svg class="a" style="left:655px;top:472px" width="589" height="215"><defs><linearGradient id="gg" x1="335" y1="0" x2="420" y2="0" gradientUnits="userSpaceOnUse"><stop offset="0" stop-color="#0a1a10"/><stop offset="1" stop-color="#20b020"/></linearGradient></defs><rect width="589" height="215" fill="#2b2b2b"/><line x1="76.5" y1="0" x2="76.5" y2="215" stroke="#8c8c8c" stroke-width="1"/><line x1="154.5" y1="0" x2="154.5" y2="215" stroke="#8c8c8c" stroke-width="1"/><line x1="231.5" y1="0" x2="231.5" y2="215" stroke="#8c8c8c" stroke-width="1"/><line x1="308.5" y1="0" x2="308.5" y2="215" stroke="#8c8c8c" stroke-width="1"/><line x1="386.5" y1="0" x2="386.5" y2="215" stroke="#8c8c8c" stroke-width="1"/><line x1="463.5" y1="0" x2="463.5" y2="215" stroke="#8c8c8c" stroke-width="1"/><line x1="541.5" y1="0" x2="541.5" y2="215" stroke="#8c8c8c" stroke-width="1"/><line x1="0" y1="29.5" x2="589" y2="29.5" stroke="#8c8c8c" stroke-width="1"/><line x1="0" y1="62.5" x2="589" y2="62.5" stroke="#8c8c8c" stroke-width="1"/><line x1="0" y1="95.5" x2="589" y2="95.5" stroke="#8c8c8c" stroke-width="1"/><line x1="0" y1="128.5" x2="589" y2="128.5" stroke="#8c8c8c" stroke-width="1"/><line x1="0" y1="161.5" x2="589" y2="161.5" stroke="#8c8c8c" stroke-width="1"/><line x1="0" y1="194.5" x2="589" y2="194.5" stroke="#8c8c8c" stroke-width="1"/><text x="3" y="24" font-family="Liberation Sans" font-size="12" fill="#e8e8e8" letter-spacing="0.8">1.50</text><text x="3" y="57" font-family="Liberation Sans" font-size="12" fill="#e8e8e8" letter-spacing="0.8">1.00</text><text x="3" y="90" font-family="Liberation Sans" font-size="12" fill="#e8e8e8" letter-spacing="0.8">0.50</text><text x="3" y="123" font-family="Liberation Sans" font-size="12" fill="#e8e8e8" letter-spacing="0.8">0.00</text><text x="3" y="156" font-family="Liberation Sans" font-size="12" fill="#e8e8e8" letter-spacing="0.8">-0.50</text><text x="3" y="189" font-family="Liberation Sans" font-size="12" fill="#e8e8e8" letter-spacing="0.8">-1.00</text><text x="3" y="208" font-family="Liberation Sans" font-size="12" fill="#e8e8e8" letter-spacing="0.8">0.15</text><text x="79" y="208" font-family="Liberation Sans" font-size="12" fill="#e8e8e8" letter-spacing="0.8">0.20</text><text x="157" y="208" font-family="Liberation Sans" font-size="12" fill="#e8e8e8" letter-spacing="0.8">0.25</text><text x="234" y="208" font-family="Liberation Sans" font-size="12" fill="#e8e8e8" letter-spacing="0.8">0.30</text><text x="311" y="208" font-family="Liberation Sans" font-size="12" fill="#e8e8e8" letter-spacing="0.8">0.35</text><text x="389" y="208" font-family="Liberation Sans" font-size="12" fill="#e8e8e8" letter-spacing="0.8">0.40</text><text x="466" y="208" font-family="Liberation Sans" font-size="12" fill="#e8e8e8" letter-spacing="0.8">0.45</text><text x="544" y="208" font-family="Liberation Sans" font-size="12" fill="#e8e8e8" letter-spacing="0.8">0.50</text><path d="M0.0 128.0 C98.2 128.0 490.8 128.0 589.0 128.0" stroke="#1848d8" stroke-width="1.2" fill="none"/><path d="M0.0 122.5 C25.3 122.0 102.2 120.2 152.0 119.5 C201.8 118.8 254.2 118.6 299.0 118.5 C343.8 118.4 400.7 118.9 421.0 119.0" stroke="#101028" stroke-width="1.2" fill="none"/><path d="M421.0 119.5 C449.0 119.7 561.0 120.3 589.0 120.5" stroke="#20b020" stroke-width="1.1" fill="none"/><path d="M0.0 63.0 C98.2 63.0 490.8 63.0 589.0 63.0" stroke="#f4f4f4" stroke-width="1.6" fill="none"/><path d="M0.0 118.0 C7.5 116.2 27.3 110.5 45.0 107.0 C62.7 103.5 87.7 101.5 106.0 97.0 C124.3 92.5 140.2 84.7 155.0 80.0 C169.8 75.3 182.2 71.7 195.0 69.0 C207.8 66.3 217.0 65.0 232.0 64.0 C247.0 63.0 271.7 63.0 285.0 63.0 C298.3 63.0 295.3 62.3 312.0 64.0 C328.7 65.7 359.8 69.5 385.0 73.0 C410.2 76.5 429.0 81.3 463.0 85.0 C497.0 88.7 568.0 93.3 589.0 95.0" stroke="#a8a8a8" stroke-width="1" fill="none"/><path d="M0.0 74.0 C20.5 74.0 97.2 72.9 123.0 74.0 C148.8 75.1 143.0 76.8 155.0 80.5 C167.0 84.2 182.2 90.2 195.0 96.0 C207.8 101.8 222.2 111.1 232.0 115.5 C241.8 119.9 246.8 121.1 254.0 122.5 C261.2 123.9 271.5 123.8 275.0 124.0" stroke="#4aa8f0" stroke-width="1.1" fill="none"/><path d="M0.0 98.0 C20.5 98.0 97.2 97.7 123.0 98.0 C148.8 98.3 143.0 97.8 155.0 100.0 C167.0 102.2 182.2 107.8 195.0 111.0 C207.8 114.2 222.2 117.5 232.0 119.5 C241.8 121.5 246.8 122.2 254.0 123.0 C261.2 123.8 271.5 123.8 275.0 124.0" stroke="#4aa8f0" stroke-width="1.1" fill="none"/><path d="M171.0 0.0 C174.2 2.2 184.0 8.3 190.0 13.0 C196.0 17.7 201.2 23.0 207.0 28.0 C212.8 33.0 219.0 38.3 225.0 43.0 C231.0 47.7 238.2 52.7 243.0 56.0 C247.8 59.3 249.0 61.2 254.0 63.0 C259.0 64.8 263.3 66.3 273.0 67.0 C282.7 67.7 293.3 67.7 312.0 67.0 C330.7 66.3 359.8 64.8 385.0 63.0 C410.2 61.2 429.0 58.8 463.0 56.0 C497.0 53.2 568.0 47.7 589.0 46.0" stroke="#2a3ae8" stroke-width="1.3" fill="none"/><path d="M255.0 125.0 C270.0 124.8 310.3 125.5 345.0 124.0 C379.7 122.5 422.3 119.5 463.0 116.0 C503.7 112.5 568.0 105.2 589.0 103.0" stroke="#3040e8" stroke-width="1.2" fill="none"/><path d="M255.0 126.0 C270.0 126.0 310.3 127.0 345.0 126.0 C379.7 125.0 422.3 123.2 463.0 120.0 C503.7 116.8 568.0 109.2 589.0 107.0" stroke="#3040e8" stroke-width="1.2" fill="none"/><path d="M0.0 189.0 C5.8 190.5 22.5 195.2 35.0 198.0 C47.5 200.8 63.3 204.3 75.0 206.0 C86.7 207.7 95.3 207.7 105.0 208.0 C114.7 208.3 123.0 208.5 133.0 208.0 C143.0 207.5 154.7 206.3 165.0 205.0 C175.3 203.7 186.7 202.0 195.0 200.0 C203.3 198.0 208.8 195.7 215.0 193.0 C221.2 190.3 225.0 187.5 232.0 184.0 C239.0 180.5 248.8 176.7 257.0 172.0 C265.2 167.3 273.0 161.5 281.0 156.0 C289.0 150.5 296.8 144.5 305.0 139.0 C313.2 133.5 322.7 127.5 330.0 123.0 C337.3 118.5 345.8 113.8 349.0 112.0" stroke="#0a0a18" stroke-width="1.1" fill="none"/><path d="M335.0 120.0 C337.3 118.7 340.5 116.5 349.0 112.0 C357.5 107.5 373.3 98.8 386.0 93.0 C398.7 87.2 412.2 82.0 425.0 77.0 C437.8 72.0 446.3 67.5 463.0 63.0 C479.7 58.5 504.0 54.2 525.0 50.0 C546.0 45.8 578.3 40.0 589.0 38.0" stroke="url(#gg)" stroke-width="1.1" fill="none"/><path d="M257.0 174.0 C261.0 171.0 273.0 162.0 281.0 156.0 C289.0 150.0 301.0 141.0 305.0 138.0" stroke="#ffffff" stroke-width="1.2" fill="none"/><rect x="119.5" y="70.5" width="7" height="7" fill="#8a20c0" stroke="#20c020" stroke-width="1.5"/><rect x="119.5" y="94.5" width="7" height="7" fill="#8a20c0" stroke="#e02040" stroke-width="1.5"/><rect x="250.0" y="59.0" width="8" height="8" fill="#1a8ac8" stroke="#1a8ac8" stroke-width="1.5"/><rect x="269.5" y="63.5" width="7" height="7" fill="#8a20c0" stroke="#2030e0" stroke-width="1.5"/><rect x="269.5" y="120.5" width="7" height="7" fill="#8a20c0" stroke="#20c020" stroke-width="1.5"/><rect x="277.5" y="115.5" width="7" height="7" fill="#c020a0" stroke="#2030e0" stroke-width="1.5"/><rect x="277.0" y="124.0" width="8" height="8" fill="#e01040" stroke="#e01040" stroke-width="1.5"/><rect x="254.5" y="171.5" width="5" height="5" fill="#fff" stroke="#fff" stroke-width="1.5"/><rect x="302.5" y="135.5" width="5" height="5" fill="#fff" stroke="#fff" stroke-width="1.5"/><rect x="277.5" y="152.5" width="7" height="7" fill="#e8f020" stroke="#60c020" stroke-width="1.5"/><path d="M300.5 167.5 v17 l4 -4 l3.5 7 l2.5 -1.2 l-3.5 -6.8 h5.5 z" fill="#f4f4f4" stroke="#111" stroke-width="1"/></svg><div style="position:absolute;left:1243px;top:472px;width:1px;height:215px;background:#555"></div><svg class="a" style="left:0;top:68px" width="1280" height="30"><rect x="53" y="6" width="18" height="18" fill="#6a9bd2"/><path d="M60 12.5 h-1 a4 4 0 0 0 0 8 h6 a4 4 0 0 0 0 -8 h-1" fill="none" stroke="#000" stroke-width="1.6"/><path d="M60.5 12.5 l3.5 -3 v6 z" fill="#000"/><rect x="78" y="6" width="18" height="18" fill="#e8a060"/><path d="M85 12.5 h-1 a4 4 0 0 0 0 8 h6 a4 4 0 0 0 0 -8 h-1" fill="none" stroke="#000" stroke-width="1.6"/><path d="M85.5 12.5 l3.5 -3 v6 z" fill="#000"/><circle cx="117" cy="13" r="6" fill="#f0f4ff" stroke="#222" stroke-width="2"/><line x1="121" y1="17" x2="126" y2="22" stroke="#a08030" stroke-width="3.5" stroke-linecap="round"/><rect x="144" y="6" width="18" height="18" fill="#dde8d8"/><rect x="145" y="12" width="16" height="10" fill="#000"/><rect x="153" y="7" width="5" height="5" fill="#fff" stroke="#000"/><circle cx="152" cy="18" r="2.5" fill="#fff"/><rect x="174.5" y="4.5" width="24" height="21" rx="3" fill="#ccd4e0" stroke="#4a4a4a" stroke-width="1"/><polygon points="186,11 191,14 191,20 186,23 181,20 181,14" fill="none" stroke="#888" stroke-width="1"/><line x1="185" y1="17" x2="185" y2="8" stroke="#e02020" stroke-width="1.6"/><line x1="185" y1="17" x2="194" y2="17" stroke="#20b020" stroke-width="1.6"/><line x1="185" y1="17" x2="180" y2="22" stroke="#1a2ad0" stroke-width="1.6"/><rect x="202" y="6" width="18" height="18" fill="#c8c4bc"/><circle cx="212" cy="16" r="5" fill="#d0a090" stroke="#1010ff" stroke-width="2.6"/><path d="M203 11 l5 -3 l0 6 z" fill="#1010ff"/><rect x="227" y="6" width="18" height="18" rx="3" fill="#444"/><path d="M229 11 l5 -4 h10 v11 l-5 4 h-10 z" fill="#4a9aa0"/><path d="M229 11 l5 -4 h10 l-5 4 z" fill="#b0f0f0"/><path d="M239 11 l5 -4 v11 l-5 4 z" fill="#2a7a80"/><rect x="252" y="6" width="18" height="18" fill="#d8d4c8"/><circle cx="261" cy="15" r="9" fill="none" stroke="#f0e020" stroke-width="1.5"/><rect x="256" y="9" width="10" height="13" rx="1" fill="#d8d0c0" stroke="#222" stroke-width="1.6"/><rect x="277" y="6" width="18" height="18" fill="#e0dcb0"/><circle cx="286" cy="15" r="9" fill="none" stroke="#f0e020" stroke-width="1.5"/><path d="M281 9 h10 v9 l-3 2 v3 h-4 v-3 l-3 -2 z" fill="#1a6a78" stroke="#111" stroke-width="1"/><rect x="302.5" y="6.5" width="17" height="17" fill="#fff" stroke="#222" stroke-width="1"/><line x1="306.75" y1="6.5" x2="306.75" y2="23.5" stroke="#222" stroke-width="1.5"/><line x1="302.5" y1="10.75" x2="319.5" y2="10.75" stroke="#222" stroke-width="1.5"/><line x1="311.0" y1="6.5" x2="311.0" y2="23.5" stroke="#222" stroke-width="1.5"/><line x1="302.5" y1="15.0" x2="319.5" y2="15.0" stroke="#222" stroke-width="1.5"/><line x1="315.25" y1="6.5" x2="315.25" y2="23.5" stroke="#222" stroke-width="1.5"/><line x1="302.5" y1="19.25" x2="319.5" y2="19.25" stroke="#222" stroke-width="1.5"/><rect x="332.5" y="4.5" width="24" height="21" rx="3" fill="#ccd4e0" stroke="#4a4a4a" stroke-width="1"/><rect x="336" y="7" width="17" height="16" fill="#a8bcd8"/><path d="M339 9 l10 6 l-10 6 z" fill="#000"/><rect x="363" y="9" width="3" height="12" fill="#000"/><rect x="370" y="9" width="3" height="12" fill="#000"/><text x="386" y="20" font-family="Liberation Sans" font-size="10" fill="#000">100</text><rect x="415.5" y="4.5" width="24" height="21" rx="3" fill="#ccd4e0" stroke="#4a4a4a" stroke-width="1"/><path d="M425 12.5 h-1 a4 4 0 0 0 0 8 h6 a4 4 0 0 0 0 -8 h-1" fill="none" stroke="#000" stroke-width="1.6"/><path d="M425.5 12.5 l3.5 -3 v6 z" fill="#000"/><rect x="441.5" y="4.5" width="24" height="21" rx="3" fill="#ccd4e0" stroke="#4a4a4a" stroke-width="1"/><rect x="445" y="20" width="16" height="4" rx="1" fill="#222"/><path d="M447 20 q0 -4 6 -5 h2 q5 1 5 5 z" fill="#222"/><line x1="454" y1="8" x2="454" y2="16" stroke="#222" stroke-width="2"/><circle cx="454" cy="8" r="2.5" fill="#222"/><rect x="477" y="6" width="18" height="18" fill="#e6e6e6"/><circle cx="486" cy="12" r="4" fill="#f02020"/><circle cx="482" cy="19" r="4" fill="#20c020"/><circle cx="490" cy="19" r="4" fill="#1030f0"/><rect x="501" y="6" width="18" height="18" fill="#c8c8c8"/><circle cx="510" cy="15" r="8" fill="#2a6a6a"/><circle cx="507" cy="12" r="3" fill="#a0d0d0" opacity=".7"/><rect x="534" y="6" width="18" height="18" fill="#cac6be"/><circle cx="543" cy="16" r="5" fill="none" stroke="#c03010" stroke-width="3"/><path d="M535 10 l6 -2 l-1 6 z" fill="#c03010"/><rect x="559" y="6" width="18" height="18" fill="#cac6be"/><circle cx="568" cy="16" r="5" fill="none" stroke="#10a020" stroke-width="3"/><path d="M576 10 l-6 -2 l1 6 z" fill="#10a020"/><rect x="608" y="6" width="18" height="18" fill="#d8d0c4"/><path d="M617 8 l-6 7 l6 7 M623 8 l-6 7 l6 7" fill="none" stroke="#5a80b0" stroke-width="2.5"/><rect x="633" y="6" width="18" height="18" fill="#d8d0c4"/><path d="M645 8 l-6 7 l6 7" fill="none" stroke="#5a80b0" stroke-width="2.5"/><rect x="658" y="6" width="18" height="18" fill="#d8d0c4"/><path d="M659 23 v-8 h6 v-5 h6 v-5 h4" fill="#6a98c8" stroke="#222" stroke-width="1.3"/><rect x="680" y="5" width="24" height="19" fill="#fff"/><text x="684" y="19" font-family="Liberation Sans" font-size="12" fill="#000">1</text><rect x="706" y="5" width="48" height="19" fill="#fff"/><text x="708" y="19" font-family="Liberation Sans" font-size="12" fill="#000">Total = 2</text><rect x="758" y="6" width="18" height="18" fill="#d8d0c4"/><path d="M759 23 v-8 h6 v-5 h6 v-5 h4" fill="#6a98c8" stroke="#222" stroke-width="1.3"/><rect x="783" y="6" width="18" height="18" fill="#d8d0c4"/><path d="M789 8 l6 7 l-6 7" fill="none" stroke="#5a80b0" stroke-width="2.5"/><rect x="808" y="6" width="18" height="18" fill="#d8d0c4"/><path d="M811 8 l6 7 l-6 7 M817 8 l6 7 l-6 7" fill="none" stroke="#5a80b0" stroke-width="2.5"/><rect x="841" y="6" width="18" height="18" fill="#d8d0c4"/><path d="M842 22 v-6 h6 v-5 h6 v-4" fill="#6a98c8" stroke="#222" stroke-width="1.2"/><path d="M851 13 v10 h7" fill="none" stroke="#e87010" stroke-width="2.5"/><rect x="866" y="6" width="18" height="18" fill="#d8d0c4"/><path d="M867 22 v-6 h6 v-5 h6 v-4" fill="#6a98c8" stroke="#222" stroke-width="1.2"/><path d="M875 12 v11 M883 12 v11 M875 17 h8" fill="none" stroke="#e87010" stroke-width="2.5"/><rect x="899" y="6" width="18" height="18" fill="#d8d0c4"/><path d="M900 22 v-6 h6 v-5 h6 v-4" fill="#6a98c8" stroke="#222" stroke-width="1.2"/><path d="M900 7 l17 16 M917 7 l-17 16" fill="none" stroke="#e87010" stroke-width="2.5"/></svg><svg class="a" style="left:0;top:446px" width="1280" height="26"><rect x="448" y="4" width="14" height="17" fill="#fff"/><path d="M450 12.5 h10 M452 10 l-3 2.5 l3 2.5 M458 10 l3 2.5 l-3 2.5" fill="none" stroke="#222" stroke-width="1.6"/><path d="M449 6 v13 M461 6 v13" stroke="#999" stroke-width="1" fill="none"/><rect x="469" y="4" width="14" height="17" fill="#fff"/><path d="M476 6 v13 M473.5 8 l2.5 -3 l2.5 3 M473.5 17 l2.5 3 l2.5 -3" fill="none" stroke="#222" stroke-width="1.6"/><circle cx="497" cy="12.5" r="7" fill="#fff" stroke="#333"/><path d="M497 7 l5.5 5.5 l-5.5 5.5 l-5.5 -5.5 z" fill="#222"/><circle cx="518" cy="12.5" r="7" fill="#fff" stroke="#333"/><path d="M518 7 l5.5 5.5 l-5.5 5.5 l-5.5 -5.5 z" fill="none" stroke="#222" stroke-width="1.5"/><circle cx="518" cy="12.5" r="1.5" fill="#222"/><rect x="537.5" y="3.5" width="21" height="18" rx="3" fill="#ccd4e0" stroke="#4a4a4a"/><path d="M548 6 v13 M541.5 12.5 h13" stroke="#666" stroke-width="2.5"/><rect x="561" y="4" width="14" height="17" fill="#e8e4d0"/><circle cx="567" cy="12" r="4" fill="none" stroke="#222" stroke-width="1.3"/><path d="M567 5 v14 M560 12 h14 M570 15 l4 4" stroke="#222" stroke-width="1.3"/><path d="M592 8 l3 9 l3 -6 l3 6 l3 -9" fill="none" stroke="#222" stroke-width="1.2"/><path d="M592 18 h12" stroke="#222" stroke-dasharray="2 2"/><path d="M612 8 l3 9 l3 -6 l3 6 l3 -9" fill="none" stroke="#222" stroke-width="1.2"/><path d="M612 18 h12" stroke="#222" stroke-dasharray="2 2"/><rect x="629.5" y="3.5" width="21" height="18" rx="3" fill="#ccd4e0" stroke="#4a4a4a"/><path d="M634 7 l3 11 h6 l3 -11" fill="none" stroke="#222" stroke-width="1.3"/><path d="M656 18 h3 q3 0 4 -6 l3 -2" fill="none" stroke="#222" stroke-width="1.3"/><path d="M676 17 l11 -6" fill="none" stroke="#222" stroke-width="1.3"/><circle cx="676" cy="17" r="1.3" fill="#222"/><circle cx="687" cy="11" r="1.3" fill="#222"/><path d="M696 17 h10 v-6" fill="none" stroke="#222" stroke-width="1.3"/><path d="M725 7 v6 M733 7 v6 M722 10 l3 3 l3 -3 M730 10 l3 3 l3 -3" fill="none" stroke="#a01010" stroke-width="1.5"/><path d="M724 17 h13" stroke="#222" stroke-width="1.3"/><path d="M746 7 v6 M743 10 l3 3 l3 -3 M755 12 v7 M752 15 l3 -3 l3 3" fill="none" stroke="#a01010" stroke-width="1.5"/><path d="M745 17 l13 -7" stroke="#222" stroke-width="1.3"/><path d="M776 6 l4 4 l4 3 l4 6" fill="none" stroke="#333" stroke-width="1.3"/><circle cx="781" cy="11" r="2" fill="#555"/><circle cx="786" cy="15" r="2" fill="#555"/><rect x="803" y="5" width="14" height="14" fill="#fff" stroke="#10c010" stroke-width="1.5"/><path d="M806 7 v5 M806 9.5 h9 M813 8 l2 1.5 l-2 1.5 M806 15 h9 M813 13.5 l2 1.5 l-2 1.5 M815 13 v5" stroke="#111" stroke-width="1.2" fill="none"/><rect x="974" y="5" width="14" height="14" fill="#fff" stroke="#e01010" stroke-width="1.5"/><path d="M977 7 v5 M977 9.5 h9 M984 8 l2 1.5 l-2 1.5 M977 15 h9 M984 13.5 l2 1.5 l-2 1.5 M986 13 v5" stroke="#111" stroke-width="1.2" fill="none"/></svg><div style="position:absolute;left:821px;top:449px;width:150px;height:21px;background:linear-gradient(#f6f6f6,#dedede);border:1px solid #7a7a7a;border-radius:3px"><div class="a" style="left:3px;top:3px;font-size:12px;line-height:14px;color:#000">Default</div><div class="a" style="left:136px;top:7px;width:0;height:0;border-left:4px solid transparent;border-right:4px solid transparent;border-top:5px solid #000"></div></div><div style="position:absolute;left:0px;top:697px;width:1280px;height:23px;background:linear-gradient(#b8b8b8,#e4e4e4 40%,#f4f4f4 80%,#f0f0f0)"></div><div style="position:absolute;left:0px;top:697px;width:1280px;height:1px;background:#9a9a9a"></div><div style="position:absolute;left:2px;top:701px;width:347px;height:19px;background:#fff;border:1px solid #c8c8c8;border-bottom:none"></div><div style="position:absolute;left:336px;top:709px;width:0px;height:0px;border-left:4px solid transparent;border-right:4px solid transparent;border-top:5px solid #000"></div><div style="position:absolute;left:349px;top:699px;width:124px;height:21px;border-left:1px solid #c8c8c8;border-right:1px solid #c8c8c8"></div><div style="position:absolute;left:474px;top:702px;white-space:nowrap;font-size:11px;color:#111;line-height:15px">Persistent Level.Emitter_13<span style="color:#999">l</span>, 0, 526)</div><div style="position:absolute;left:719px;top:699px;width:61px;height:21px;background:#fff;border:1px solid #d8d8d8"></div><div style="position:absolute;left:723px;top:702px;white-space:nowrap;font-size:11.5px;color:#111;line-height:15px">1.0000</div><div style="position:absolute;left:781px;top:699px;width:61px;height:21px;background:#fff;border:1px solid #d8d8d8"></div><div style="position:absolute;left:785px;top:702px;white-space:nowrap;font-size:11.5px;color:#111;line-height:15px">1.0000</div><div style="position:absolute;left:843px;top:699px;width:61px;height:21px;background:#fff;border:1px solid #d8d8d8"></div><div style="position:absolute;left:847px;top:702px;white-space:nowrap;font-size:11.5px;color:#111;line-height:15px">1.0000</div><div style="position:absolute;left:905px;top:699px;width:61px;height:21px;background:#fff;border:1px solid #d8d8d8"></div><div style="position:absolute;left:909px;top:702px;white-space:nowrap;font-size:11.5px;color:#111;line-height:15px">1.0000</div><svg class="a" style="left:968px;top:701px" width="20" height="17"><path d="M2 2 v13 h16 M2 6 h12 M2 10 h12 M6 3 v13 M10 3 v13" stroke="#222" stroke-width="1" fill="none"/></svg><div style="position:absolute;left:990px;top:702px;white-space:nowrap;font-size:11.5px;color:#111;line-height:15px">16</div><div style="position:absolute;left:1012px;top:701px;width:12px;height:15px;background:#fff;border:1px solid #6a7a90"><svg class="a" style="left:0;top:1px" width="10" height="12"><path d="M1.5 6 L4 9.5 L9 1.5" stroke="#1a40c0" stroke-width="1.6" fill="none"/></svg></div><div style="position:absolute;left:1025px;top:700px;width:12px;height:17px;background:linear-gradient(#fafafa,#dcdcdc);border:1px solid #6a6a6a;border-radius:2px"><div class="a" style="left:2px;top:7px;width:0;height:0;border-left:3px solid transparent;border-right:3px solid transparent;border-top:4px solid #000"></div></div><svg class="a" style="left:1046px;top:701px" width="16" height="17"><path d="M1 15 h13 l-6 -12 z M6 15 v-3" stroke="#222" stroke-width="1.3" fill="none"/></svg><div style="position:absolute;left:1062px;top:702px;white-space:nowrap;font-size:11.5px;color:#111;line-height:15px">~6</div><div style="position:absolute;left:1089px;top:701px;width:12px;height:15px;background:#fff;border:1px solid #6a7a90"><svg class="a" style="left:0;top:1px" width="10" height="12"><path d="M1.5 6 L4 9.5 L9 1.5" stroke="#1a40c0" stroke-width="1.6" fill="none"/></svg></div><div style="position:absolute;left:1102px;top:700px;width:12px;height:17px;background:linear-gradient(#fafafa,#dcdcdc);border:1px solid #6a6a6a;border-radius:2px"><div class="a" style="left:2px;top:7px;width:0;height:0;border-left:3px solid transparent;border-right:3px solid transparent;border-top:4px solid #000"></div></div><div style="position:absolute;left:1127px;top:702px;white-space:nowrap;font-size:11.5px;color:#111;line-height:15px">5%</div><div style="position:absolute;left:1160px;top:701px;width:12px;height:15px;background:#fff;border:1px solid #6a7a90"><svg class="a" style="left:0;top:1px" width="10" height="12"><path d="M1.5 6 L4 9.5 L9 1.5" stroke="#1a40c0" stroke-width="1.6" fill="none"/></svg></div><div style="position:absolute;left:1173px;top:700px;width:12px;height:17px;background:linear-gradient(#fafafa,#dcdcdc);border:1px solid #6a6a6a;border-radius:2px"><div class="a" style="left:2px;top:7px;width:0;height:0;border-left:3px solid transparent;border-right:3px solid transparent;border-top:4px solid #000"></div></div><svg class="a" style="left:1197px;top:700px" width="20" height="19"><rect x="1" y="1" width="15" height="16" fill="#c8b060" stroke="#333"/><rect x="4" y="2" width="8" height="5" fill="#eee"/><path d="M7 11 l4 5 l8 -10" stroke="#10a010" stroke-width="3" fill="none"/></svg><div style="position:absolute;left:1227px;top:701px;width:12px;height:15px;background:#fff;border:1px solid #6a7a90"><svg class="a" style="left:0;top:1px" width="10" height="12"><path d="M1.5 6 L4 9.5 L9 1.5" stroke="#1a40c0" stroke-width="1.6" fill="none"/></svg></div><div style="position:absolute;left:1240px;top:700px;width:12px;height:17px;background:linear-gradient(#fafafa,#dcdcdc);border:1px solid #6a6a6a;border-radius:2px"><div class="a" style="left:2px;top:7px;width:0;height:0;border-left:3px solid transparent;border-right:3px solid transparent;border-top:4px solid #000"></div></div><div style="position:absolute;left:1221px;top:699px;width:1px;height:21px;background:#c8c8c8"></div><div style="position:absolute;left:38px;top:693px;width:1212px;height:1px;background:#30a8e8"></div><div style="position:absolute;left:40px;top:694px;width:1212px;height:3px;background:linear-gradient(#101010,#404040)"></div></body></html>
